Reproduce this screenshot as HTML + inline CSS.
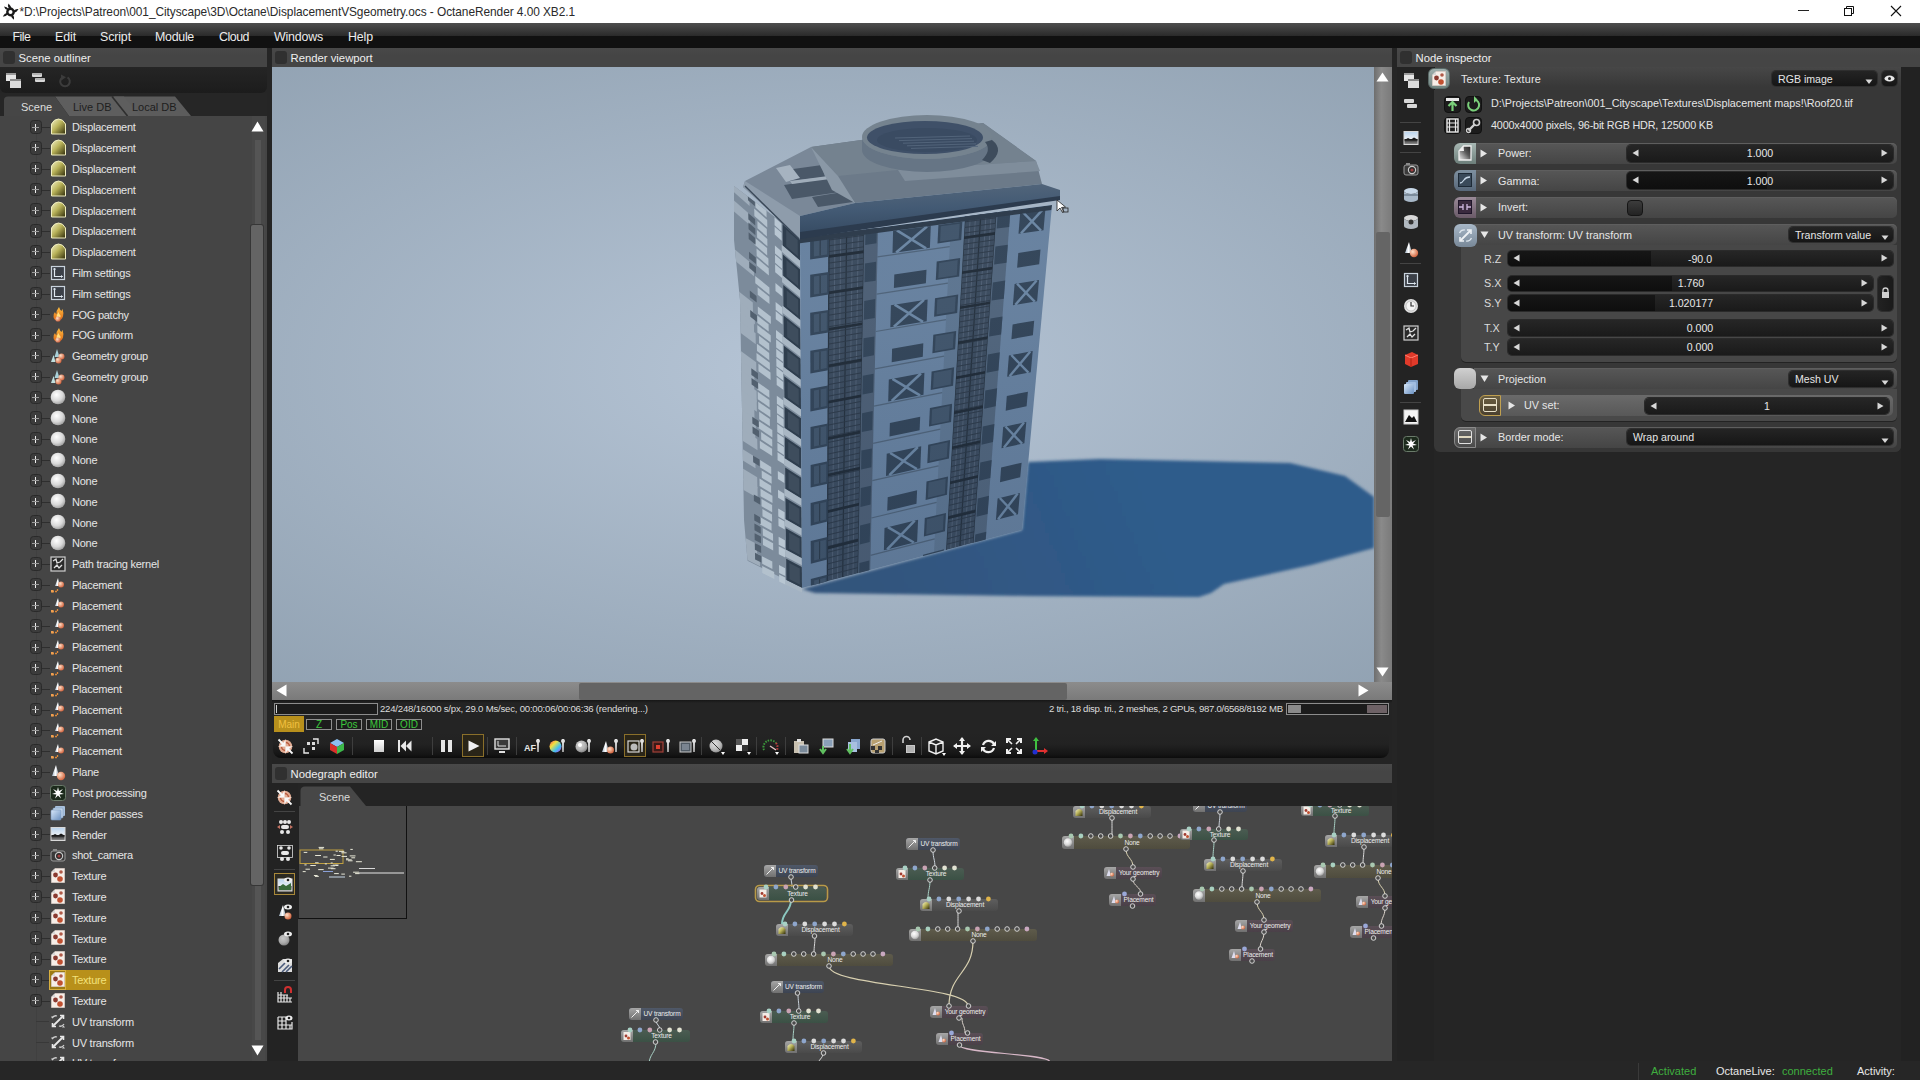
<!DOCTYPE html><html><head><meta charset="utf-8"><style>
html,body{margin:0;padding:0;width:1920px;height:1080px;overflow:hidden;background:#252525}
.a{position:absolute}
.t{font-family:"Liberation Sans",sans-serif;white-space:pre}
svg{overflow:visible}
</style></head><body>
<svg width="0" height="0" style="position:absolute"><defs>
<linearGradient id="gDisp" x1="0" y1="0" x2="1" y2="1"><stop offset="0" stop-color="#f4f2c8"/><stop offset="0.45" stop-color="#b9b35a"/><stop offset="1" stop-color="#2e2a08"/></linearGradient>
<radialGradient id="gSph" cx="0.4" cy="0.35" r="0.7"><stop offset="0" stop-color="#ffffff"/><stop offset="0.6" stop-color="#d8d8d8"/><stop offset="1" stop-color="#9a9a9a"/></radialGradient>
<radialGradient id="gOr" cx="0.35" cy="0.35" r="0.7"><stop offset="0" stop-color="#ffe0c8"/><stop offset="1" stop-color="#d0603a"/></radialGradient>
<linearGradient id="gCone" x1="0" y1="0" x2="1" y2="0"><stop offset="0" stop-color="#9fb3c6"/><stop offset="0.5" stop-color="#ffffff"/><stop offset="1" stop-color="#8a9aaa"/></linearGradient>
<linearGradient id="gFlame" x1="0" y1="0" x2="0" y2="1"><stop offset="0" stop-color="#ffc040"/><stop offset="1" stop-color="#e06818"/></linearGradient>
<linearGradient id="gBlue" x1="0" y1="0" x2="1" y2="1"><stop offset="0" stop-color="#d8e8fa"/><stop offset="1" stop-color="#6a90c0"/></linearGradient>
<linearGradient id="gImg" x1="0" y1="0" x2="0" y2="1"><stop offset="0" stop-color="#b9d4ee"/><stop offset="0.55" stop-color="#e8eef4"/><stop offset="0.6" stop-color="#202020"/><stop offset="1" stop-color="#9a9a9a"/></linearGradient>
</defs></svg>
<div class="a" style="left:0;top:0;width:1920px;height:23px;background:#fff"></div>
<svg class="a" style="left:2px;top:3px" width="17" height="17" viewBox="0 0 17 17">
<circle cx="8.5" cy="9" r="3.2" fill="none" stroke="#1a1a1a" stroke-width="2.4"/>
<g fill="#1a1a1a"><path d="M7 5.5Q5 3 6.5 0.5Q8.5 2.5 9.8 5.6Z"/><path d="M11.8 7.6Q14 5.5 16.5 6.2Q15 9 12 9.6Z"/><path d="M11 12Q13 14.5 12 16.8Q9.5 15 8.6 12.3Z"/><path d="M5.6 11.6Q3.5 14 0.8 13.5Q2.2 10.6 5.2 9.8Z"/><path d="M5.4 7Q2.8 6.2 2 3.5Q5 3.5 6.6 6Z"/></g></svg>
<div class="a t" style="left:19.50px;top:7.00px;font-size:11.9px;line-height:11.9px;color:#2a2a2a;letter-spacing:-0.062px;">*D:\Projects\Patreon\001_Cityscape\3D\Octane\DisplacementVSgeometry.ocs - OctaneRender 4.00 XB2.1</div>
<div class="a" style="left:1798px;top:10px;width:11px;height:1px;background:#222"></div>
<svg class="a" style="left:1843px;top:5px" width="12" height="12" viewBox="0 0 12 12"><rect x="1.5" y="3.5" width="7" height="7" fill="none" stroke="#111"/><path d="M3.5 3.5V1.5h7v7h-2" fill="none" stroke="#111"/></svg>
<svg class="a" style="left:1890px;top:5px" width="12" height="12" viewBox="0 0 12 12"><path d="M1 1L11 11M11 1L1 11" stroke="#111" stroke-width="1.1"/></svg>
<div class="a" style="left:0;top:23px;width:1920px;height:13px;background:linear-gradient(#4e4e4e,#2a2a2a)"></div>
<div class="a" style="left:0;top:36px;width:1920px;height:12px;background:#111"></div>
<div class="a t" style="left:12.50px;top:31.00px;font-size:12.4px;line-height:12.4px;color:#ececec;letter-spacing:-0.495px;">File</div>
<div class="a t" style="left:55.00px;top:31.00px;font-size:12.4px;line-height:12.4px;color:#ececec;letter-spacing:-0.092px;">Edit</div>
<div class="a t" style="left:100.00px;top:31.00px;font-size:12.4px;line-height:12.4px;color:#ececec;letter-spacing:-0.116px;">Script</div>
<div class="a t" style="left:155.00px;top:31.00px;font-size:12.4px;line-height:12.4px;color:#ececec;letter-spacing:-0.278px;">Module</div>
<div class="a t" style="left:219.00px;top:31.00px;font-size:12.4px;line-height:12.4px;color:#ececec;letter-spacing:-0.480px;">Cloud</div>
<div class="a t" style="left:274.00px;top:31.00px;font-size:12.4px;line-height:12.4px;color:#ececec;letter-spacing:-0.186px;">Windows</div>
<div class="a t" style="left:348.00px;top:31.00px;font-size:12.4px;line-height:12.4px;color:#ececec;letter-spacing:-0.126px;">Help</div>
<div class="a" style="left:0;top:48px;width:1920px;height:1013px;background:#252525"></div>
<div class="a" style="left:0;top:1061px;width:1920px;height:19px;background:#262626"></div>
<div class="a" style="left:1638px;top:1063px;width:1px;height:17px;background:#3a3a3a"></div>
<div class="a t" style="left:1651px;top:1064px;font-size:11px;color:#3fae3f;line-height:14px">Activated</div>
<div class="a t" style="left:1716px;top:1064px;font-size:11px;color:#e8e8e8;line-height:14px">OctaneLive:</div>
<div class="a t" style="left:1782px;top:1064px;font-size:11px;color:#3fae3f;line-height:14px">connected</div>
<div class="a t" style="left:1857px;top:1064px;font-size:11px;color:#e8e8e8;line-height:14px">Activity:</div>
<div class="a" style="left:0px;top:48px;width:267px;height:19px;background:linear-gradient(#494949,#454545 40%,#454545)"></div>
<div class="a" style="left:3px;top:51px;width:12px;height:13px;background:#303030;border-radius:3px"></div>
<div class="a t" style="left:18.50px;top:53.00px;font-size:11.3px;line-height:11.3px;color:#efefef;">Scene outliner</div>
<div class="a" style="left:0;top:67px;width:267px;height:26px;background:linear-gradient(#252525,#1c1c1c);border-radius:0 0 6px 6px"></div>
<svg class="a" style="left:5px;top:72px" width="17" height="17" viewBox="0 0 17 17"><rect x="1" y="1" width="10" height="8" fill="#e6e6e6"/><rect x="1" y="1" width="10" height="2" fill="#9a9a9a"/><rect x="5" y="7" width="11" height="9" fill="#dcdcdc"/><rect x="5" y="7" width="11" height="2" fill="#8a8a8a"/></svg>
<svg class="a" style="left:31px;top:72px" width="16" height="12" viewBox="0 0 16 12"><rect x="1" y="1" width="10" height="4" rx="1" fill="#d8d8d8"/><rect x="1.5" y="1.5" width="9" height="1" fill="#888"/><rect x="4" y="6" width="10" height="4" rx="1" fill="#d8d8d8"/><rect x="4.5" y="6.5" width="9" height="1" fill="#888"/></svg>
<svg class="a" style="left:58px;top:73px" width="14" height="16" viewBox="0 0 14 16"><path d="M4.2 4.6A4.8 4.8 0 1 0 9.5 4.4" fill="none" stroke="#3c3c3c" stroke-width="2"/><path d="M3 1.5L8 4.2L3.2 7.5Z" fill="#3c3c3c"/></svg>
<div class="a" style="left:0;top:93px;width:267px;height:23px;background:#262626"></div>
<svg class="a" style="left:0px;top:96px" width="200" height="20" viewBox="0 0 200 20"><path d="M114 0.5H175L191 20H127Z" fill="#5c5c5c"/><path d="M55 0.5H124L140 20H69Z" fill="#5e5e5e"/><path d="M4 20V4Q4 0.5 8 0.5H55L69 20Z" fill="#464646"/><path d="M112 0.5L127.5 20" stroke="#2e2e2e" stroke-width="1.6"/></svg>
<div class="a t" style="left:21px;top:100px;font-size:11px;color:#dedede;line-height:14px">Scene</div>
<div class="a t" style="left:73px;top:100px;font-size:11px;color:#1e1e1e;line-height:14px">Live DB</div>
<div class="a t" style="left:132px;top:100px;font-size:11px;color:#1e1e1e;line-height:14px">Local DB</div>
<div class="a" style="left:0;top:116px;width:267px;height:945px;background:#454545;overflow:hidden" id="outl">
<div class="a" style="left:36px;top:11px;width:1px;height:935px;background:#404040"></div>
<div class="a" style="left:29.5px;top:4.2px;width:12.5px;height:13.5px;box-sizing:border-box;border:1.4px solid #2a2a2a;background:#3c3c3c;border-radius:3.5px"></div>
<div class="a" style="left:35px;top:7.6px;width:1.2px;height:7px;background:#eeeeee"></div>
<div class="a" style="left:32px;top:10.6px;width:7px;height:1.1px;background:#9a9a9a"></div>
<div class="a" style="left:42px;top:11.2px;width:8px;height:1px;background:#2e2e2e"></div>
<svg class="a" style="left:50px;top:2px" width="17" height="17" viewBox="0 0 17 17"><path d="M1.5 16V6Q4 1 8.5 1Q13 1 15.5 6V16Z" fill="url(#gDisp)" stroke="#f0eec0" stroke-width="1"/></svg>
<div class="a t" style="left:72px;top:4px;font-size:11px;letter-spacing:-0.25px;color:#e6e6e6;line-height:14px">Displacement</div>
<div class="a" style="left:29.5px;top:25.0px;width:12.5px;height:13.5px;box-sizing:border-box;border:1.4px solid #2a2a2a;background:#3c3c3c;border-radius:3.5px"></div>
<div class="a" style="left:35px;top:28.4px;width:1.2px;height:7px;background:#eeeeee"></div>
<div class="a" style="left:32px;top:31.4px;width:7px;height:1.1px;background:#9a9a9a"></div>
<div class="a" style="left:42px;top:32.0px;width:8px;height:1px;background:#2e2e2e"></div>
<svg class="a" style="left:50px;top:23px" width="17" height="17" viewBox="0 0 17 17"><path d="M1.5 16V6Q4 1 8.5 1Q13 1 15.5 6V16Z" fill="url(#gDisp)" stroke="#f0eec0" stroke-width="1"/></svg>
<div class="a t" style="left:72px;top:25px;font-size:11px;letter-spacing:-0.25px;color:#e6e6e6;line-height:14px">Displacement</div>
<div class="a" style="left:29.5px;top:45.8px;width:12.5px;height:13.5px;box-sizing:border-box;border:1.4px solid #2a2a2a;background:#3c3c3c;border-radius:3.5px"></div>
<div class="a" style="left:35px;top:49.2px;width:1.2px;height:7px;background:#eeeeee"></div>
<div class="a" style="left:32px;top:52.2px;width:7px;height:1.1px;background:#9a9a9a"></div>
<div class="a" style="left:42px;top:52.8px;width:8px;height:1px;background:#2e2e2e"></div>
<svg class="a" style="left:50px;top:44px" width="17" height="17" viewBox="0 0 17 17"><path d="M1.5 16V6Q4 1 8.5 1Q13 1 15.5 6V16Z" fill="url(#gDisp)" stroke="#f0eec0" stroke-width="1"/></svg>
<div class="a t" style="left:72px;top:46px;font-size:11px;letter-spacing:-0.25px;color:#e6e6e6;line-height:14px">Displacement</div>
<div class="a" style="left:29.5px;top:66.6px;width:12.5px;height:13.5px;box-sizing:border-box;border:1.4px solid #2a2a2a;background:#3c3c3c;border-radius:3.5px"></div>
<div class="a" style="left:35px;top:70.0px;width:1.2px;height:7px;background:#eeeeee"></div>
<div class="a" style="left:32px;top:73.0px;width:7px;height:1.1px;background:#9a9a9a"></div>
<div class="a" style="left:42px;top:73.6px;width:8px;height:1px;background:#2e2e2e"></div>
<svg class="a" style="left:50px;top:64px" width="17" height="17" viewBox="0 0 17 17"><path d="M1.5 16V6Q4 1 8.5 1Q13 1 15.5 6V16Z" fill="url(#gDisp)" stroke="#f0eec0" stroke-width="1"/></svg>
<div class="a t" style="left:72px;top:67px;font-size:11px;letter-spacing:-0.25px;color:#e6e6e6;line-height:14px">Displacement</div>
<div class="a" style="left:29.5px;top:87.4px;width:12.5px;height:13.5px;box-sizing:border-box;border:1.4px solid #2a2a2a;background:#3c3c3c;border-radius:3.5px"></div>
<div class="a" style="left:35px;top:90.8px;width:1.2px;height:7px;background:#eeeeee"></div>
<div class="a" style="left:32px;top:93.8px;width:7px;height:1.1px;background:#9a9a9a"></div>
<div class="a" style="left:42px;top:94.4px;width:8px;height:1px;background:#2e2e2e"></div>
<svg class="a" style="left:50px;top:85px" width="17" height="17" viewBox="0 0 17 17"><path d="M1.5 16V6Q4 1 8.5 1Q13 1 15.5 6V16Z" fill="url(#gDisp)" stroke="#f0eec0" stroke-width="1"/></svg>
<div class="a t" style="left:72px;top:88px;font-size:11px;letter-spacing:-0.25px;color:#e6e6e6;line-height:14px">Displacement</div>
<div class="a" style="left:29.5px;top:108.2px;width:12.5px;height:13.5px;box-sizing:border-box;border:1.4px solid #2a2a2a;background:#3c3c3c;border-radius:3.5px"></div>
<div class="a" style="left:35px;top:111.6px;width:1.2px;height:7px;background:#eeeeee"></div>
<div class="a" style="left:32px;top:114.6px;width:7px;height:1.1px;background:#9a9a9a"></div>
<div class="a" style="left:42px;top:115.2px;width:8px;height:1px;background:#2e2e2e"></div>
<svg class="a" style="left:50px;top:106px" width="17" height="17" viewBox="0 0 17 17"><path d="M1.5 16V6Q4 1 8.5 1Q13 1 15.5 6V16Z" fill="url(#gDisp)" stroke="#f0eec0" stroke-width="1"/></svg>
<div class="a t" style="left:72px;top:108px;font-size:11px;letter-spacing:-0.25px;color:#e6e6e6;line-height:14px">Displacement</div>
<div class="a" style="left:29.5px;top:129.0px;width:12.5px;height:13.5px;box-sizing:border-box;border:1.4px solid #2a2a2a;background:#3c3c3c;border-radius:3.5px"></div>
<div class="a" style="left:35px;top:132.4px;width:1.2px;height:7px;background:#eeeeee"></div>
<div class="a" style="left:32px;top:135.4px;width:7px;height:1.1px;background:#9a9a9a"></div>
<div class="a" style="left:42px;top:136.0px;width:8px;height:1px;background:#2e2e2e"></div>
<svg class="a" style="left:50px;top:127px" width="17" height="17" viewBox="0 0 17 17"><path d="M1.5 16V6Q4 1 8.5 1Q13 1 15.5 6V16Z" fill="url(#gDisp)" stroke="#f0eec0" stroke-width="1"/></svg>
<div class="a t" style="left:72px;top:129px;font-size:11px;letter-spacing:-0.25px;color:#e6e6e6;line-height:14px">Displacement</div>
<div class="a" style="left:29.5px;top:149.8px;width:12.5px;height:13.5px;box-sizing:border-box;border:1.4px solid #2a2a2a;background:#3c3c3c;border-radius:3.5px"></div>
<div class="a" style="left:35px;top:153.2px;width:1.2px;height:7px;background:#eeeeee"></div>
<div class="a" style="left:32px;top:156.2px;width:7px;height:1.1px;background:#9a9a9a"></div>
<div class="a" style="left:42px;top:156.8px;width:8px;height:1px;background:#2e2e2e"></div>
<svg class="a" style="left:50px;top:149px" width="16" height="16" viewBox="0 0 16 16"><rect x="1.5" y="1.5" width="13" height="13" fill="#3b4048" stroke="#c8d2dc" stroke-width="1.2"/><path d="M4.5 3.5V11.5H12.5" fill="none" stroke="#dfe8f0" stroke-width="1.2"/><path d="M3.5 4.5L4.5 3L5.5 4.5M11 10.5L12.5 11.5L11 12.5" fill="none" stroke="#dfe8f0"/></svg>
<div class="a t" style="left:72px;top:150px;font-size:11px;letter-spacing:-0.25px;color:#e6e6e6;line-height:14px">Film settings</div>
<div class="a" style="left:29.5px;top:170.6px;width:12.5px;height:13.5px;box-sizing:border-box;border:1.4px solid #2a2a2a;background:#3c3c3c;border-radius:3.5px"></div>
<div class="a" style="left:35px;top:174.0px;width:1.2px;height:7px;background:#eeeeee"></div>
<div class="a" style="left:32px;top:177.0px;width:7px;height:1.1px;background:#9a9a9a"></div>
<div class="a" style="left:42px;top:177.6px;width:8px;height:1px;background:#2e2e2e"></div>
<svg class="a" style="left:50px;top:169px" width="16" height="16" viewBox="0 0 16 16"><rect x="1.5" y="1.5" width="13" height="13" fill="#3b4048" stroke="#c8d2dc" stroke-width="1.2"/><path d="M4.5 3.5V11.5H12.5" fill="none" stroke="#dfe8f0" stroke-width="1.2"/><path d="M3.5 4.5L4.5 3L5.5 4.5M11 10.5L12.5 11.5L11 12.5" fill="none" stroke="#dfe8f0"/></svg>
<div class="a t" style="left:72px;top:171px;font-size:11px;letter-spacing:-0.25px;color:#e6e6e6;line-height:14px">Film settings</div>
<div class="a" style="left:29.5px;top:191.4px;width:12.5px;height:13.5px;box-sizing:border-box;border:1.4px solid #2a2a2a;background:#3c3c3c;border-radius:3.5px"></div>
<div class="a" style="left:35px;top:194.8px;width:1.2px;height:7px;background:#eeeeee"></div>
<div class="a" style="left:32px;top:197.8px;width:7px;height:1.1px;background:#9a9a9a"></div>
<div class="a" style="left:42px;top:198.4px;width:8px;height:1px;background:#2e2e2e"></div>
<svg class="a" style="left:50px;top:190px" width="16" height="17" viewBox="0 0 16 17"><path d="M9 1Q10 4 11.5 5Q12 3.5 12.5 3Q14 7 13 10.5Q11.5 14.5 8 14.5Q4 14.5 3.5 11Q3 8 5 6Q5.5 8 6.5 8Q6 4.5 9 1Z" fill="url(#gFlame)"/><path d="M8.5 6Q9.5 9 10.5 9.5Q11 11 9.5 12.5Q7 13 6.5 11Q6.5 9 8.5 6Z" fill="#ffe080"/><circle cx="8" cy="13" r="2.6" fill="url(#gOr)"/></svg>
<div class="a t" style="left:72px;top:192px;font-size:11px;letter-spacing:-0.25px;color:#e6e6e6;line-height:14px">FOG patchy</div>
<div class="a" style="left:29.5px;top:212.2px;width:12.5px;height:13.5px;box-sizing:border-box;border:1.4px solid #2a2a2a;background:#3c3c3c;border-radius:3.5px"></div>
<div class="a" style="left:35px;top:215.6px;width:1.2px;height:7px;background:#eeeeee"></div>
<div class="a" style="left:32px;top:218.6px;width:7px;height:1.1px;background:#9a9a9a"></div>
<div class="a" style="left:42px;top:219.2px;width:8px;height:1px;background:#2e2e2e"></div>
<svg class="a" style="left:50px;top:211px" width="16" height="17" viewBox="0 0 16 17"><path d="M9 1Q10 4 11.5 5Q12 3.5 12.5 3Q14 7 13 10.5Q11.5 14.5 8 14.5Q4 14.5 3.5 11Q3 8 5 6Q5.5 8 6.5 8Q6 4.5 9 1Z" fill="url(#gFlame)"/><path d="M8.5 6Q9.5 9 10.5 9.5Q11 11 9.5 12.5Q7 13 6.5 11Q6.5 9 8.5 6Z" fill="#ffe080"/><circle cx="8" cy="13" r="2.6" fill="url(#gOr)"/></svg>
<div class="a t" style="left:72px;top:212px;font-size:11px;letter-spacing:-0.25px;color:#e6e6e6;line-height:14px">FOG uniform</div>
<div class="a" style="left:29.5px;top:233.0px;width:12.5px;height:13.5px;box-sizing:border-box;border:1.4px solid #2a2a2a;background:#3c3c3c;border-radius:3.5px"></div>
<div class="a" style="left:35px;top:236.4px;width:1.2px;height:7px;background:#eeeeee"></div>
<div class="a" style="left:32px;top:239.4px;width:7px;height:1.1px;background:#9a9a9a"></div>
<div class="a" style="left:42px;top:240.0px;width:8px;height:1px;background:#2e2e2e"></div>
<svg class="a" style="left:50px;top:232px" width="16" height="16" viewBox="0 0 16 16"><path d="M7 1L4.5 9H9.5Z" fill="#a8d0d8"/><path d="M3.5 7L1 14H5.5Z" fill="#c0e0e0"/><circle cx="11.5" cy="8.5" r="3" fill="url(#gOr)"/><circle cx="8.5" cy="12.5" r="3" fill="url(#gOr)"/></svg>
<div class="a t" style="left:72px;top:233px;font-size:11px;letter-spacing:-0.25px;color:#e6e6e6;line-height:14px">Geometry group</div>
<div class="a" style="left:29.5px;top:253.8px;width:12.5px;height:13.5px;box-sizing:border-box;border:1.4px solid #2a2a2a;background:#3c3c3c;border-radius:3.5px"></div>
<div class="a" style="left:35px;top:257.2px;width:1.2px;height:7px;background:#eeeeee"></div>
<div class="a" style="left:32px;top:260.2px;width:7px;height:1.1px;background:#9a9a9a"></div>
<div class="a" style="left:42px;top:260.8px;width:8px;height:1px;background:#2e2e2e"></div>
<svg class="a" style="left:50px;top:253px" width="16" height="16" viewBox="0 0 16 16"><path d="M7 1L4.5 9H9.5Z" fill="#a8d0d8"/><path d="M3.5 7L1 14H5.5Z" fill="#c0e0e0"/><circle cx="11.5" cy="8.5" r="3" fill="url(#gOr)"/><circle cx="8.5" cy="12.5" r="3" fill="url(#gOr)"/></svg>
<div class="a t" style="left:72px;top:254px;font-size:11px;letter-spacing:-0.25px;color:#e6e6e6;line-height:14px">Geometry group</div>
<div class="a" style="left:29.5px;top:274.6px;width:12.5px;height:13.5px;box-sizing:border-box;border:1.4px solid #2a2a2a;background:#3c3c3c;border-radius:3.5px"></div>
<div class="a" style="left:35px;top:278.0px;width:1.2px;height:7px;background:#eeeeee"></div>
<div class="a" style="left:32px;top:281.0px;width:7px;height:1.1px;background:#9a9a9a"></div>
<div class="a" style="left:42px;top:281.6px;width:8px;height:1px;background:#2e2e2e"></div>
<svg class="a" style="left:50px;top:273px" width="16" height="16" viewBox="0 0 16 16"><circle cx="8" cy="8" r="7.3" fill="url(#gSph)"/></svg>
<div class="a t" style="left:72px;top:275px;font-size:11px;letter-spacing:-0.25px;color:#e6e6e6;line-height:14px">None</div>
<div class="a" style="left:29.5px;top:295.4px;width:12.5px;height:13.5px;box-sizing:border-box;border:1.4px solid #2a2a2a;background:#3c3c3c;border-radius:3.5px"></div>
<div class="a" style="left:35px;top:298.8px;width:1.2px;height:7px;background:#eeeeee"></div>
<div class="a" style="left:32px;top:301.8px;width:7px;height:1.1px;background:#9a9a9a"></div>
<div class="a" style="left:42px;top:302.4px;width:8px;height:1px;background:#2e2e2e"></div>
<svg class="a" style="left:50px;top:294px" width="16" height="16" viewBox="0 0 16 16"><circle cx="8" cy="8" r="7.3" fill="url(#gSph)"/></svg>
<div class="a t" style="left:72px;top:296px;font-size:11px;letter-spacing:-0.25px;color:#e6e6e6;line-height:14px">None</div>
<div class="a" style="left:29.5px;top:316.2px;width:12.5px;height:13.5px;box-sizing:border-box;border:1.4px solid #2a2a2a;background:#3c3c3c;border-radius:3.5px"></div>
<div class="a" style="left:35px;top:319.6px;width:1.2px;height:7px;background:#eeeeee"></div>
<div class="a" style="left:32px;top:322.6px;width:7px;height:1.1px;background:#9a9a9a"></div>
<div class="a" style="left:42px;top:323.2px;width:8px;height:1px;background:#2e2e2e"></div>
<svg class="a" style="left:50px;top:315px" width="16" height="16" viewBox="0 0 16 16"><circle cx="8" cy="8" r="7.3" fill="url(#gSph)"/></svg>
<div class="a t" style="left:72px;top:316px;font-size:11px;letter-spacing:-0.25px;color:#e6e6e6;line-height:14px">None</div>
<div class="a" style="left:29.5px;top:337.0px;width:12.5px;height:13.5px;box-sizing:border-box;border:1.4px solid #2a2a2a;background:#3c3c3c;border-radius:3.5px"></div>
<div class="a" style="left:35px;top:340.4px;width:1.2px;height:7px;background:#eeeeee"></div>
<div class="a" style="left:32px;top:343.4px;width:7px;height:1.1px;background:#9a9a9a"></div>
<div class="a" style="left:42px;top:344.0px;width:8px;height:1px;background:#2e2e2e"></div>
<svg class="a" style="left:50px;top:336px" width="16" height="16" viewBox="0 0 16 16"><circle cx="8" cy="8" r="7.3" fill="url(#gSph)"/></svg>
<div class="a t" style="left:72px;top:337px;font-size:11px;letter-spacing:-0.25px;color:#e6e6e6;line-height:14px">None</div>
<div class="a" style="left:29.5px;top:357.8px;width:12.5px;height:13.5px;box-sizing:border-box;border:1.4px solid #2a2a2a;background:#3c3c3c;border-radius:3.5px"></div>
<div class="a" style="left:35px;top:361.2px;width:1.2px;height:7px;background:#eeeeee"></div>
<div class="a" style="left:32px;top:364.2px;width:7px;height:1.1px;background:#9a9a9a"></div>
<div class="a" style="left:42px;top:364.8px;width:8px;height:1px;background:#2e2e2e"></div>
<svg class="a" style="left:50px;top:357px" width="16" height="16" viewBox="0 0 16 16"><circle cx="8" cy="8" r="7.3" fill="url(#gSph)"/></svg>
<div class="a t" style="left:72px;top:358px;font-size:11px;letter-spacing:-0.25px;color:#e6e6e6;line-height:14px">None</div>
<div class="a" style="left:29.5px;top:378.6px;width:12.5px;height:13.5px;box-sizing:border-box;border:1.4px solid #2a2a2a;background:#3c3c3c;border-radius:3.5px"></div>
<div class="a" style="left:35px;top:382.0px;width:1.2px;height:7px;background:#eeeeee"></div>
<div class="a" style="left:32px;top:385.0px;width:7px;height:1.1px;background:#9a9a9a"></div>
<div class="a" style="left:42px;top:385.6px;width:8px;height:1px;background:#2e2e2e"></div>
<svg class="a" style="left:50px;top:377px" width="16" height="16" viewBox="0 0 16 16"><circle cx="8" cy="8" r="7.3" fill="url(#gSph)"/></svg>
<div class="a t" style="left:72px;top:379px;font-size:11px;letter-spacing:-0.25px;color:#e6e6e6;line-height:14px">None</div>
<div class="a" style="left:29.5px;top:399.4px;width:12.5px;height:13.5px;box-sizing:border-box;border:1.4px solid #2a2a2a;background:#3c3c3c;border-radius:3.5px"></div>
<div class="a" style="left:35px;top:402.8px;width:1.2px;height:7px;background:#eeeeee"></div>
<div class="a" style="left:32px;top:405.8px;width:7px;height:1.1px;background:#9a9a9a"></div>
<div class="a" style="left:42px;top:406.4px;width:8px;height:1px;background:#2e2e2e"></div>
<svg class="a" style="left:50px;top:398px" width="16" height="16" viewBox="0 0 16 16"><circle cx="8" cy="8" r="7.3" fill="url(#gSph)"/></svg>
<div class="a t" style="left:72px;top:400px;font-size:11px;letter-spacing:-0.25px;color:#e6e6e6;line-height:14px">None</div>
<div class="a" style="left:29.5px;top:420.2px;width:12.5px;height:13.5px;box-sizing:border-box;border:1.4px solid #2a2a2a;background:#3c3c3c;border-radius:3.5px"></div>
<div class="a" style="left:35px;top:423.6px;width:1.2px;height:7px;background:#eeeeee"></div>
<div class="a" style="left:32px;top:426.6px;width:7px;height:1.1px;background:#9a9a9a"></div>
<div class="a" style="left:42px;top:427.2px;width:8px;height:1px;background:#2e2e2e"></div>
<svg class="a" style="left:50px;top:419px" width="16" height="16" viewBox="0 0 16 16"><circle cx="8" cy="8" r="7.3" fill="url(#gSph)"/></svg>
<div class="a t" style="left:72px;top:420px;font-size:11px;letter-spacing:-0.25px;color:#e6e6e6;line-height:14px">None</div>
<div class="a" style="left:29.5px;top:441.0px;width:12.5px;height:13.5px;box-sizing:border-box;border:1.4px solid #2a2a2a;background:#3c3c3c;border-radius:3.5px"></div>
<div class="a" style="left:35px;top:444.4px;width:1.2px;height:7px;background:#eeeeee"></div>
<div class="a" style="left:32px;top:447.4px;width:7px;height:1.1px;background:#9a9a9a"></div>
<div class="a" style="left:42px;top:448.0px;width:8px;height:1px;background:#2e2e2e"></div>
<svg class="a" style="left:50px;top:440px" width="16" height="16" viewBox="0 0 16 16"><rect x="1" y="1" width="14" height="14" fill="#2a2a2a" stroke="#d0d0d0" stroke-width="1.2"/><path d="M3 5L6 3L7 7L10 6L13 3M4 12L7 9L9 12L12 9" fill="none" stroke="#e0e0e0" stroke-width="1.3"/></svg>
<div class="a t" style="left:72px;top:441px;font-size:11px;letter-spacing:-0.25px;color:#e6e6e6;line-height:14px">Path tracing kernel</div>
<div class="a" style="left:29.5px;top:461.8px;width:12.5px;height:13.5px;box-sizing:border-box;border:1.4px solid #2a2a2a;background:#3c3c3c;border-radius:3.5px"></div>
<div class="a" style="left:35px;top:465.2px;width:1.2px;height:7px;background:#eeeeee"></div>
<div class="a" style="left:32px;top:468.2px;width:7px;height:1.1px;background:#9a9a9a"></div>
<div class="a" style="left:42px;top:468.8px;width:8px;height:1px;background:#2e2e2e"></div>
<svg class="a" style="left:50px;top:461px" width="16" height="16" viewBox="0 0 16 16"><path d="M8 1L5 9H10Z" fill="url(#gCone)"/><circle cx="11" cy="7.5" r="3" fill="url(#gOr)"/><path d="M2 14.5H7.5V11.5" fill="none" stroke="#e08a3a" stroke-width="1.3" stroke-dasharray="2 1"/><rect x="1" y="13" width="2.5" height="2.5" fill="#f0a050"/></svg>
<div class="a t" style="left:72px;top:462px;font-size:11px;letter-spacing:-0.25px;color:#e6e6e6;line-height:14px">Placement</div>
<div class="a" style="left:29.5px;top:482.6px;width:12.5px;height:13.5px;box-sizing:border-box;border:1.4px solid #2a2a2a;background:#3c3c3c;border-radius:3.5px"></div>
<div class="a" style="left:35px;top:486.0px;width:1.2px;height:7px;background:#eeeeee"></div>
<div class="a" style="left:32px;top:489.0px;width:7px;height:1.1px;background:#9a9a9a"></div>
<div class="a" style="left:42px;top:489.6px;width:8px;height:1px;background:#2e2e2e"></div>
<svg class="a" style="left:50px;top:481px" width="16" height="16" viewBox="0 0 16 16"><path d="M8 1L5 9H10Z" fill="url(#gCone)"/><circle cx="11" cy="7.5" r="3" fill="url(#gOr)"/><path d="M2 14.5H7.5V11.5" fill="none" stroke="#e08a3a" stroke-width="1.3" stroke-dasharray="2 1"/><rect x="1" y="13" width="2.5" height="2.5" fill="#f0a050"/></svg>
<div class="a t" style="left:72px;top:483px;font-size:11px;letter-spacing:-0.25px;color:#e6e6e6;line-height:14px">Placement</div>
<div class="a" style="left:29.5px;top:503.4px;width:12.5px;height:13.5px;box-sizing:border-box;border:1.4px solid #2a2a2a;background:#3c3c3c;border-radius:3.5px"></div>
<div class="a" style="left:35px;top:506.8px;width:1.2px;height:7px;background:#eeeeee"></div>
<div class="a" style="left:32px;top:509.8px;width:7px;height:1.1px;background:#9a9a9a"></div>
<div class="a" style="left:42px;top:510.4px;width:8px;height:1px;background:#2e2e2e"></div>
<svg class="a" style="left:50px;top:502px" width="16" height="16" viewBox="0 0 16 16"><path d="M8 1L5 9H10Z" fill="url(#gCone)"/><circle cx="11" cy="7.5" r="3" fill="url(#gOr)"/><path d="M2 14.5H7.5V11.5" fill="none" stroke="#e08a3a" stroke-width="1.3" stroke-dasharray="2 1"/><rect x="1" y="13" width="2.5" height="2.5" fill="#f0a050"/></svg>
<div class="a t" style="left:72px;top:504px;font-size:11px;letter-spacing:-0.25px;color:#e6e6e6;line-height:14px">Placement</div>
<div class="a" style="left:29.5px;top:524.2px;width:12.5px;height:13.5px;box-sizing:border-box;border:1.4px solid #2a2a2a;background:#3c3c3c;border-radius:3.5px"></div>
<div class="a" style="left:35px;top:527.6px;width:1.2px;height:7px;background:#eeeeee"></div>
<div class="a" style="left:32px;top:530.6px;width:7px;height:1.1px;background:#9a9a9a"></div>
<div class="a" style="left:42px;top:531.2px;width:8px;height:1px;background:#2e2e2e"></div>
<svg class="a" style="left:50px;top:523px" width="16" height="16" viewBox="0 0 16 16"><path d="M8 1L5 9H10Z" fill="url(#gCone)"/><circle cx="11" cy="7.5" r="3" fill="url(#gOr)"/><path d="M2 14.5H7.5V11.5" fill="none" stroke="#e08a3a" stroke-width="1.3" stroke-dasharray="2 1"/><rect x="1" y="13" width="2.5" height="2.5" fill="#f0a050"/></svg>
<div class="a t" style="left:72px;top:524px;font-size:11px;letter-spacing:-0.25px;color:#e6e6e6;line-height:14px">Placement</div>
<div class="a" style="left:29.5px;top:545.0px;width:12.5px;height:13.5px;box-sizing:border-box;border:1.4px solid #2a2a2a;background:#3c3c3c;border-radius:3.5px"></div>
<div class="a" style="left:35px;top:548.4px;width:1.2px;height:7px;background:#eeeeee"></div>
<div class="a" style="left:32px;top:551.4px;width:7px;height:1.1px;background:#9a9a9a"></div>
<div class="a" style="left:42px;top:552.0px;width:8px;height:1px;background:#2e2e2e"></div>
<svg class="a" style="left:50px;top:544px" width="16" height="16" viewBox="0 0 16 16"><path d="M8 1L5 9H10Z" fill="url(#gCone)"/><circle cx="11" cy="7.5" r="3" fill="url(#gOr)"/><path d="M2 14.5H7.5V11.5" fill="none" stroke="#e08a3a" stroke-width="1.3" stroke-dasharray="2 1"/><rect x="1" y="13" width="2.5" height="2.5" fill="#f0a050"/></svg>
<div class="a t" style="left:72px;top:545px;font-size:11px;letter-spacing:-0.25px;color:#e6e6e6;line-height:14px">Placement</div>
<div class="a" style="left:29.5px;top:565.8px;width:12.5px;height:13.5px;box-sizing:border-box;border:1.4px solid #2a2a2a;background:#3c3c3c;border-radius:3.5px"></div>
<div class="a" style="left:35px;top:569.2px;width:1.2px;height:7px;background:#eeeeee"></div>
<div class="a" style="left:32px;top:572.2px;width:7px;height:1.1px;background:#9a9a9a"></div>
<div class="a" style="left:42px;top:572.8px;width:8px;height:1px;background:#2e2e2e"></div>
<svg class="a" style="left:50px;top:565px" width="16" height="16" viewBox="0 0 16 16"><path d="M8 1L5 9H10Z" fill="url(#gCone)"/><circle cx="11" cy="7.5" r="3" fill="url(#gOr)"/><path d="M2 14.5H7.5V11.5" fill="none" stroke="#e08a3a" stroke-width="1.3" stroke-dasharray="2 1"/><rect x="1" y="13" width="2.5" height="2.5" fill="#f0a050"/></svg>
<div class="a t" style="left:72px;top:566px;font-size:11px;letter-spacing:-0.25px;color:#e6e6e6;line-height:14px">Placement</div>
<div class="a" style="left:29.5px;top:586.6px;width:12.5px;height:13.5px;box-sizing:border-box;border:1.4px solid #2a2a2a;background:#3c3c3c;border-radius:3.5px"></div>
<div class="a" style="left:35px;top:590.0px;width:1.2px;height:7px;background:#eeeeee"></div>
<div class="a" style="left:32px;top:593.0px;width:7px;height:1.1px;background:#9a9a9a"></div>
<div class="a" style="left:42px;top:593.6px;width:8px;height:1px;background:#2e2e2e"></div>
<svg class="a" style="left:50px;top:585px" width="16" height="16" viewBox="0 0 16 16"><path d="M8 1L5 9H10Z" fill="url(#gCone)"/><circle cx="11" cy="7.5" r="3" fill="url(#gOr)"/><path d="M2 14.5H7.5V11.5" fill="none" stroke="#e08a3a" stroke-width="1.3" stroke-dasharray="2 1"/><rect x="1" y="13" width="2.5" height="2.5" fill="#f0a050"/></svg>
<div class="a t" style="left:72px;top:587px;font-size:11px;letter-spacing:-0.25px;color:#e6e6e6;line-height:14px">Placement</div>
<div class="a" style="left:29.5px;top:607.4px;width:12.5px;height:13.5px;box-sizing:border-box;border:1.4px solid #2a2a2a;background:#3c3c3c;border-radius:3.5px"></div>
<div class="a" style="left:35px;top:610.8px;width:1.2px;height:7px;background:#eeeeee"></div>
<div class="a" style="left:32px;top:613.8px;width:7px;height:1.1px;background:#9a9a9a"></div>
<div class="a" style="left:42px;top:614.4px;width:8px;height:1px;background:#2e2e2e"></div>
<svg class="a" style="left:50px;top:606px" width="16" height="16" viewBox="0 0 16 16"><path d="M8 1L5 9H10Z" fill="url(#gCone)"/><circle cx="11" cy="7.5" r="3" fill="url(#gOr)"/><path d="M2 14.5H7.5V11.5" fill="none" stroke="#e08a3a" stroke-width="1.3" stroke-dasharray="2 1"/><rect x="1" y="13" width="2.5" height="2.5" fill="#f0a050"/></svg>
<div class="a t" style="left:72px;top:608px;font-size:11px;letter-spacing:-0.25px;color:#e6e6e6;line-height:14px">Placement</div>
<div class="a" style="left:29.5px;top:628.2px;width:12.5px;height:13.5px;box-sizing:border-box;border:1.4px solid #2a2a2a;background:#3c3c3c;border-radius:3.5px"></div>
<div class="a" style="left:35px;top:631.6px;width:1.2px;height:7px;background:#eeeeee"></div>
<div class="a" style="left:32px;top:634.6px;width:7px;height:1.1px;background:#9a9a9a"></div>
<div class="a" style="left:42px;top:635.2px;width:8px;height:1px;background:#2e2e2e"></div>
<svg class="a" style="left:50px;top:627px" width="16" height="16" viewBox="0 0 16 16"><path d="M8 1L5 9H10Z" fill="url(#gCone)"/><circle cx="11" cy="7.5" r="3" fill="url(#gOr)"/><path d="M2 14.5H7.5V11.5" fill="none" stroke="#e08a3a" stroke-width="1.3" stroke-dasharray="2 1"/><rect x="1" y="13" width="2.5" height="2.5" fill="#f0a050"/></svg>
<div class="a t" style="left:72px;top:628px;font-size:11px;letter-spacing:-0.25px;color:#e6e6e6;line-height:14px">Placement</div>
<div class="a" style="left:29.5px;top:649.0px;width:12.5px;height:13.5px;box-sizing:border-box;border:1.4px solid #2a2a2a;background:#3c3c3c;border-radius:3.5px"></div>
<div class="a" style="left:35px;top:652.4px;width:1.2px;height:7px;background:#eeeeee"></div>
<div class="a" style="left:32px;top:655.4px;width:7px;height:1.1px;background:#9a9a9a"></div>
<div class="a" style="left:42px;top:656.0px;width:8px;height:1px;background:#2e2e2e"></div>
<svg class="a" style="left:50px;top:648px" width="16" height="17" viewBox="0 0 16 17"><path d="M6 1L2 12H9Z" fill="url(#gCone)"/><circle cx="11" cy="12" r="4.2" fill="url(#gOr)"/></svg>
<div class="a t" style="left:72px;top:649px;font-size:11px;letter-spacing:-0.25px;color:#e6e6e6;line-height:14px">Plane</div>
<div class="a" style="left:29.5px;top:669.8px;width:12.5px;height:13.5px;box-sizing:border-box;border:1.4px solid #2a2a2a;background:#3c3c3c;border-radius:3.5px"></div>
<div class="a" style="left:35px;top:673.2px;width:1.2px;height:7px;background:#eeeeee"></div>
<div class="a" style="left:32px;top:676.2px;width:7px;height:1.1px;background:#9a9a9a"></div>
<div class="a" style="left:42px;top:676.8px;width:8px;height:1px;background:#2e2e2e"></div>
<svg class="a" style="left:50px;top:669px" width="16" height="16" viewBox="0 0 16 16"><rect x="0.5" y="0.5" width="15" height="15" rx="3" fill="#1c2a1c" stroke="#6a7a6a"/><path d="M8 2L9 6L13 4L10 7.5L14 9L9.5 9.5L11 13.5L8 10.5L5 13.5L6.5 9.5L2 9L6 7.5L3 4L7 6Z" fill="#ffffff"/></svg>
<div class="a t" style="left:72px;top:670px;font-size:11px;letter-spacing:-0.25px;color:#e6e6e6;line-height:14px">Post processing</div>
<div class="a" style="left:29.5px;top:690.6px;width:12.5px;height:13.5px;box-sizing:border-box;border:1.4px solid #2a2a2a;background:#3c3c3c;border-radius:3.5px"></div>
<div class="a" style="left:35px;top:694.0px;width:1.2px;height:7px;background:#eeeeee"></div>
<div class="a" style="left:32px;top:697.0px;width:7px;height:1.1px;background:#9a9a9a"></div>
<div class="a" style="left:42px;top:697.6px;width:8px;height:1px;background:#2e2e2e"></div>
<svg class="a" style="left:50px;top:689px" width="16" height="16" viewBox="0 0 16 16"><rect x="5" y="1" width="10" height="10" rx="1" fill="#a8c0dc"/><rect x="3" y="3" width="10" height="10" rx="1" fill="#c0d4ea" stroke="#7e9cc0" stroke-width="0.6"/><rect x="1" y="5" width="10" height="10" rx="1" fill="url(#gBlue)" stroke="#7e9cc0" stroke-width="0.6"/></svg>
<div class="a t" style="left:72px;top:691px;font-size:11px;letter-spacing:-0.25px;color:#e6e6e6;line-height:14px">Render passes</div>
<div class="a" style="left:29.5px;top:711.4px;width:12.5px;height:13.5px;box-sizing:border-box;border:1.4px solid #2a2a2a;background:#3c3c3c;border-radius:3.5px"></div>
<div class="a" style="left:35px;top:714.8px;width:1.2px;height:7px;background:#eeeeee"></div>
<div class="a" style="left:32px;top:717.8px;width:7px;height:1.1px;background:#9a9a9a"></div>
<div class="a" style="left:42px;top:718.4px;width:8px;height:1px;background:#2e2e2e"></div>
<svg class="a" style="left:50px;top:710px" width="16" height="16" viewBox="0 0 16 16"><rect x="1" y="1.5" width="14" height="13" fill="url(#gImg)" stroke="#d8d8d8" stroke-width="1"/><path d="M1.5 10L5 8L8 9.5L11 7.5L14.5 9.5V10.5H1.5Z" fill="#1a1a1a"/></svg>
<div class="a t" style="left:72px;top:712px;font-size:11px;letter-spacing:-0.25px;color:#e6e6e6;line-height:14px">Render</div>
<div class="a" style="left:29.5px;top:732.2px;width:12.5px;height:13.5px;box-sizing:border-box;border:1.4px solid #2a2a2a;background:#3c3c3c;border-radius:3.5px"></div>
<div class="a" style="left:35px;top:735.6px;width:1.2px;height:7px;background:#eeeeee"></div>
<div class="a" style="left:32px;top:738.6px;width:7px;height:1.1px;background:#9a9a9a"></div>
<div class="a" style="left:42px;top:739.2px;width:8px;height:1px;background:#2e2e2e"></div>
<svg class="a" style="left:50px;top:731px" width="16" height="16" viewBox="0 0 16 16"><rect x="1" y="4" width="14" height="10" rx="2" fill="#3a3a3a" stroke="#9a9a9a"/><circle cx="9" cy="9" r="3.6" fill="#2a2a2a" stroke="#c9c9c9" stroke-width="1.2"/><circle cx="9" cy="9" r="1.6" fill="#a04040"/><rect x="3" y="2" width="4" height="2" fill="#8a8a8a"/></svg>
<div class="a t" style="left:72px;top:732px;font-size:11px;letter-spacing:-0.25px;color:#e6e6e6;line-height:14px">shot_camera</div>
<div class="a" style="left:29.5px;top:753.0px;width:12.5px;height:13.5px;box-sizing:border-box;border:1.4px solid #2a2a2a;background:#3c3c3c;border-radius:3.5px"></div>
<div class="a" style="left:35px;top:756.4px;width:1.2px;height:7px;background:#eeeeee"></div>
<div class="a" style="left:32px;top:759.4px;width:7px;height:1.1px;background:#9a9a9a"></div>
<div class="a" style="left:42px;top:760.0px;width:8px;height:1px;background:#2e2e2e"></div>
<svg class="a" style="left:50px;top:751px" width="16" height="17" viewBox="0 0 16 17"><path d="M1.5 5L5 1.5H14.5V15.5H1.5Z" fill="#f6eee8" stroke="#d8ccc4" stroke-width="0.8"/><circle cx="5.5" cy="8" r="2.4" fill="#8a3a30"/><circle cx="11" cy="5" r="1.8" fill="#b05a48"/><circle cx="10" cy="12" r="2.8" fill="#c05030"/><path d="M1.5 5L5 1.5V5Z" fill="#d8d8d8"/></svg>
<div class="a t" style="left:72px;top:753px;font-size:11px;letter-spacing:-0.25px;color:#e6e6e6;line-height:14px">Texture</div>
<div class="a" style="left:29.5px;top:773.8px;width:12.5px;height:13.5px;box-sizing:border-box;border:1.4px solid #2a2a2a;background:#3c3c3c;border-radius:3.5px"></div>
<div class="a" style="left:35px;top:777.2px;width:1.2px;height:7px;background:#eeeeee"></div>
<div class="a" style="left:32px;top:780.2px;width:7px;height:1.1px;background:#9a9a9a"></div>
<div class="a" style="left:42px;top:780.8px;width:8px;height:1px;background:#2e2e2e"></div>
<svg class="a" style="left:50px;top:772px" width="16" height="17" viewBox="0 0 16 17"><path d="M1.5 5L5 1.5H14.5V15.5H1.5Z" fill="#f6eee8" stroke="#d8ccc4" stroke-width="0.8"/><circle cx="5.5" cy="8" r="2.4" fill="#8a3a30"/><circle cx="11" cy="5" r="1.8" fill="#b05a48"/><circle cx="10" cy="12" r="2.8" fill="#c05030"/><path d="M1.5 5L5 1.5V5Z" fill="#d8d8d8"/></svg>
<div class="a t" style="left:72px;top:774px;font-size:11px;letter-spacing:-0.25px;color:#e6e6e6;line-height:14px">Texture</div>
<div class="a" style="left:29.5px;top:794.6px;width:12.5px;height:13.5px;box-sizing:border-box;border:1.4px solid #2a2a2a;background:#3c3c3c;border-radius:3.5px"></div>
<div class="a" style="left:35px;top:798.0px;width:1.2px;height:7px;background:#eeeeee"></div>
<div class="a" style="left:32px;top:801.0px;width:7px;height:1.1px;background:#9a9a9a"></div>
<div class="a" style="left:42px;top:801.6px;width:8px;height:1px;background:#2e2e2e"></div>
<svg class="a" style="left:50px;top:792px" width="16" height="17" viewBox="0 0 16 17"><path d="M1.5 5L5 1.5H14.5V15.5H1.5Z" fill="#f6eee8" stroke="#d8ccc4" stroke-width="0.8"/><circle cx="5.5" cy="8" r="2.4" fill="#8a3a30"/><circle cx="11" cy="5" r="1.8" fill="#b05a48"/><circle cx="10" cy="12" r="2.8" fill="#c05030"/><path d="M1.5 5L5 1.5V5Z" fill="#d8d8d8"/></svg>
<div class="a t" style="left:72px;top:795px;font-size:11px;letter-spacing:-0.25px;color:#e6e6e6;line-height:14px">Texture</div>
<div class="a" style="left:29.5px;top:815.4px;width:12.5px;height:13.5px;box-sizing:border-box;border:1.4px solid #2a2a2a;background:#3c3c3c;border-radius:3.5px"></div>
<div class="a" style="left:35px;top:818.8px;width:1.2px;height:7px;background:#eeeeee"></div>
<div class="a" style="left:32px;top:821.8px;width:7px;height:1.1px;background:#9a9a9a"></div>
<div class="a" style="left:42px;top:822.4px;width:8px;height:1px;background:#2e2e2e"></div>
<svg class="a" style="left:50px;top:813px" width="16" height="17" viewBox="0 0 16 17"><path d="M1.5 5L5 1.5H14.5V15.5H1.5Z" fill="#f6eee8" stroke="#d8ccc4" stroke-width="0.8"/><circle cx="5.5" cy="8" r="2.4" fill="#8a3a30"/><circle cx="11" cy="5" r="1.8" fill="#b05a48"/><circle cx="10" cy="12" r="2.8" fill="#c05030"/><path d="M1.5 5L5 1.5V5Z" fill="#d8d8d8"/></svg>
<div class="a t" style="left:72px;top:816px;font-size:11px;letter-spacing:-0.25px;color:#e6e6e6;line-height:14px">Texture</div>
<div class="a" style="left:29.5px;top:836.2px;width:12.5px;height:13.5px;box-sizing:border-box;border:1.4px solid #2a2a2a;background:#3c3c3c;border-radius:3.5px"></div>
<div class="a" style="left:35px;top:839.6px;width:1.2px;height:7px;background:#eeeeee"></div>
<div class="a" style="left:32px;top:842.6px;width:7px;height:1.1px;background:#9a9a9a"></div>
<div class="a" style="left:42px;top:843.2px;width:8px;height:1px;background:#2e2e2e"></div>
<svg class="a" style="left:50px;top:834px" width="16" height="17" viewBox="0 0 16 17"><path d="M1.5 5L5 1.5H14.5V15.5H1.5Z" fill="#f6eee8" stroke="#d8ccc4" stroke-width="0.8"/><circle cx="5.5" cy="8" r="2.4" fill="#8a3a30"/><circle cx="11" cy="5" r="1.8" fill="#b05a48"/><circle cx="10" cy="12" r="2.8" fill="#c05030"/><path d="M1.5 5L5 1.5V5Z" fill="#d8d8d8"/></svg>
<div class="a t" style="left:72px;top:836px;font-size:11px;letter-spacing:-0.25px;color:#e6e6e6;line-height:14px">Texture</div>
<div class="a" style="left:29.5px;top:857.0px;width:12.5px;height:13.5px;box-sizing:border-box;border:1.4px solid #2a2a2a;background:#3c3c3c;border-radius:3.5px"></div>
<div class="a" style="left:35px;top:860.4px;width:1.2px;height:7px;background:#eeeeee"></div>
<div class="a" style="left:32px;top:863.4px;width:7px;height:1.1px;background:#9a9a9a"></div>
<div class="a" style="left:42px;top:864.0px;width:8px;height:1px;background:#2e2e2e"></div>
<div class="a" style="left:49px;top:853.8px;width:61px;height:20px;background:#b8901a"></div>
<div class="a" style="left:49px;top:853.8px;width:17px;height:20px;background:#9c7a14;border:1px solid #d8b040;box-sizing:border-box"></div>
<svg class="a" style="left:50px;top:855px" width="16" height="17" viewBox="0 0 16 17"><path d="M1.5 5L5 1.5H14.5V15.5H1.5Z" fill="#f6eee8" stroke="#d8ccc4" stroke-width="0.8"/><circle cx="5.5" cy="8" r="2.4" fill="#8a3a30"/><circle cx="11" cy="5" r="1.8" fill="#b05a48"/><circle cx="10" cy="12" r="2.8" fill="#c05030"/><path d="M1.5 5L5 1.5V5Z" fill="#d8d8d8"/></svg>
<div class="a t" style="left:72px;top:857px;font-size:11px;letter-spacing:-0.25px;color:#f3e27a;line-height:14px">Texture</div>
<div class="a" style="left:29.5px;top:877.8px;width:12.5px;height:13.5px;box-sizing:border-box;border:1.4px solid #2a2a2a;background:#3c3c3c;border-radius:3.5px"></div>
<div class="a" style="left:35px;top:881.2px;width:1.2px;height:7px;background:#eeeeee"></div>
<div class="a" style="left:32px;top:884.2px;width:7px;height:1.1px;background:#9a9a9a"></div>
<div class="a" style="left:42px;top:884.8px;width:8px;height:1px;background:#2e2e2e"></div>
<svg class="a" style="left:50px;top:876px" width="16" height="17" viewBox="0 0 16 17"><path d="M1.5 5L5 1.5H14.5V15.5H1.5Z" fill="#f6eee8" stroke="#d8ccc4" stroke-width="0.8"/><circle cx="5.5" cy="8" r="2.4" fill="#8a3a30"/><circle cx="11" cy="5" r="1.8" fill="#b05a48"/><circle cx="10" cy="12" r="2.8" fill="#c05030"/><path d="M1.5 5L5 1.5V5Z" fill="#d8d8d8"/></svg>
<div class="a t" style="left:72px;top:878px;font-size:11px;letter-spacing:-0.25px;color:#e6e6e6;line-height:14px">Texture</div>
<div class="a" style="left:36px;top:905.4px;width:13px;height:1px;background:#383838"></div>
<svg class="a" style="left:50px;top:897px" width="16" height="16" viewBox="0 0 16 16"><path d="M3 13L13 3" stroke="#e8e8e8" stroke-width="1.8"/><path d="M10 2.5H13.5V6M6 13.5H2.5V10" fill="none" stroke="#e8e8e8" stroke-width="1.6"/><path d="M2 5Q4 2 7 3M14 11Q12 14 9 13" fill="none" stroke="#d0d0d0" stroke-width="1.3"/><path d="M1 3.5L2.5 5.5L4 3.5M12 14.5L13.5 12.5L15 14.5" fill="#d0d0d0"/></svg>
<div class="a t" style="left:72px;top:899px;font-size:11px;letter-spacing:-0.25px;color:#e6e6e6;line-height:14px">UV transform</div>
<div class="a" style="left:36px;top:926.2px;width:13px;height:1px;background:#383838"></div>
<svg class="a" style="left:50px;top:918px" width="16" height="16" viewBox="0 0 16 16"><path d="M3 13L13 3" stroke="#e8e8e8" stroke-width="1.8"/><path d="M10 2.5H13.5V6M6 13.5H2.5V10" fill="none" stroke="#e8e8e8" stroke-width="1.6"/><path d="M2 5Q4 2 7 3M14 11Q12 14 9 13" fill="none" stroke="#d0d0d0" stroke-width="1.3"/><path d="M1 3.5L2.5 5.5L4 3.5M12 14.5L13.5 12.5L15 14.5" fill="#d0d0d0"/></svg>
<div class="a t" style="left:72px;top:920px;font-size:11px;letter-spacing:-0.25px;color:#e6e6e6;line-height:14px">UV transform</div>
<div class="a" style="left:36px;top:947.0px;width:13px;height:1px;background:#383838"></div>
<svg class="a" style="left:50px;top:939px" width="16" height="16" viewBox="0 0 16 16"><path d="M3 13L13 3" stroke="#e8e8e8" stroke-width="1.8"/><path d="M10 2.5H13.5V6M6 13.5H2.5V10" fill="none" stroke="#e8e8e8" stroke-width="1.6"/><path d="M2 5Q4 2 7 3M14 11Q12 14 9 13" fill="none" stroke="#d0d0d0" stroke-width="1.3"/><path d="M1 3.5L2.5 5.5L4 3.5M12 14.5L13.5 12.5L15 14.5" fill="#d0d0d0"/></svg>
<div class="a t" style="left:72px;top:940px;font-size:11px;letter-spacing:-0.25px;color:#e6e6e6;line-height:14px">UV transform</div>
</div>
<div class="a" style="left:252px;top:116px;width:13px;height:945px;background:#484848"></div>
<div class="a" style="left:255px;top:140px;width:6px;height:900px;background:#555"></div>
<div class="a" style="left:251px;top:225px;width:12px;height:660px;background:#646464;border-radius:2px;box-shadow:0 0 0 1px #363636"></div>
<svg class="a" style="left:251px;top:121px" width="13" height="11" viewBox="0 0 13 11"><path d="M6.5 0.5L12.5 10.5H0.5Z" fill="#fff"/></svg>
<svg class="a" style="left:251px;top:1045px" width="13" height="11" viewBox="0 0 13 11"><path d="M0.5 0.5H12.5L6.5 10.5Z" fill="#fff"/></svg>
<div class="a" style="left:272px;top:48px;width:1120px;height:19px;background:linear-gradient(#494949,#454545 40%,#454545)"></div>
<div class="a" style="left:275px;top:51px;width:12px;height:13px;background:#303030;border-radius:3px"></div>
<div class="a t" style="left:290.50px;top:53.00px;font-size:11.3px;line-height:11.3px;color:#efefef;">Render viewport</div>
<svg class="a" style="left:0;top:0" width="1920" height="1080" viewBox="0 0 1920 1080">
<defs>
<radialGradient id="skyG" gradientUnits="userSpaceOnUse" cx="820" cy="369" r="1134" gradientTransform="translate(820 369) scale(1 0.4727) translate(-820 -369)">
<stop offset="0" stop-color="#b6c5d6"/><stop offset="1" stop-color="#8798a8"/></radialGradient>
<linearGradient id="shadowG" gradientUnits="userSpaceOnUse" x1="820" y1="600" x2="1150" y2="470"><stop offset="0" stop-color="#33537a"/><stop offset="0.55" stop-color="#305884"/><stop offset="1" stop-color="#2d5b8b"/></linearGradient>
<linearGradient id="bandG" x1="0" y1="0" x2="0.15" y2="1"><stop offset="0" stop-color="#56687c"/><stop offset="0.5" stop-color="#435a74"/><stop offset="1" stop-color="#34485f"/></linearGradient>
<linearGradient id="faceShade" x1="0" y1="0" x2="0.1" y2="1"><stop offset="0" stop-color="#ffffff" stop-opacity="0.0"/><stop offset="0.5" stop-color="#10284a" stop-opacity="0.04"/><stop offset="1" stop-color="#10284a" stop-opacity="0.12"/></linearGradient>
<filter id="blur1" x="-5%" y="-5%" width="110%" height="110%"><feGaussianBlur stdDeviation="1.5"/></filter>
<clipPath id="vpClip"><rect x="272" y="67" width="1102" height="615"/></clipPath>
</defs>
<g clip-path="url(#vpClip)">
<rect x="272" y="67" width="1102" height="615" fill="url(#skyG)"/>
<polygon points="1022,530 1028,462 1100,459 1290,463 1345,476 1374,497 1374,548 1311,565 1224,584 1211,593 1199,597 1030,596 815,593 802,589" fill="url(#shadowG)" filter="url(#blur1)"/>
<clipPath id="clipL"><polygon points="734,186 800,236 803,593 780,582 748,566 744,520 740,300 734,240"/></clipPath><g clip-path="url(#clipL)">
<polygon points="730.4,175.6 800.0,238.0 802.0,588.0 739.6,556.8" fill="#7c8b9b" />
<polygon points="754.0,189.5 768.1,202.2 768.2,209.5 754.1,196.9" fill="#b3c1cd" />
<polygon points="774.4,207.9 781.4,214.2 781.4,222.1 774.5,215.8" fill="#b8c6d2" />
<polygon points="747.7,183.7 754.6,190.0 754.7,196.7 747.8,190.5" fill="#52606f" />
<polygon points="755.4,200.2 766.5,210.1 766.6,217.4 755.5,207.6" fill="#b3c1cd" />
<polygon points="774.5,217.3 781.5,223.5 781.5,231.4 774.6,225.2" fill="#b8c6d2" />
<polygon points="730.5,177.9 749.4,194.9 749.6,206.0 730.7,189.3" fill="#9fadbb" />
<polygon points="747.8,193.4 754.8,199.7 754.9,206.3 748.0,200.2" fill="#52606f" />
<polygon points="754.2,208.6 767.2,220.1 767.3,227.4 754.4,216.1" fill="#b3c1cd" />
<polygon points="774.6,226.7 781.6,232.8 781.7,240.7 774.7,234.6" fill="#b8c6d2" />
<polygon points="757.4,220.9 766.8,229.1 766.9,236.4 757.5,228.2" fill="#b3c1cd" />
<polygon points="730.9,197.7 750.0,214.4 750.3,225.6 731.2,209.1" fill="#9fadbb" />
<polygon points="748.2,212.9 755.1,218.9 755.3,225.6 748.4,219.6" fill="#52606f" />
<polygon points="757.0,230.0 767.3,239.0 767.4,246.3 757.1,237.4" fill="#b3c1cd" />
<polygon points="774.9,245.5 781.8,251.5 781.9,259.3 775.0,253.4" fill="#b8c6d2" />
<polygon points="748.4,222.6 755.3,228.5 755.4,235.2 748.6,229.3" fill="#52606f" />
<polygon points="754.6,237.4 767.1,248.1 767.2,255.4 754.7,244.8" fill="#b3c1cd" />
<polygon points="775.0,254.9 781.9,260.8 782.0,268.7 775.1,262.8" fill="#b8c6d2" />
<polygon points="748.6,232.3 755.5,238.2 755.6,244.8 748.7,239.0" fill="#52606f" />
<polygon points="756.5,248.5 768.4,258.6 768.5,265.9 756.7,255.9" fill="#b3c1cd" />
<polygon points="775.1,264.3 782.0,270.1 782.1,278.0 775.2,272.2" fill="#b8c6d2" />
<polygon points="756.7,258.1 768.7,268.2 768.9,275.5 756.8,265.5" fill="#b3c1cd" />
<polygon points="749.0,251.7 755.8,257.4 756.0,264.1 749.1,258.4" fill="#52606f" />
<polygon points="775.4,283.1 782.2,288.7 782.3,296.6 775.5,291.0" fill="#b8c6d2" />
<polygon points="732.1,247.3 753.8,265.2 754.0,276.3 732.4,258.7" fill="#9fadbb" />
<polygon points="749.2,261.4 756.0,267.1 756.1,273.7 749.3,268.1" fill="#52606f" />
<polygon points="755.2,275.9 769.4,287.5 769.5,294.8 755.3,283.3" fill="#b3c1cd" />
<polygon points="757.6,287.3 769.4,296.8 769.5,304.1 757.7,294.7" fill="#b3c1cd" />
<polygon points="775.6,301.9 782.4,307.4 782.5,315.2 775.7,309.8" fill="#b8c6d2" />
<polygon points="775.7,311.3 782.5,316.7 782.6,324.6 775.8,319.2" fill="#b8c6d2" />
<polygon points="749.8,290.5 756.5,295.9 756.7,302.6 749.9,297.2" fill="#52606f" />
<polygon points="757.8,306.4 770.8,316.6 770.9,323.9 757.9,313.8" fill="#b3c1cd" />
<polygon points="733.1,286.9 752.8,302.5 753.0,313.7 733.4,298.3" fill="#9fadbb" />
<polygon points="757.3,315.5 768.6,324.3 768.7,331.6 757.4,322.9" fill="#b3c1cd" />
<polygon points="776.0,330.1 782.7,335.3 782.8,343.2 776.1,338.0" fill="#b8c6d2" />
<polygon points="733.3,296.8 754.7,313.5 754.9,324.6 733.6,308.3" fill="#9fadbb" />
<polygon points="750.2,309.9 756.9,315.2 757.0,321.9 750.3,316.7" fill="#52606f" />
<polygon points="757.3,325.0 770.7,335.3 770.8,342.6 757.4,332.4" fill="#b3c1cd" />
<polygon points="776.1,339.5 782.8,344.6 782.9,352.5 776.2,347.4" fill="#b8c6d2" />
<polygon points="733.6,306.7 753.9,322.4 754.1,333.6 733.8,318.2" fill="#9fadbb" />
<polygon points="759.0,335.8 769.2,343.5 769.3,350.8 759.1,343.2" fill="#b3c1cd" />
<polygon points="776.2,348.9 782.9,353.9 783.0,361.8 776.3,356.8" fill="#b8c6d2" />
<polygon points="733.8,316.6 755.6,333.2 755.8,344.3 734.1,328.1" fill="#9fadbb" />
<polygon points="756.9,343.7 769.2,352.9 769.3,360.2 757.0,351.1" fill="#b3c1cd" />
<polygon points="776.3,358.3 783.0,363.3 783.1,371.1 776.4,366.2" fill="#b8c6d2" />
<polygon points="756.5,352.9 769.8,362.8 769.9,370.1 756.6,360.3" fill="#b3c1cd" />
<polygon points="776.4,367.6 783.1,372.6 783.2,380.5 776.5,375.6" fill="#b8c6d2" />
<polygon points="758.4,363.8 770.5,372.6 770.6,379.9 758.5,371.2" fill="#b3c1cd" />
<polygon points="776.6,377.0 783.2,381.9 783.3,389.8 776.7,385.0" fill="#b8c6d2" />
<polygon points="734.5,346.4 756.2,362.2 756.4,373.3 734.8,357.8" fill="#9fadbb" />
<polygon points="734.8,356.3 754.2,370.3 754.4,381.4 735.0,367.7" fill="#9fadbb" />
<polygon points="751.3,368.2 757.9,373.0 758.0,379.6 751.4,374.9" fill="#52606f" />
<polygon points="757.2,381.9 769.3,390.5 769.4,397.8 757.3,389.4" fill="#b3c1cd" />
<polygon points="776.8,395.8 783.4,400.5 783.5,408.4 776.9,403.8" fill="#b8c6d2" />
<polygon points="735.0,366.2 754.1,379.7 754.3,390.9 735.3,377.6" fill="#9fadbb" />
<polygon points="751.5,377.9 758.1,382.6 758.2,389.2 751.6,384.6" fill="#52606f" />
<polygon points="757.7,391.8 769.5,400.1 769.6,407.4 757.8,399.2" fill="#b3c1cd" />
<polygon points="776.9,405.2 783.5,409.8 783.6,417.7 777.0,413.2" fill="#b8c6d2" />
<polygon points="735.2,376.1 756.6,391.1 756.8,402.2 735.5,387.5" fill="#9fadbb" />
<polygon points="758.2,401.7 770.3,410.0 770.4,417.3 758.3,409.1" fill="#b3c1cd" />
<polygon points="777.0,414.6 783.6,419.2 783.7,427.0 777.1,422.6" fill="#b8c6d2" />
<polygon points="735.5,386.0 756.7,400.6 756.9,411.8 735.8,397.5" fill="#9fadbb" />
<polygon points="759.1,411.8 769.8,419.0 769.9,426.3 759.2,419.2" fill="#b3c1cd" />
<polygon points="777.2,424.0 783.7,428.5 783.8,436.4 777.3,432.0" fill="#b8c6d2" />
<polygon points="735.7,395.9 754.3,408.5 754.5,419.7 736.0,407.4" fill="#9fadbb" />
<polygon points="757.8,420.4 772.3,430.1 772.4,437.4 757.9,427.8" fill="#b3c1cd" />
<polygon points="777.3,433.4 783.8,437.8 783.9,445.7 777.4,441.4" fill="#b8c6d2" />
<polygon points="736.0,405.8 755.7,419.0 755.9,430.2 736.2,417.3" fill="#9fadbb" />
<polygon points="752.3,416.7 758.8,421.1 758.9,427.8 752.4,423.5" fill="#52606f" />
<polygon points="761.1,432.1 772.2,439.4 772.3,446.7 761.2,439.5" fill="#b3c1cd" />
<polygon points="777.4,442.8 783.9,447.1 784.0,455.0 777.5,450.8" fill="#b8c6d2" />
<polygon points="736.2,415.8 755.1,428.2 755.4,439.4 736.5,427.2" fill="#9fadbb" />
<polygon points="752.5,426.4 759.0,430.7 759.1,437.4 752.6,433.2" fill="#52606f" />
<polygon points="759.8,440.8 772.1,448.7 772.2,456.0 759.9,448.2" fill="#b3c1cd" />
<polygon points="777.5,452.2 784.0,456.4 784.1,464.3 777.6,460.2" fill="#b8c6d2" />
<polygon points="736.4,425.7 757.2,439.1 757.5,450.3 736.7,437.1" fill="#9fadbb" />
<polygon points="760.1,460.0 771.2,466.9 771.3,474.2 760.2,467.4" fill="#b3c1cd" />
<polygon points="777.8,471.0 784.2,475.1 784.3,482.9 777.9,479.0" fill="#b8c6d2" />
<polygon points="736.9,445.5 755.3,457.0 755.5,468.2 737.2,456.9" fill="#9fadbb" />
<polygon points="753.0,455.6 759.5,459.6 759.6,466.3 753.2,462.3" fill="#52606f" />
<polygon points="761.7,470.5 771.6,476.5 771.7,483.8 761.8,477.8" fill="#b3c1cd" />
<polygon points="759.5,478.6 771.1,485.7 771.2,493.0 759.6,486.0" fill="#b3c1cd" />
<polygon points="778.0,489.8 784.4,493.7 784.5,501.6 778.1,497.8" fill="#b8c6d2" />
<polygon points="737.4,465.3 757.2,477.2 757.4,488.4 737.7,476.7" fill="#9fadbb" />
<polygon points="760.5,488.8 772.4,495.8 772.5,503.1 760.6,496.2" fill="#b3c1cd" />
<polygon points="737.6,475.2 757.5,487.0 757.7,498.1 737.9,486.7" fill="#9fadbb" />
<polygon points="761.5,498.9 772.1,505.0 772.2,512.3 761.6,506.3" fill="#b3c1cd" />
<polygon points="778.2,508.6 784.6,512.3 784.7,520.2 778.3,516.6" fill="#b8c6d2" />
<polygon points="753.8,494.4 760.2,498.1 760.3,504.8 753.9,501.1" fill="#52606f" />
<polygon points="762.4,508.9 772.0,514.4 772.1,521.7 762.5,516.3" fill="#b3c1cd" />
<polygon points="778.4,518.0 784.7,521.6 784.8,529.5 778.5,526.0" fill="#b8c6d2" />
<polygon points="759.9,517.0 771.5,523.5 771.6,530.8 760.0,524.4" fill="#b3c1cd" />
<polygon points="754.2,513.8 760.5,517.4 760.7,524.0 754.3,520.5" fill="#52606f" />
<polygon points="762.7,528.1 773.0,533.7 773.1,541.0 762.9,535.5" fill="#b3c1cd" />
<polygon points="778.6,536.8 784.9,540.3 785.0,548.1 778.7,544.8" fill="#b8c6d2" />
<polygon points="754.4,523.5 760.7,527.0 760.8,533.7 754.5,530.2" fill="#52606f" />
<polygon points="762.9,537.7 773.1,543.2 773.2,550.5 763.0,545.1" fill="#b3c1cd" />
<polygon points="778.7,546.2 785.0,549.6 785.1,557.5 778.8,554.2" fill="#b8c6d2" />
<polygon points="754.6,533.2 760.9,536.6 761.0,543.3 754.7,540.0" fill="#52606f" />
<polygon points="739.1,534.7 756.9,544.0 757.1,555.2 739.3,546.1" fill="#9fadbb" />
<polygon points="754.8,542.9 761.1,546.2 761.2,552.9 754.9,549.7" fill="#52606f" />
<polygon points="762.0,556.3 772.3,561.6 772.4,568.9 762.2,563.7" fill="#b3c1cd" />
<polygon points="779.0,565.0 785.2,568.2 785.3,576.1 779.1,572.9" fill="#b8c6d2" />
<polygon points="739.3,544.6 759.8,555.1 760.0,566.3 739.6,556.0" fill="#9fadbb" />
<polygon points="755.0,552.7 761.2,555.9 761.3,562.5 755.1,559.4" fill="#52606f" />
<polygon points="762.2,565.9 774.2,571.9 774.3,579.2 762.3,573.3" fill="#b3c1cd" />
<polygon points="779.1,574.4 785.3,577.5 785.4,585.4 779.2,582.3" fill="#b8c6d2" />
<polygon points="782.6,224.2 800.0,239.8 800.1,260.8 782.8,245.7" fill="#2f3e4e" />
<polygon points="786.1,229.8 797.7,240.1 797.8,256.3 786.3,246.2" fill="#3e4d5d" />
<polygon points="781.7,244.7 800.1,260.8 800.2,267.8 781.8,251.8" fill="#a9b7c4" />
<polygon points="782.9,254.6 800.2,269.5 800.3,290.5 783.2,276.1" fill="#2f3e4e" />
<polygon points="786.4,260.1 797.9,270.0 798.0,286.1 786.6,276.5" fill="#3e4d5d" />
<polygon points="782.0,275.1 800.3,290.5 800.3,297.5 782.1,282.3" fill="#a9b7c4" />
<polygon points="783.3,285.0 800.4,299.2 800.5,320.2 783.5,306.5" fill="#2f3e4e" />
<polygon points="786.7,290.4 798.1,299.8 798.2,316.0 786.9,306.7" fill="#3e4d5d" />
<polygon points="782.4,305.6 800.5,320.2 800.5,327.2 782.4,312.7" fill="#a9b7c4" />
<polygon points="783.6,315.4 800.5,329.0 800.6,350.0 783.8,336.9" fill="#2f3e4e" />
<polygon points="787.0,320.6 798.3,329.6 798.4,345.8 787.2,337.0" fill="#3e4d5d" />
<polygon points="782.7,336.0 800.6,350.0 800.7,357.0 782.8,343.2" fill="#a9b7c4" />
<polygon points="783.9,345.8 800.7,358.8 800.8,379.8 784.1,367.3" fill="#2f3e4e" />
<polygon points="787.3,350.9 798.5,359.5 798.6,375.6 787.4,367.3" fill="#3e4d5d" />
<polygon points="783.0,366.5 800.8,379.8 800.9,386.8 783.1,373.6" fill="#a9b7c4" />
<polygon points="784.2,376.3 800.9,388.5 801.0,409.5 784.5,397.7" fill="#2f3e4e" />
<polygon points="787.6,381.2 798.7,389.3 798.8,405.5 787.7,397.6" fill="#3e4d5d" />
<polygon points="783.4,396.9 801.0,409.5 801.0,416.5 783.4,404.1" fill="#a9b7c4" />
<polygon points="784.6,406.7 801.0,418.2 801.1,439.2 784.8,428.1" fill="#2f3e4e" />
<polygon points="787.9,411.5 798.8,419.2 799.0,435.3 788.0,427.9" fill="#3e4d5d" />
<polygon points="783.7,427.4 801.1,439.2 801.2,446.2 783.8,434.6" fill="#a9b7c4" />
<polygon points="784.9,437.1 801.2,448.0 801.3,469.0 785.1,458.5" fill="#2f3e4e" />
<polygon points="788.2,441.8 799.0,449.0 799.1,465.1 788.3,458.1" fill="#3e4d5d" />
<polygon points="784.0,457.9 801.3,469.0 801.4,476.0 784.1,465.0" fill="#a9b7c4" />
<polygon points="785.2,467.5 801.4,477.8 801.5,498.8 785.4,489.0" fill="#2f3e4e" />
<polygon points="788.5,472.0 799.2,478.8 799.3,495.0 788.6,488.4" fill="#3e4d5d" />
<polygon points="784.4,488.3 801.5,498.8 801.5,505.8 784.4,495.5" fill="#a9b7c4" />
<polygon points="785.5,497.9 801.5,507.5 801.7,528.5 785.8,519.4" fill="#2f3e4e" />
<polygon points="788.8,502.3 799.4,508.7 799.5,524.8 788.9,518.7" fill="#3e4d5d" />
<polygon points="784.7,518.8 801.7,528.5 801.7,535.5 784.8,525.9" fill="#a9b7c4" />
<polygon points="785.8,528.3 801.7,537.2 801.8,558.2 786.1,549.8" fill="#2f3e4e" />
<polygon points="789.0,532.6 799.6,538.5 799.7,554.7 789.2,549.0" fill="#3e4d5d" />
<polygon points="785.0,549.2 801.8,558.2 801.9,565.2 785.1,556.4" fill="#a9b7c4" />
<polygon points="786.2,558.7 801.9,567.0 802.0,588.0 786.4,580.2" fill="#2f3e4e" />
<polygon points="789.3,562.9 799.8,568.4 799.9,584.5 789.5,579.3" fill="#3e4d5d" />
<polygon points="785.4,579.7 802.0,588.0 802.0,595.0 785.4,586.8" fill="#a9b7c4" />
</g>
<polygon points="800.0,238.0 1052.0,205.0 1022.0,530.0 802.0,588.0" fill="#6882a0" />
<clipPath id="clipF"><polygon points="800,238 1052,205 1022,530 802,588"/></clipPath><g clip-path="url(#clipF)">
<polygon points="829.0,234.2 864.3,229.6 858.1,573.2 827.3,581.3" fill="#3c4c5f" />
<line x1="829.0" y1="234.2" x2="827.3" y2="581.3" stroke="#26323f" stroke-width="1.2"/>
<line x1="834.9" y1="233.4" x2="832.4" y2="580.0" stroke="#536377" stroke-width="0.9"/>
<line x1="840.7" y1="232.7" x2="837.6" y2="578.6" stroke="#536377" stroke-width="0.9"/>
<line x1="846.6" y1="231.9" x2="842.7" y2="577.3" stroke="#26323f" stroke-width="1.2"/>
<line x1="852.5" y1="231.1" x2="847.8" y2="575.9" stroke="#536377" stroke-width="0.9"/>
<line x1="858.4" y1="230.4" x2="853.0" y2="574.6" stroke="#536377" stroke-width="0.9"/>
<line x1="864.3" y1="229.6" x2="858.1" y2="573.2" stroke="#26323f" stroke-width="1.2"/>
<line x1="829.0" y1="234.2" x2="864.3" y2="229.6" stroke="#2c3947" stroke-width="0.9"/>
<line x1="829.0" y1="240.0" x2="864.2" y2="235.3" stroke="#2c3947" stroke-width="0.9"/>
<line x1="828.9" y1="245.8" x2="864.1" y2="241.0" stroke="#2c3947" stroke-width="0.9"/>
<line x1="828.9" y1="251.6" x2="864.0" y2="246.8" stroke="#2c3947" stroke-width="0.9"/>
<line x1="828.9" y1="257.3" x2="863.8" y2="252.5" stroke="#2c3947" stroke-width="0.9"/>
<line x1="828.8" y1="263.1" x2="863.7" y2="258.2" stroke="#2c3947" stroke-width="0.9"/>
<line x1="828.8" y1="268.9" x2="863.6" y2="263.9" stroke="#2c3947" stroke-width="0.9"/>
<line x1="828.8" y1="274.7" x2="863.5" y2="269.7" stroke="#2c3947" stroke-width="0.9"/>
<line x1="828.8" y1="280.5" x2="863.4" y2="275.4" stroke="#2c3947" stroke-width="0.9"/>
<line x1="828.7" y1="286.3" x2="863.3" y2="281.1" stroke="#2c3947" stroke-width="0.9"/>
<line x1="828.7" y1="292.1" x2="863.2" y2="286.9" stroke="#2c3947" stroke-width="0.9"/>
<line x1="828.7" y1="297.8" x2="863.1" y2="292.6" stroke="#2c3947" stroke-width="0.9"/>
<line x1="828.6" y1="303.6" x2="863.0" y2="298.3" stroke="#2c3947" stroke-width="0.9"/>
<line x1="828.6" y1="309.4" x2="862.9" y2="304.0" stroke="#2c3947" stroke-width="0.9"/>
<line x1="828.6" y1="315.2" x2="862.8" y2="309.8" stroke="#2c3947" stroke-width="0.9"/>
<line x1="828.6" y1="321.0" x2="862.7" y2="315.5" stroke="#2c3947" stroke-width="0.9"/>
<line x1="828.5" y1="326.8" x2="862.6" y2="321.2" stroke="#2c3947" stroke-width="0.9"/>
<line x1="828.5" y1="332.6" x2="862.5" y2="326.9" stroke="#2c3947" stroke-width="0.9"/>
<line x1="828.5" y1="338.3" x2="862.4" y2="332.7" stroke="#2c3947" stroke-width="0.9"/>
<line x1="828.4" y1="344.1" x2="862.3" y2="338.4" stroke="#2c3947" stroke-width="0.9"/>
<line x1="828.4" y1="349.9" x2="862.2" y2="344.1" stroke="#2c3947" stroke-width="0.9"/>
<line x1="828.4" y1="355.7" x2="862.1" y2="349.9" stroke="#2c3947" stroke-width="0.9"/>
<line x1="828.4" y1="361.5" x2="862.0" y2="355.6" stroke="#2c3947" stroke-width="0.9"/>
<line x1="828.3" y1="367.3" x2="861.9" y2="361.3" stroke="#2c3947" stroke-width="0.9"/>
<line x1="828.3" y1="373.1" x2="861.8" y2="367.0" stroke="#2c3947" stroke-width="0.9"/>
<line x1="828.3" y1="378.8" x2="861.7" y2="372.8" stroke="#2c3947" stroke-width="0.9"/>
<line x1="828.3" y1="384.6" x2="861.6" y2="378.5" stroke="#2c3947" stroke-width="0.9"/>
<line x1="828.2" y1="390.4" x2="861.5" y2="384.2" stroke="#2c3947" stroke-width="0.9"/>
<line x1="828.2" y1="396.2" x2="861.4" y2="389.9" stroke="#2c3947" stroke-width="0.9"/>
<line x1="828.2" y1="402.0" x2="861.3" y2="395.7" stroke="#2c3947" stroke-width="0.9"/>
<line x1="828.1" y1="407.8" x2="861.2" y2="401.4" stroke="#2c3947" stroke-width="0.9"/>
<line x1="828.1" y1="413.6" x2="861.1" y2="407.1" stroke="#2c3947" stroke-width="0.9"/>
<line x1="828.1" y1="419.3" x2="861.0" y2="412.9" stroke="#2c3947" stroke-width="0.9"/>
<line x1="828.1" y1="425.1" x2="860.9" y2="418.6" stroke="#2c3947" stroke-width="0.9"/>
<line x1="828.0" y1="430.9" x2="860.8" y2="424.3" stroke="#2c3947" stroke-width="0.9"/>
<line x1="828.0" y1="436.7" x2="860.7" y2="430.0" stroke="#2c3947" stroke-width="0.9"/>
<line x1="828.0" y1="442.5" x2="860.6" y2="435.8" stroke="#2c3947" stroke-width="0.9"/>
<line x1="827.9" y1="448.3" x2="860.5" y2="441.5" stroke="#2c3947" stroke-width="0.9"/>
<line x1="827.9" y1="454.1" x2="860.4" y2="447.2" stroke="#2c3947" stroke-width="0.9"/>
<line x1="827.9" y1="459.8" x2="860.3" y2="452.9" stroke="#2c3947" stroke-width="0.9"/>
<line x1="827.9" y1="465.6" x2="860.2" y2="458.7" stroke="#2c3947" stroke-width="0.9"/>
<line x1="827.8" y1="471.4" x2="860.1" y2="464.4" stroke="#2c3947" stroke-width="0.9"/>
<line x1="827.8" y1="477.2" x2="859.9" y2="470.1" stroke="#2c3947" stroke-width="0.9"/>
<line x1="827.8" y1="483.0" x2="859.8" y2="475.8" stroke="#2c3947" stroke-width="0.9"/>
<line x1="827.7" y1="488.8" x2="859.7" y2="481.6" stroke="#2c3947" stroke-width="0.9"/>
<line x1="827.7" y1="494.5" x2="859.6" y2="487.3" stroke="#2c3947" stroke-width="0.9"/>
<line x1="827.7" y1="500.3" x2="859.5" y2="493.0" stroke="#2c3947" stroke-width="0.9"/>
<line x1="827.7" y1="506.1" x2="859.4" y2="498.8" stroke="#2c3947" stroke-width="0.9"/>
<line x1="827.6" y1="511.9" x2="859.3" y2="504.5" stroke="#2c3947" stroke-width="0.9"/>
<line x1="827.6" y1="517.7" x2="859.2" y2="510.2" stroke="#2c3947" stroke-width="0.9"/>
<line x1="827.6" y1="523.5" x2="859.1" y2="515.9" stroke="#2c3947" stroke-width="0.9"/>
<line x1="827.6" y1="529.3" x2="859.0" y2="521.7" stroke="#2c3947" stroke-width="0.9"/>
<line x1="827.5" y1="535.0" x2="858.9" y2="527.4" stroke="#2c3947" stroke-width="0.9"/>
<line x1="827.5" y1="540.8" x2="858.8" y2="533.1" stroke="#2c3947" stroke-width="0.9"/>
<line x1="827.5" y1="546.6" x2="858.7" y2="538.8" stroke="#2c3947" stroke-width="0.9"/>
<line x1="827.4" y1="552.4" x2="858.6" y2="544.6" stroke="#2c3947" stroke-width="0.9"/>
<line x1="827.4" y1="558.2" x2="858.5" y2="550.3" stroke="#2c3947" stroke-width="0.9"/>
<line x1="827.4" y1="564.0" x2="858.4" y2="556.0" stroke="#2c3947" stroke-width="0.9"/>
<line x1="827.4" y1="569.8" x2="858.3" y2="561.8" stroke="#2c3947" stroke-width="0.9"/>
<line x1="827.3" y1="575.5" x2="858.2" y2="567.5" stroke="#2c3947" stroke-width="0.9"/>
<polygon points="828.9,255.0 863.9,250.2 863.8,253.0 828.9,257.8" fill="#222d39" />
<polygon points="828.7,291.5 863.2,286.3 863.2,289.0 828.7,294.3" fill="#222d39" />
<polygon points="828.5,327.9 862.6,322.4 862.5,325.1 828.5,330.7" fill="#222d39" />
<polygon points="828.4,364.4 862.0,358.4 861.9,361.2 828.3,367.2" fill="#222d39" />
<polygon points="828.2,400.8 861.3,394.5 861.3,397.3 828.2,403.6" fill="#222d39" />
<polygon points="828.0,437.3 860.7,430.6 860.6,433.4 828.0,440.1" fill="#222d39" />
<polygon points="827.8,473.7 860.0,466.7 860.0,469.4 827.8,476.5" fill="#222d39" />
<polygon points="827.6,510.2 859.4,502.8 859.3,505.5 827.6,512.9" fill="#222d39" />
<polygon points="827.5,546.6 858.7,538.8 858.7,541.6 827.5,549.4" fill="#222d39" />
<polygon points="965.1,216.4 996.6,212.3 973.6,542.8 946.1,550.0" fill="#3c4c5f" />
<line x1="965.1" y1="216.4" x2="946.1" y2="550.0" stroke="#26323f" stroke-width="1.2"/>
<line x1="970.3" y1="215.7" x2="950.7" y2="548.8" stroke="#536377" stroke-width="0.9"/>
<line x1="975.6" y1="215.0" x2="955.3" y2="547.6" stroke="#536377" stroke-width="0.9"/>
<line x1="980.8" y1="214.3" x2="959.9" y2="546.4" stroke="#26323f" stroke-width="1.2"/>
<line x1="986.1" y1="213.6" x2="964.4" y2="545.2" stroke="#536377" stroke-width="0.9"/>
<line x1="991.3" y1="212.9" x2="969.0" y2="544.0" stroke="#536377" stroke-width="0.9"/>
<line x1="996.6" y1="212.3" x2="973.6" y2="542.8" stroke="#26323f" stroke-width="1.2"/>
<line x1="965.1" y1="216.4" x2="996.6" y2="212.3" stroke="#2c3947" stroke-width="0.9"/>
<line x1="964.7" y1="221.9" x2="996.2" y2="217.8" stroke="#2c3947" stroke-width="0.9"/>
<line x1="964.4" y1="227.5" x2="995.8" y2="223.3" stroke="#2c3947" stroke-width="0.9"/>
<line x1="964.1" y1="233.1" x2="995.4" y2="228.8" stroke="#2c3947" stroke-width="0.9"/>
<line x1="963.8" y1="238.6" x2="995.0" y2="234.3" stroke="#2c3947" stroke-width="0.9"/>
<line x1="963.5" y1="244.2" x2="994.6" y2="239.8" stroke="#2c3947" stroke-width="0.9"/>
<line x1="963.2" y1="249.7" x2="994.3" y2="245.3" stroke="#2c3947" stroke-width="0.9"/>
<line x1="962.8" y1="255.3" x2="993.9" y2="250.8" stroke="#2c3947" stroke-width="0.9"/>
<line x1="962.5" y1="260.9" x2="993.5" y2="256.3" stroke="#2c3947" stroke-width="0.9"/>
<line x1="962.2" y1="266.4" x2="993.1" y2="261.8" stroke="#2c3947" stroke-width="0.9"/>
<line x1="961.9" y1="272.0" x2="992.7" y2="267.3" stroke="#2c3947" stroke-width="0.9"/>
<line x1="961.6" y1="277.5" x2="992.4" y2="272.9" stroke="#2c3947" stroke-width="0.9"/>
<line x1="961.3" y1="283.1" x2="992.0" y2="278.4" stroke="#2c3947" stroke-width="0.9"/>
<line x1="961.0" y1="288.7" x2="991.6" y2="283.9" stroke="#2c3947" stroke-width="0.9"/>
<line x1="960.6" y1="294.2" x2="991.2" y2="289.4" stroke="#2c3947" stroke-width="0.9"/>
<line x1="960.3" y1="299.8" x2="990.8" y2="294.9" stroke="#2c3947" stroke-width="0.9"/>
<line x1="960.0" y1="305.4" x2="990.4" y2="300.4" stroke="#2c3947" stroke-width="0.9"/>
<line x1="959.7" y1="310.9" x2="990.1" y2="305.9" stroke="#2c3947" stroke-width="0.9"/>
<line x1="959.4" y1="316.5" x2="989.7" y2="311.4" stroke="#2c3947" stroke-width="0.9"/>
<line x1="959.1" y1="322.0" x2="989.3" y2="316.9" stroke="#2c3947" stroke-width="0.9"/>
<line x1="958.7" y1="327.6" x2="988.9" y2="322.4" stroke="#2c3947" stroke-width="0.9"/>
<line x1="958.4" y1="333.2" x2="988.5" y2="327.9" stroke="#2c3947" stroke-width="0.9"/>
<line x1="958.1" y1="338.7" x2="988.1" y2="333.4" stroke="#2c3947" stroke-width="0.9"/>
<line x1="957.8" y1="344.3" x2="987.8" y2="339.0" stroke="#2c3947" stroke-width="0.9"/>
<line x1="957.5" y1="349.8" x2="987.4" y2="344.5" stroke="#2c3947" stroke-width="0.9"/>
<line x1="957.2" y1="355.4" x2="987.0" y2="350.0" stroke="#2c3947" stroke-width="0.9"/>
<line x1="956.8" y1="361.0" x2="986.6" y2="355.5" stroke="#2c3947" stroke-width="0.9"/>
<line x1="956.5" y1="366.5" x2="986.2" y2="361.0" stroke="#2c3947" stroke-width="0.9"/>
<line x1="956.2" y1="372.1" x2="985.8" y2="366.5" stroke="#2c3947" stroke-width="0.9"/>
<line x1="955.9" y1="377.6" x2="985.5" y2="372.0" stroke="#2c3947" stroke-width="0.9"/>
<line x1="955.6" y1="383.2" x2="985.1" y2="377.5" stroke="#2c3947" stroke-width="0.9"/>
<line x1="955.3" y1="388.8" x2="984.7" y2="383.0" stroke="#2c3947" stroke-width="0.9"/>
<line x1="954.9" y1="394.3" x2="984.3" y2="388.5" stroke="#2c3947" stroke-width="0.9"/>
<line x1="954.6" y1="399.9" x2="983.9" y2="394.0" stroke="#2c3947" stroke-width="0.9"/>
<line x1="954.3" y1="405.4" x2="983.5" y2="399.5" stroke="#2c3947" stroke-width="0.9"/>
<line x1="954.0" y1="411.0" x2="983.2" y2="405.1" stroke="#2c3947" stroke-width="0.9"/>
<line x1="953.7" y1="416.6" x2="982.8" y2="410.6" stroke="#2c3947" stroke-width="0.9"/>
<line x1="953.4" y1="422.1" x2="982.4" y2="416.1" stroke="#2c3947" stroke-width="0.9"/>
<line x1="953.1" y1="427.7" x2="982.0" y2="421.6" stroke="#2c3947" stroke-width="0.9"/>
<line x1="952.7" y1="433.2" x2="981.6" y2="427.1" stroke="#2c3947" stroke-width="0.9"/>
<line x1="952.4" y1="438.8" x2="981.3" y2="432.6" stroke="#2c3947" stroke-width="0.9"/>
<line x1="952.1" y1="444.4" x2="980.9" y2="438.1" stroke="#2c3947" stroke-width="0.9"/>
<line x1="951.8" y1="449.9" x2="980.5" y2="443.6" stroke="#2c3947" stroke-width="0.9"/>
<line x1="951.5" y1="455.5" x2="980.1" y2="449.1" stroke="#2c3947" stroke-width="0.9"/>
<line x1="951.2" y1="461.0" x2="979.7" y2="454.6" stroke="#2c3947" stroke-width="0.9"/>
<line x1="950.8" y1="466.6" x2="979.3" y2="460.1" stroke="#2c3947" stroke-width="0.9"/>
<line x1="950.5" y1="472.2" x2="979.0" y2="465.6" stroke="#2c3947" stroke-width="0.9"/>
<line x1="950.2" y1="477.7" x2="978.6" y2="471.2" stroke="#2c3947" stroke-width="0.9"/>
<line x1="949.9" y1="483.3" x2="978.2" y2="476.7" stroke="#2c3947" stroke-width="0.9"/>
<line x1="949.6" y1="488.8" x2="977.8" y2="482.2" stroke="#2c3947" stroke-width="0.9"/>
<line x1="949.3" y1="494.4" x2="977.4" y2="487.7" stroke="#2c3947" stroke-width="0.9"/>
<line x1="948.9" y1="500.0" x2="977.0" y2="493.2" stroke="#2c3947" stroke-width="0.9"/>
<line x1="948.6" y1="505.5" x2="976.7" y2="498.7" stroke="#2c3947" stroke-width="0.9"/>
<line x1="948.3" y1="511.1" x2="976.3" y2="504.2" stroke="#2c3947" stroke-width="0.9"/>
<line x1="948.0" y1="516.6" x2="975.9" y2="509.7" stroke="#2c3947" stroke-width="0.9"/>
<line x1="947.7" y1="522.2" x2="975.5" y2="515.2" stroke="#2c3947" stroke-width="0.9"/>
<line x1="947.4" y1="527.8" x2="975.1" y2="520.7" stroke="#2c3947" stroke-width="0.9"/>
<line x1="947.0" y1="533.3" x2="974.7" y2="526.2" stroke="#2c3947" stroke-width="0.9"/>
<line x1="946.7" y1="538.9" x2="974.4" y2="531.7" stroke="#2c3947" stroke-width="0.9"/>
<line x1="946.4" y1="544.4" x2="974.0" y2="537.3" stroke="#2c3947" stroke-width="0.9"/>
<polygon points="963.9,236.4 995.2,232.1 995.0,234.7 963.8,239.1" fill="#222d39" />
<polygon points="961.9,271.4 992.8,266.8 992.6,269.4 961.8,274.1" fill="#222d39" />
<polygon points="959.9,306.5 990.4,301.5 990.2,304.1 959.8,309.1" fill="#222d39" />
<polygon points="957.9,341.5 987.9,336.2 987.8,338.8 957.8,344.2" fill="#222d39" />
<polygon points="956.0,376.5 985.5,370.9 985.4,373.5 955.8,379.2" fill="#222d39" />
<polygon points="954.0,411.6 983.1,405.6 982.9,408.2 953.8,414.2" fill="#222d39" />
<polygon points="952.0,446.6 980.7,440.3 980.5,442.9 951.8,449.3" fill="#222d39" />
<polygon points="950.0,481.6 978.3,475.0 978.1,477.7 949.8,484.3" fill="#222d39" />
<polygon points="948.0,516.6 975.9,509.7 975.7,512.4 947.8,519.3" fill="#222d39" />
<polygon points="864.3,229.6 878.1,227.8 870.2,570.0 858.1,573.2" fill="#4e6076" />
<polygon points="951.2,218.2 965.1,216.4 946.1,550.0 934.0,553.2" fill="#5e7691" />
<polygon points="996.6,212.3 1010.4,210.4 985.7,539.6 973.6,542.8" fill="#52667d" />
<polygon points="810.1,236.7 829.0,234.2 828.9,256.8 810.1,259.4" fill="#34465a" />
<polygon points="813.9,238.6 827.2,236.9 827.1,254.6 813.9,256.4" fill="#42566c" />
<line x1="820.2" y1="237.8" x2="820.1" y2="255.5" stroke="#26323f" stroke-width="0.8"/>
<polygon points="865.6,226.0 876.9,224.5 876.5,243.3 865.2,244.9" fill="#34465a" />
<polygon points="938.4,224.9 962.3,221.7 961.2,240.1 937.5,243.4" fill="#34465a" />
<polygon points="940.8,226.2 959.7,223.7 958.8,238.8 940.1,241.4" fill="#42566c" />
<polygon points="997.9,210.4 1010.5,208.8 1009.2,226.9 996.7,228.6" fill="#34465a" />
<polygon points="893.1,230.9 930.8,225.9 929.9,247.8 892.5,253.0" fill="#34465a" />
<line x1="896.9" y1="230.4" x2="926.1" y2="248.3" stroke="#6c87a4" stroke-width="2.6"/>
<line x1="927.0" y1="226.4" x2="896.2" y2="252.5" stroke="#6c87a4" stroke-width="2.6"/>
<polygon points="1020.2,212.4 1045.4,209.1 1043.5,230.2 1018.5,233.7" fill="#34465a" />
<line x1="1022.8" y1="212.1" x2="1041.0" y2="230.6" stroke="#6c87a4" stroke-width="2.4"/>
<line x1="1042.9" y1="209.4" x2="1021.0" y2="233.4" stroke="#6c87a4" stroke-width="2.4"/>
<line x1="877.4" y1="256.9" x2="949.7" y2="246.7" stroke="#50647a" stroke-width="1.2"/>
<polygon points="810.2,274.7 828.8,272.0 828.7,294.6 810.2,297.4" fill="#34465a" />
<polygon points="813.9,276.6 827.0,274.7 827.0,292.4 813.9,294.4" fill="#42566c" />
<line x1="820.1" y1="275.7" x2="820.1" y2="293.5" stroke="#26323f" stroke-width="0.8"/>
<polygon points="864.9,263.4 876.1,261.8 875.7,280.7 864.5,282.3" fill="#34465a" />
<polygon points="936.7,261.5 960.2,258.1 959.2,276.5 935.8,280.0" fill="#34465a" />
<polygon points="939.1,262.9 957.7,260.1 956.8,275.2 938.3,278.0" fill="#42566c" />
<polygon points="995.4,246.5 1007.8,244.7 1006.5,262.8 994.1,264.6" fill="#34465a" />
<polygon points="894.3,274.5 926.5,269.7 925.9,283.2 893.9,288.1" fill="#34465a" />
<polygon points="1018.3,252.9 1040.5,249.6 1039.2,264.3 1017.1,267.7" fill="#34465a" />
<line x1="876.6" y1="294.2" x2="947.9" y2="283.2" stroke="#50647a" stroke-width="1.2"/>
<polygon points="810.2,312.8 828.6,309.9 828.5,332.4 810.3,335.4" fill="#34465a" />
<polygon points="813.9,314.6 826.9,312.6 826.8,330.3 813.9,332.4" fill="#42566c" />
<line x1="820.0" y1="313.7" x2="820.0" y2="331.4" stroke="#26323f" stroke-width="0.8"/>
<polygon points="864.2,300.9 875.2,299.1 874.8,318.0 863.9,319.8" fill="#34465a" />
<polygon points="935.0,298.2 958.2,294.5 957.2,312.9 934.1,316.7" fill="#34465a" />
<polygon points="937.3,299.5 955.7,296.6 954.8,311.6 936.6,314.6" fill="#42566c" />
<polygon points="992.9,282.5 1005.2,280.5 1003.8,298.7 991.6,300.6" fill="#34465a" />
<polygon points="890.9,305.2 927.6,299.4 926.7,321.3 890.3,327.3" fill="#34465a" />
<line x1="894.6" y1="304.6" x2="923.0" y2="321.9" stroke="#6c87a4" stroke-width="2.6"/>
<line x1="924.0" y1="299.9" x2="893.9" y2="326.7" stroke="#6c87a4" stroke-width="2.6"/>
<polygon points="1014.6,283.9 1039.0,280.1 1037.1,301.2 1012.9,305.3" fill="#34465a" />
<line x1="1017.0" y1="283.6" x2="1034.7" y2="301.6" stroke="#6c87a4" stroke-width="2.4"/>
<line x1="1036.6" y1="280.5" x2="1015.3" y2="304.9" stroke="#6c87a4" stroke-width="2.4"/>
<line x1="875.7" y1="331.5" x2="946.0" y2="319.7" stroke="#50647a" stroke-width="1.2"/>
<polygon points="810.3,350.8 828.4,347.7 828.3,370.3 810.4,373.5" fill="#34465a" />
<polygon points="813.9,352.6 826.7,350.4 826.7,368.1 814.0,370.4" fill="#42566c" />
<line x1="820.0" y1="351.6" x2="819.9" y2="369.3" stroke="#26323f" stroke-width="0.8"/>
<polygon points="863.5,338.3 874.4,336.5 874.0,355.3 863.2,357.2" fill="#34465a" />
<polygon points="933.3,334.8 956.2,330.9 955.1,349.3 932.4,353.3" fill="#34465a" />
<polygon points="935.6,336.1 953.7,333.0 952.8,348.0 934.9,351.2" fill="#42566c" />
<polygon points="990.4,318.5 1002.5,316.4 1001.1,334.5 989.1,336.6" fill="#34465a" />
<polygon points="892.1,348.7 923.3,343.3 922.8,356.7 891.7,362.3" fill="#34465a" />
<polygon points="1012.6,324.4 1034.2,320.7 1032.9,335.3 1011.4,339.2" fill="#34465a" />
<line x1="874.9" y1="368.8" x2="944.1" y2="356.2" stroke="#50647a" stroke-width="1.2"/>
<polygon points="810.4,388.8 828.2,385.6 828.1,408.1 810.4,411.5" fill="#34465a" />
<polygon points="814.0,390.6 826.6,388.3 826.5,406.0 814.0,408.4" fill="#42566c" />
<line x1="819.9" y1="389.5" x2="819.9" y2="407.3" stroke="#26323f" stroke-width="0.8"/>
<polygon points="862.8,375.8 873.6,373.8 873.1,392.6 862.5,394.6" fill="#34465a" />
<polygon points="931.6,371.5 954.1,367.3 953.1,385.7 930.7,390.0" fill="#34465a" />
<polygon points="933.9,372.7 951.7,369.4 950.8,384.4 933.1,387.9" fill="#42566c" />
<polygon points="987.9,354.5 999.8,352.3 998.4,370.4 986.6,372.7" fill="#34465a" />
<polygon points="888.8,379.5 924.4,372.8 923.5,394.7 888.2,401.6" fill="#34465a" />
<line x1="892.4" y1="378.8" x2="920.0" y2="395.4" stroke="#6c87a4" stroke-width="2.6"/>
<line x1="920.9" y1="373.5" x2="891.7" y2="400.9" stroke="#6c87a4" stroke-width="2.6"/>
<polygon points="1008.9,355.5 1032.7,351.1 1030.8,372.2 1007.2,376.8" fill="#34465a" />
<line x1="1011.3" y1="355.0" x2="1028.4" y2="372.7" stroke="#6c87a4" stroke-width="2.4"/>
<line x1="1030.3" y1="351.5" x2="1009.6" y2="376.3" stroke="#6c87a4" stroke-width="2.4"/>
<line x1="874.0" y1="406.1" x2="942.2" y2="392.7" stroke="#50647a" stroke-width="1.2"/>
<polygon points="810.5,426.9 828.1,423.4 828.0,446.0 810.5,449.6" fill="#34465a" />
<polygon points="814.0,428.6 826.4,426.1 826.3,443.9 814.0,446.4" fill="#42566c" />
<line x1="819.9" y1="427.5" x2="819.8" y2="445.2" stroke="#26323f" stroke-width="0.8"/>
<polygon points="862.1,413.2 872.7,411.1 872.3,429.9 861.8,432.1" fill="#34465a" />
<polygon points="929.9,408.1 952.1,403.7 951.1,422.0 929.0,426.6" fill="#34465a" />
<polygon points="932.1,409.4 949.7,405.8 948.8,420.9 931.4,424.5" fill="#42566c" />
<polygon points="985.3,390.5 997.1,388.2 995.7,406.3 984.1,408.7" fill="#34465a" />
<polygon points="889.9,423.0 920.2,416.8 919.6,430.3 889.5,436.6" fill="#34465a" />
<polygon points="1006.8,395.9 1027.9,391.7 1026.6,406.3 1005.7,410.7" fill="#34465a" />
<line x1="873.1" y1="443.4" x2="940.4" y2="429.2" stroke="#50647a" stroke-width="1.2"/>
<polygon points="810.6,464.9 827.9,461.2 827.8,483.8 810.6,487.6" fill="#34465a" />
<polygon points="814.0,466.6 826.3,464.0 826.2,481.7 814.0,484.4" fill="#42566c" />
<line x1="819.8" y1="465.4" x2="819.8" y2="483.1" stroke="#26323f" stroke-width="0.8"/>
<polygon points="861.4,450.6 871.9,448.4 871.4,467.3 861.1,469.5" fill="#34465a" />
<polygon points="928.2,444.8 950.1,440.1 949.0,458.4 927.3,463.3" fill="#34465a" />
<polygon points="930.4,446.0 947.7,442.2 946.8,457.3 929.7,461.1" fill="#42566c" />
<polygon points="982.8,426.5 994.4,424.0 993.0,442.1 981.5,444.7" fill="#34465a" />
<polygon points="886.7,453.8 921.2,446.3 920.3,468.2 886.0,475.9" fill="#34465a" />
<line x1="890.1" y1="453.0" x2="916.9" y2="469.0" stroke="#6c87a4" stroke-width="2.6"/>
<line x1="917.8" y1="447.0" x2="889.4" y2="475.1" stroke="#6c87a4" stroke-width="2.6"/>
<polygon points="1003.2,427.0 1026.3,422.0 1024.4,443.2 1001.5,448.3" fill="#34465a" />
<line x1="1005.5" y1="426.5" x2="1022.1" y2="443.7" stroke="#6c87a4" stroke-width="2.4"/>
<line x1="1024.0" y1="422.5" x2="1003.8" y2="447.8" stroke="#6c87a4" stroke-width="2.4"/>
<line x1="872.3" y1="480.7" x2="938.5" y2="465.8" stroke="#50647a" stroke-width="1.2"/>
<polygon points="810.6,503.0 827.7,499.1 827.6,521.6 810.7,525.7" fill="#34465a" />
<polygon points="814.0,504.6 826.1,501.9 826.0,519.6 814.1,522.4" fill="#42566c" />
<line x1="819.7" y1="503.3" x2="819.7" y2="521.1" stroke="#26323f" stroke-width="0.8"/>
<polygon points="860.8,488.1 871.0,485.7 870.6,504.6 860.4,507.0" fill="#34465a" />
<polygon points="926.5,481.5 948.0,476.5 947.0,494.8 925.6,499.9" fill="#34465a" />
<polygon points="928.7,482.6 945.7,478.7 944.9,493.7 927.9,497.7" fill="#42566c" />
<polygon points="980.3,462.5 991.7,459.9 990.3,478.0 979.0,480.7" fill="#34465a" />
<polygon points="887.7,497.2 917.1,490.3 916.5,503.8 887.2,510.8" fill="#34465a" />
<polygon points="1001.1,467.4 1021.6,462.7 1020.2,477.3 1000.0,482.2" fill="#34465a" />
<line x1="871.4" y1="518.0" x2="936.6" y2="502.3" stroke="#50647a" stroke-width="1.2"/>
<polygon points="810.7,541.0 827.5,536.9 827.4,559.5 810.8,563.7" fill="#34465a" />
<polygon points="814.1,542.6 825.9,539.7 825.9,557.4 814.1,560.4" fill="#42566c" />
<line x1="819.7" y1="541.3" x2="819.6" y2="559.0" stroke="#26323f" stroke-width="0.8"/>
<polygon points="860.1,525.5 870.2,523.1 869.7,541.9 859.7,544.4" fill="#34465a" />
<polygon points="924.8,518.1 946.0,512.9 945.0,531.2 923.9,536.6" fill="#34465a" />
<polygon points="926.9,519.2 943.7,515.1 942.9,530.1 926.2,534.4" fill="#42566c" />
<polygon points="977.8,498.5 989.0,495.8 987.6,513.9 976.5,516.7" fill="#34465a" />
<polygon points="884.5,528.0 918.1,519.8 917.1,541.7 883.9,550.2" fill="#34465a" />
<line x1="887.9" y1="527.2" x2="913.8" y2="542.5" stroke="#6c87a4" stroke-width="2.6"/>
<line x1="914.7" y1="520.6" x2="887.2" y2="549.3" stroke="#6c87a4" stroke-width="2.6"/>
<polygon points="997.6,498.5 1019.9,493.0 1018.0,514.2 995.9,519.9" fill="#34465a" />
<line x1="999.8" y1="498.0" x2="1015.8" y2="514.8" stroke="#6c87a4" stroke-width="2.4"/>
<line x1="1017.7" y1="493.6" x2="998.1" y2="519.3" stroke="#6c87a4" stroke-width="2.4"/>
<line x1="870.5" y1="555.3" x2="934.7" y2="538.8" stroke="#50647a" stroke-width="1.2"/>
<polygon points="810.8,579.0 827.3,574.7 827.2,597.3 810.8,601.7" fill="#34465a" />
<polygon points="814.1,580.6 825.8,577.6 825.7,595.3 814.1,598.4" fill="#42566c" />
<line x1="819.6" y1="579.2" x2="819.6" y2="596.9" stroke="#26323f" stroke-width="0.8"/>
<polygon points="859.4,563.0 869.3,560.4 868.9,579.2 859.0,581.9" fill="#34465a" />
<polygon points="923.1,554.8 944.0,549.3 942.9,567.6 922.2,573.2" fill="#34465a" />
<polygon points="925.2,555.9 941.7,551.5 940.9,566.5 924.5,571.0" fill="#42566c" />
<polygon points="975.3,534.5 986.3,531.7 984.9,549.8 974.0,552.7" fill="#34465a" />
<polygon points="885.4,571.4 914.0,563.8 913.4,577.3 885.0,585.0" fill="#34465a" />
<polygon points="995.4,538.9 1015.2,533.7 1013.9,548.4 994.3,553.7" fill="#34465a" />
<line x1="869.7" y1="592.6" x2="932.9" y2="575.3" stroke="#50647a" stroke-width="1.2"/>
<polygon points="800.0,238.0 1052.0,205.0 1051.5,209.9 800.0,243.2" fill="#2e3c4c" />
<polygon points="800.0,238.0 1052.0,205.0 1022.0,530.0 802.0,588.0" fill="url(#faceShade)" />
</g>
<polygon points="745,181 811,147 855,203 800,216 800,238 743,187" fill="#7a8898"/>
<polygon points="745,181 800,216 800,238 743,187" fill="#8e9cab"/>
<line x1="745" y1="186" x2="799" y2="239" stroke="#3a4858" stroke-width="1.4"/>
<polygon points="786,170 822,165 825,177 790,181" fill="#4a5868"/>
<polygon points="784,185 836,177 840,192 792,199" fill="#4a5868"/>
<polygon points="812,197 849,191 853,202 818,207" fill="#4a5868"/>
<polygon points="776,168 790,165 800,178 786,182" fill="#a6b3c0"/>
<polygon points="790,181 836,175 838,178 792,184" fill="#a0adba"/>
<polygon points="811,147 983,123 1036,161 1042,184 855,203" fill="#6c7a89"/>
<polygon points="811,147 983,123 1036,161 898,170 838,176" fill="#74828f"/>
<polygon points="811,147 838,176 855,203 832,190" fill="#8a98a6"/>
<polygon points="898,170 1036,161 1040,171 905,181" fill="#7f8d9b"/>
<path d="M862,137 A65,22 0 0 0 992,137 L992,150 A65,22 0 0 1 862,150 Z" fill="#667585"/>
<ellipse cx="927" cy="137" rx="65" ry="22" fill="#75838f"/>
<ellipse cx="925" cy="137.5" rx="58" ry="16.5" fill="#3f5068"/>
<ellipse cx="927" cy="140" rx="50" ry="12" fill="#3a4b62"/>
<line x1="895" y1="138.0" x2="970" y2="136.0" stroke="#55677d" stroke-width="0.9"/>
<line x1="899" y1="140.6" x2="972" y2="138.6" stroke="#55677d" stroke-width="0.9"/>
<line x1="903" y1="143.2" x2="974" y2="141.2" stroke="#55677d" stroke-width="0.9"/>
<line x1="907" y1="145.8" x2="976" y2="143.8" stroke="#55677d" stroke-width="0.9"/>
<line x1="911" y1="148.4" x2="978" y2="146.4" stroke="#55677d" stroke-width="0.9"/>
<path d="M992,140 Q1005,150 990,163 L982,160 Q992,150 985,142Z" fill="#3e4c5c"/>
<polygon points="800,216 855,203 1042,184 1060,190 1060,199 800,238" fill="url(#bandG)"/>
<polygon points="800,232 1060,196 1060,200 800,239" fill="#2c3b4e"/>
<path d="M1057 200L1057 211L1060 208L1062.5 212.5L1064 211.5L1061.5 207.5L1065.5 207Z" fill="#ffffff" stroke="#222" stroke-width="0.8"/><rect x="1063" y="208" width="5" height="4" fill="none" stroke="#222" stroke-width="0.8"/>
</g></svg>
<div class="a" style="left:1374px;top:67px;width:18px;height:615px;background:linear-gradient(90deg,#6e6e6e,#8a8a8a 40%,#7a7a7a)"></div>
<div class="a" style="left:1376px;top:232px;width:14px;height:285px;background:#656565;border-radius:2px"></div>
<svg class="a" style="left:1376px;top:72px" width="13" height="10" viewBox="0 0 13 10"><path d="M6.5 0.5L12.5 9.5H0.5Z" fill="#fff"/></svg>
<svg class="a" style="left:1376px;top:667px" width="13" height="10" viewBox="0 0 13 10"><path d="M0.5 0.5H12.5L6.5 9.5Z" fill="#fff"/></svg>
<div class="a" style="left:272px;top:682px;width:1120px;height:18px;background:linear-gradient(#8c8c8c,#7a7a7a)"></div>
<div class="a" style="left:579px;top:683px;width:488px;height:17px;background:#646464;border-radius:2px"></div>
<svg class="a" style="left:276px;top:684px" width="11" height="13" viewBox="0 0 11 13"><path d="M0.5 6.5L10.5 0.5V12.5Z" fill="#fff"/></svg>
<svg class="a" style="left:1358px;top:684px" width="11" height="13" viewBox="0 0 11 13"><path d="M10.5 6.5L0.5 0.5V12.5Z" fill="#fff"/></svg>
<div class="a" style="left:272px;top:700px;width:1120px;height:64px;background:#242424"></div>
<div class="a" style="left:272px;top:700px;width:1120px;height:3px;background:linear-gradient(#161616,#242424)"></div>
<div class="a" style="left:274px;top:703px;width:104px;height:12px;box-sizing:border-box;border:1px solid #8c8c8c;background:#1b1b1b"></div>
<div class="a" style="left:276px;top:705px;width:1px;height:8px;background:#d0d0d0"></div>
<div class="a t" style="left:380.00px;top:704.00px;font-size:9.6px;line-height:9.6px;color:#dcdcdc;letter-spacing:-0.212px;">224/248/16000 s/px, 29.0 Ms/sec, 00:00:06/00:06:36 (rendering...)</div>
<div class="a t" style="left:1049.00px;top:704.00px;font-size:9.6px;line-height:9.6px;color:#dcdcdc;letter-spacing:-0.294px;">2 tri., 18 disp. tri., 2 meshes, 2 GPUs, 987.0/6568/8192 MB</div>
<div class="a" style="left:1286px;top:703px;width:103px;height:12px;box-sizing:border-box;border:1px solid #8c8c8c;background:#1b1b1b"></div>
<div class="a" style="left:1288px;top:705px;width:13px;height:8px;background:#8a8a8a"></div>
<div class="a" style="left:1367px;top:705px;width:20px;height:8px;background:#6e6266"></div>
<div class="a" style="left:274px;top:716px;width:30px;height:16px;background:#b8901c"></div>
<div class="a t" style="left:278.16px;top:720.00px;font-size:10px;line-height:10px;color:#f0c040;">Main</div>
<div class="a" style="left:306px;top:719px;width:26px;height:11px;box-sizing:border-box;border:1px solid #8e8e8e;background:#1c1c1c"></div>
<div class="a t" style="left:315.95px;top:720.00px;font-size:10px;line-height:10px;color:#3cc83c;">Z</div>
<div class="a" style="left:336px;top:719px;width:26px;height:11px;box-sizing:border-box;border:1px solid #8e8e8e;background:#1c1c1c"></div>
<div class="a t" style="left:340.38px;top:720.00px;font-size:10px;line-height:10px;color:#3cc83c;">Pos</div>
<div class="a" style="left:366px;top:719px;width:26px;height:11px;box-sizing:border-box;border:1px solid #8e8e8e;background:#1c1c1c"></div>
<div class="a t" style="left:369.83px;top:720.00px;font-size:10px;line-height:10px;color:#3cc83c;">MID</div>
<div class="a" style="left:396px;top:719px;width:26px;height:11px;box-sizing:border-box;border:1px solid #8e8e8e;background:#1c1c1c"></div>
<div class="a t" style="left:400.11px;top:720.00px;font-size:10px;line-height:10px;color:#3cc83c;">OID</div>
<div class="a" style="left:273px;top:733px;width:1116px;height:25px;background:linear-gradient(#242424,#222222 45%,#151515 85%,#0c0c0c);border-radius:4px 4px 8px 8px"></div>
<svg class="a" style="left:277px;top:738px" width="17" height="17" viewBox="0 0 17 17"><circle cx="8.5" cy="8.5" r="6.8" fill="#e2ac94"/><circle cx="8.5" cy="8.5" r="4" fill="none" stroke="#b85a3c" stroke-width="1.5"/><path d="M8.5 1.7V15.3M1.7 8.5H15.3" stroke="#f0dcd2" stroke-width="0.9"/><path d="M1.5 1.5L6 6" stroke="#f8f8f8" stroke-width="1.8"/><path d="M8 8V2.8L2.8 8Z" fill="#f8f8f8"/><path d="M15.5 15.5L11 11" stroke="#f8f8f8" stroke-width="1.8"/><path d="M9 9V14.2L14.2 9Z" fill="#f8f8f8"/></svg>
<svg class="a" style="left:303px;top:738px" width="16" height="16" viewBox="0 0 16 16"><path d="M1 10V15H6M15 6V1H10" fill="none" stroke="#e8e8e8" stroke-width="1.4"/><rect x="4" y="4" width="3" height="3" fill="#dcdcdc"/><rect x="9" y="4" width="3" height="3" fill="#dcdcdc"/><rect x="9" y="9" width="3" height="3" fill="#dcdcdc"/></svg>
<svg class="a" style="left:329px;top:738px" width="16" height="17" viewBox="0 0 16 17"><path d="M8 1L15 5L8 9L1 5Z" fill="#8cc0f0"/><path d="M1 5L8 9V16L1 12Z" fill="#d8302a"/><path d="M15 5L8 9V16L15 12Z" fill="#3cb84a"/></svg>
<div class="a" style="left:352px;top:737px;width:1px;height:18px;background:#3e3e3e"></div>
<div class="a" style="left:374px;top:740px;width:10px;height:12px;background:linear-gradient(#ffffff,#cfcfcf)"></div>
<svg class="a" style="left:398px;top:740px" width="14" height="12" viewBox="0 0 14 12"><rect x="0" y="0" width="2" height="12" fill="#e8e8e8"/><path d="M2.5 6L8 0.5V11.5Z" fill="#e8e8e8"/><path d="M8 6L13.5 0.5V11.5Z" fill="#e8e8e8"/></svg>
<div class="a" style="left:432px;top:737px;width:1px;height:18px;background:#3e3e3e"></div>
<div class="a" style="left:441px;top:740px;width:4px;height:12px;background:#e6e6e6"></div><div class="a" style="left:448px;top:740px;width:4px;height:12px;background:#e6e6e6"></div>
<div class="a" style="left:462px;top:734px;width:22px;height:23px;box-sizing:border-box;border:1px solid #8a6f2a;background:#2a2518"></div>
<svg class="a" style="left:468px;top:740px" width="12" height="12" viewBox="0 0 12 12"><path d="M0.5 0.5L11.5 6L0.5 11.5Z" fill="#f0f0f0"/></svg>
<div class="a" style="left:487px;top:737px;width:1px;height:18px;background:#3e3e3e"></div>
<svg class="a" style="left:494px;top:738px" width="16" height="16" viewBox="0 0 16 16"><rect x="1" y="1" width="14" height="10" fill="#3a3a3a" stroke="#e0e0e0" stroke-width="1.4"/><path d="M4 3V8H12" fill="none" stroke="#e0e0e0"/><rect x="5" y="13" width="6" height="2" fill="#e0e0e0"/></svg>
<div class="a" style="left:516px;top:737px;width:1px;height:18px;background:#3e3e3e"></div>
<div class="a t" style="left:524.00px;top:744.00px;font-size:9px;line-height:9px;color:#e8e8e8;font-weight:bold;">AF</div>
<div class="a" style="left:537px;top:739px;width:2px;height:13px;background:linear-gradient(#f0f0f0,#9a9a9a)"></div><div class="a" style="left:536px;top:739px;width:4px;height:4px;border-radius:2px;background:#e0e0e0"></div>
<svg class="a" style="left:549px;top:740px" width="13" height="13" viewBox="0 0 13 13"><defs><linearGradient id="cw" x1="0" y1="0" x2="1" y2="1"><stop offset="0" stop-color="#ff5050"/><stop offset="0.33" stop-color="#f0e040"/><stop offset="0.66" stop-color="#40c0f0"/><stop offset="1" stop-color="#c040f0"/></linearGradient></defs><circle cx="6.5" cy="6.5" r="6" fill="url(#cw)"/></svg>
<div class="a" style="left:562px;top:739px;width:2px;height:13px;background:linear-gradient(#f0f0f0,#9a9a9a)"></div><div class="a" style="left:561px;top:739px;width:4px;height:4px;border-radius:2px;background:#e0e0e0"></div>
<svg class="a" style="left:575px;top:740px" width="13" height="13" viewBox="0 0 13 13"><circle cx="6.5" cy="6.5" r="6" fill="url(#gSph)" opacity="0.8"/><circle cx="5" cy="5" r="2" fill="#fff"/></svg>
<div class="a" style="left:588px;top:739px;width:2px;height:13px;background:linear-gradient(#f0f0f0,#9a9a9a)"></div><div class="a" style="left:587px;top:739px;width:4px;height:4px;border-radius:2px;background:#e0e0e0"></div>
<svg class="a" style="left:601px;top:740px" width="14" height="14" viewBox="0 0 14 14"><path d="M5 1L1 12H8Z" fill="url(#gCone)"/><circle cx="9.5" cy="10" r="3.5" fill="url(#gOr)"/></svg>
<div class="a" style="left:615px;top:739px;width:2px;height:13px;background:linear-gradient(#f0f0f0,#9a9a9a)"></div><div class="a" style="left:614px;top:739px;width:4px;height:4px;border-radius:2px;background:#e0e0e0"></div>
<div class="a" style="left:624px;top:734px;width:22px;height:23px;box-sizing:border-box;border:1px solid #8a6f2a;background:#2a2518"></div>
<svg class="a" style="left:627px;top:740px" width="14" height="13" viewBox="0 0 14 13"><rect x="1" y="1" width="11" height="11" fill="none" stroke="#d8d8d8" stroke-width="1.2"/><circle cx="7" cy="7" r="3.5" fill="#bbb"/></svg>
<div class="a" style="left:641px;top:739px;width:2px;height:13px;background:linear-gradient(#f0f0f0,#9a9a9a)"></div><div class="a" style="left:640px;top:739px;width:4px;height:4px;border-radius:2px;background:#e0e0e0"></div>
<svg class="a" style="left:652px;top:741px" width="12" height="12" viewBox="0 0 12 12"><rect x="1" y="1" width="10" height="10" fill="#3a1a18" stroke="#a04038" stroke-width="1.2"/><rect x="4" y="4" width="4" height="4" fill="#e04030"/></svg>
<div class="a" style="left:667px;top:739px;width:2px;height:13px;background:linear-gradient(#f0f0f0,#9a9a9a)"></div><div class="a" style="left:666px;top:739px;width:4px;height:4px;border-radius:2px;background:#e0e0e0"></div>
<svg class="a" style="left:679px;top:741px" width="13" height="12" viewBox="0 0 13 12"><rect x="1" y="1" width="11" height="10" fill="#505a64" stroke="#c8c8c8" stroke-width="1"/><rect x="3" y="3" width="7" height="6" fill="#7a8490"/></svg>
<div class="a" style="left:693px;top:739px;width:2px;height:13px;background:linear-gradient(#f0f0f0,#9a9a9a)"></div><div class="a" style="left:692px;top:739px;width:4px;height:4px;border-radius:2px;background:#e0e0e0"></div>
<div class="a" style="left:701px;top:737px;width:1px;height:18px;background:#3e3e3e"></div>
<svg class="a" style="left:708px;top:738px" width="18" height="18" viewBox="0 0 18 18"><circle cx="8" cy="8" r="6.5" fill="url(#gSph)" opacity="0.85"/><path d="M3 3L12 12" stroke="#333" stroke-width="1"/><path d="M13 14H17L15 17Z" fill="#fff"/></svg>
<svg class="a" style="left:735px;top:738px" width="18" height="18" viewBox="0 0 18 18"><rect x="1" y="1" width="6" height="6" fill="#555"/><rect x="7" y="1" width="6" height="6" fill="#eee"/><rect x="1" y="7" width="6" height="6" fill="#eee"/><rect x="7" y="7" width="6" height="6" fill="#333"/><path d="M12 14H16L14 17Z" fill="#fff"/></svg>
<div class="a" style="left:756px;top:737px;width:1px;height:18px;background:#3e3e3e"></div>
<svg class="a" style="left:762px;top:738px" width="18" height="18" viewBox="0 0 18 18"><path d="M2 12A7 7 0 0 1 14 5" fill="none" stroke="#3c9a3c" stroke-width="2" stroke-dasharray="1.5 1.2"/><path d="M14 5A7 7 0 0 1 15 12" fill="none" stroke="#c04040" stroke-width="2" stroke-dasharray="1.5 1.2"/><path d="M8 8L14 12" stroke="#e0c0c0" stroke-width="1.5"/><path d="M13 14H17L15 17Z" fill="#fff"/></svg>
<div class="a" style="left:785px;top:737px;width:1px;height:18px;background:#3e3e3e"></div>
<svg class="a" style="left:793px;top:738px" width="16" height="16" viewBox="0 0 16 16"><rect x="1" y="3" width="10" height="12" fill="#c8c0b0"/><rect x="4" y="1" width="4" height="3" fill="#e0e0e0"/><rect x="6" y="7" width="9" height="8" fill="#7a8a9a" stroke="#ddd"/></svg>
<svg class="a" style="left:818px;top:738px" width="16" height="16" viewBox="0 0 16 16"><rect x="5" y="1" width="10" height="8" fill="#8aa0b8" stroke="#ddd"/><path d="M5 8V14M2 11L5 15L8 11" fill="none" stroke="#60c060" stroke-width="2"/></svg>
<svg class="a" style="left:845px;top:738px" width="16" height="16" viewBox="0 0 16 16"><rect x="6" y="1" width="9" height="10" fill="#8aa8d0"/><rect x="3" y="4" width="9" height="10" fill="#a8c0e0"/><path d="M5 6V14M2 11L5 15L8 11" fill="none" stroke="#60c060" stroke-width="2"/></svg>
<svg class="a" style="left:870px;top:738px" width="16" height="16" viewBox="0 0 16 16"><rect x="1" y="1" width="14" height="14" rx="2" fill="#b8a070" stroke="#ccc"/><rect x="1" y="8" width="4" height="4" fill="#333"/><rect x="8" y="8" width="4" height="4" fill="#333"/><rect x="5" y="12" width="4" height="3" fill="#333"/><path d="M3 7L12 3" stroke="#eee"/></svg>
<div class="a" style="left:892px;top:737px;width:1px;height:18px;background:#3e3e3e"></div>
<svg class="a" style="left:900px;top:736px" width="16" height="18" viewBox="0 0 16 18"><path d="M3 7V4A3.5 3.5 0 0 1 10 4" fill="none" stroke="#d0d0d0" stroke-width="1.6"/><rect x="6" y="9" width="9" height="8" fill="#c8c8c8"/><path d="M7 11H14M7 13H14M7 15H14" stroke="#888" stroke-width="0.7"/></svg>
<div class="a" style="left:921px;top:737px;width:1px;height:18px;background:#3e3e3e"></div>
<svg class="a" style="left:927px;top:737px" width="20" height="20" viewBox="0 0 20 20"><path d="M2 5L9 2L16 5V14L9 17L2 14Z M2 5L9 8L16 5 M9 8V17" fill="none" stroke="#f0f0f0" stroke-width="1.4"/><path d="M15 16H19L17 19Z" fill="#fff"/></svg>
<svg class="a" style="left:953px;top:737px" width="18" height="18" viewBox="0 0 18 18"><path d="M9 1V17M1 9H17" stroke="#f0f0f0" stroke-width="2.2"/><path d="M9 0L6 4H12Z M9 18L6 14H12Z M0 9L4 6V12Z M18 9L14 6V12Z" fill="#f0f0f0"/></svg>
<svg class="a" style="left:980px;top:738px" width="17" height="17" viewBox="0 0 17 17"><path d="M3 7A6 6 0 0 1 14 6M14 10A6 6 0 0 1 3 11" fill="none" stroke="#f0f0f0" stroke-width="2.2"/><path d="M16 3V8H11Z M1 14V9H6Z" fill="#f0f0f0"/></svg>
<svg class="a" style="left:1006px;top:738px" width="16" height="16" viewBox="0 0 16 16"><path d="M1 5V1H5M11 1H15V5M15 11V15H11M5 15H1V11" fill="none" stroke="#f0f0f0" stroke-width="2"/><path d="M2 2L6 6M14 2L10 6M14 14L10 10M2 14L6 10" stroke="#f0f0f0" stroke-width="1.6"/></svg>
<svg class="a" style="left:1031px;top:737px" width="18" height="18" viewBox="0 0 18 18"><path d="M5 14V2" stroke="#40c040" stroke-width="2"/><path d="M5 0L2 4H8Z" fill="#40c040"/><path d="M5 14H15" stroke="#e03030" stroke-width="2"/><path d="M17 14L13 11V17Z" fill="#e03030"/><circle cx="4" cy="15" r="2.5" fill="#2030d0"/></svg>
<div class="a" style="left:1397px;top:48px;width:523px;height:19px;background:linear-gradient(#494949,#454545 40%,#454545)"></div>
<div class="a" style="left:1400px;top:51px;width:12px;height:13px;background:#303030;border-radius:3px"></div>
<div class="a t" style="left:1415.50px;top:53.00px;font-size:11.3px;line-height:11.3px;color:#efefef;">Node inspector</div>
<div class="a" style="left:1397px;top:67px;width:523px;height:994px;background:#252525"></div>
<div class="a" style="left:1397px;top:67px;width:37px;height:994px;background:#232323"></div>
<div class="a" style="left:1434px;top:67px;width:467px;height:385px;background:linear-gradient(#474747,#383838 20px,#373737);border-radius:0 0 6px 6px;box-shadow:inset 1px 0 0 #1c1c1c"></div>
<div class="a" style="left:1901px;top:67px;width:19px;height:994px;background:#222"></div>
<svg class="a" style="left:1403px;top:72px" width="16" height="16" viewBox="0 0 16 16"><rect x="1" y="1" width="10" height="8" fill="#e6e6e6"/><rect x="1" y="1" width="10" height="2" fill="#9a9a9a"/><rect x="5" y="7" width="11" height="9" fill="#dcdcdc"/><rect x="5" y="7" width="11" height="2" fill="#8a8a8a"/></svg>
<svg class="a" style="left:1403px;top:98px" width="16" height="11" viewBox="0 0 16 11"><rect x="1" y="1" width="10" height="4" rx="1" fill="#d8d8d8"/><rect x="4" y="6" width="10" height="4" rx="1" fill="#d8d8d8"/></svg>
<div class="a" style="left:1400px;top:122px;width:21px;height:1px;background:#444"></div>
<div class="a" style="left:1400px;top:152px;width:21px;height:1px;background:#444"></div>
<div class="a" style="left:1400px;top:263px;width:21px;height:1px;background:#444"></div>
<div class="a" style="left:1400px;top:402px;width:21px;height:1px;background:#444"></div>
<svg class="a" style="left:1403px;top:130px" width="16" height="16" viewBox="0 0 16 16"><rect x="1" y="1.5" width="14" height="13" fill="url(#gImg)" stroke="#d8d8d8" stroke-width="1"/><path d="M1.5 10L5 8L8 9.5L11 7.5L14.5 9.5V10.5H1.5Z" fill="#1a1a1a"/></svg>
<svg class="a" style="left:1403px;top:161px" width="16" height="16" viewBox="0 0 16 16"><rect x="1" y="4" width="14" height="10" rx="2" fill="#3a3a3a" stroke="#9a9a9a"/><circle cx="9" cy="9" r="3.6" fill="#2a2a2a" stroke="#c9c9c9" stroke-width="1.2"/><circle cx="9" cy="9" r="1.6" fill="#a04040"/><rect x="3" y="2" width="4" height="2" fill="#8a8a8a"/></svg>
<svg class="a" style="left:1403px;top:187px" width="16" height="16" viewBox="0 0 16 16"><ellipse cx="8" cy="4" rx="7" ry="3" fill="#c8d8e8"/><path d="M1 4V12A7 3 0 0 0 15 12V4A7 3 0 0 1 1 4Z" fill="#a8b8c8"/><path d="M1 8H15" stroke="#506070"/></svg>
<svg class="a" style="left:1403px;top:214px" width="16" height="16" viewBox="0 0 16 16"><ellipse cx="8" cy="4" rx="7" ry="3" fill="#d8d8d8"/><path d="M1 4V12A7 3 0 0 0 15 12V4A7 3 0 0 1 1 4Z" fill="#b0b8c0"/><circle cx="8" cy="8" r="2.5" fill="#333"/></svg>
<svg class="a" style="left:1403px;top:241px" width="16" height="16" viewBox="0 0 16 16"><path d="M6 1L2 12H9Z" fill="url(#gCone)"/><circle cx="11" cy="12" r="4.2" fill="url(#gOr)"/></svg>
<svg class="a" style="left:1403px;top:272px" width="16" height="16" viewBox="0 0 16 16"><rect x="1.5" y="1.5" width="13" height="13" fill="#3b4048" stroke="#c8d2dc" stroke-width="1.2"/><path d="M4.5 3.5V11.5H12.5" fill="none" stroke="#dfe8f0" stroke-width="1.2"/><path d="M3.5 4.5L4.5 3L5.5 4.5M11 10.5L12.5 11.5L11 12.5" fill="none" stroke="#dfe8f0"/></svg>
<svg class="a" style="left:1403px;top:298px" width="16" height="16" viewBox="0 0 16 16"><circle cx="8" cy="8" r="7" fill="#e0e0e0"/><circle cx="8" cy="8" r="5" fill="#f4f4f4" stroke="#999" stroke-width="0.5"/><path d="M8 4V8H11" stroke="#333" stroke-width="1.2" fill="none"/></svg>
<svg class="a" style="left:1403px;top:325px" width="16" height="16" viewBox="0 0 16 16"><rect x="1" y="1" width="14" height="14" fill="#2a2a2a" stroke="#d0d0d0" stroke-width="1.2"/><path d="M3 5L6 3L7 7L10 6L13 3M4 12L7 9L9 12L12 9" fill="none" stroke="#e0e0e0" stroke-width="1.3"/></svg>
<svg class="a" style="left:1403px;top:351px" width="16" height="17" viewBox="0 0 16 17"><path d="M2 4L9 1L15 4V13L8 16L2 13Z" fill="#e03a2a"/><path d="M2 4L8 7L15 4" fill="none" stroke="#ff8070"/><path d="M8 7V16" stroke="#b02010"/></svg>
<svg class="a" style="left:1403px;top:379px" width="16" height="16" viewBox="0 0 16 16"><rect x="5" y="1" width="10" height="10" rx="1" fill="#80a0c8"/><rect x="3" y="3" width="10" height="10" rx="1" fill="#a0bce0"/><rect x="1" y="5" width="10" height="10" rx="1" fill="url(#gBlue)"/></svg>
<svg class="a" style="left:1403px;top:409px" width="16" height="16" viewBox="0 0 16 16"><rect x="1" y="1" width="14" height="14" fill="#f4f4f4" stroke="#ccc"/><path d="M2 13L6 6L9 9L11 7L14 13Z" fill="#111"/></svg>
<svg class="a" style="left:1403px;top:436px" width="16" height="16" viewBox="0 0 16 16"><rect x="0.5" y="0.5" width="15" height="15" rx="3" fill="#1c2a1c" stroke="#6a7a6a"/><path d="M8 2L9 6L13 4L10 7.5L14 9L9.5 9.5L11 13.5L8 10.5L5 13.5L6.5 9.5L2 9L6 7.5L3 4L7 6Z" fill="#ffffff"/></svg>
<div class="a" style="left:1428px;top:68px;width:22px;height:21px;box-sizing:border-box;background:linear-gradient(#9fb0ae,#708480);border-radius:6px;border:1px solid #5a6a68"></div>
<svg class="a" style="left:1431px;top:70px" width="16" height="17" viewBox="0 0 16 17"><path d="M1.5 5L5 1.5H14.5V15.5H1.5Z" fill="#f6eee8" stroke="#d8ccc4" stroke-width="0.8"/><circle cx="5.5" cy="8" r="2.4" fill="#8a3a30"/><circle cx="11" cy="5" r="1.8" fill="#b05a48"/><circle cx="10" cy="12" r="2.8" fill="#c05030"/><path d="M1.5 5L5 1.5V5Z" fill="#d8d8d8"/></svg>
<div class="a t" style="left:1461.00px;top:74.00px;font-size:10.8px;line-height:10.8px;color:#e8e8e8;letter-spacing:0.210px;">Texture: Texture</div>
<div class="a" style="left:1772px;top:71px;width:105px;height:15px;background:linear-gradient(#242424,#161616);border-radius:4px;box-shadow:0 0 0 1px #2e2e2e"></div>
<div class="a t" style="left:1778.00px;top:74.00px;font-size:10.6px;line-height:10.6px;color:#e6e6e6;">RGB image</div>
<svg class="a" style="left:1865px;top:79px" width="8" height="6" viewBox="0 0 8 6"><path d="M0.5 0.5H7.5L4 5Z" fill="#d8d8d8"/></svg>
<div class="a" style="left:1882px;top:71px;width:15px;height:15px;background:linear-gradient(#242424,#161616);border-radius:4px;box-shadow:0 0 0 1px #2e2e2e"></div>
<svg class="a" style="left:1884px;top:75px" width="11" height="7" viewBox="0 0 11 7"><ellipse cx="5.5" cy="3.5" rx="5" ry="3" fill="#e8e8e8"/><circle cx="5.5" cy="3.5" r="1.5" fill="#222"/></svg>
<div class="a" style="left:1434px;top:90px;width:467px;height:362px;background:#373737;border-radius:0 0 6px 6px"></div>
<div class="a" style="left:1444px;top:96px;width:17px;height:17px;box-sizing:border-box;background:#1c1c1c;border:1px solid #111;border-radius:4px"></div>
<svg class="a" style="left:1444px;top:96px" width="17" height="17" viewBox="0 0 17 17"><rect x="2" y="2" width="13" height="3" fill="#e8e8e8"/><path d="M8.5 15V7M4.5 10L8.5 6L12.5 10" fill="none" stroke="#7ad07a" stroke-width="2.2"/></svg>
<div class="a" style="left:1465px;top:96px;width:17px;height:17px;box-sizing:border-box;background:#1c1c1c;border:1px solid #111;border-radius:4px"></div>
<svg class="a" style="left:1465px;top:96px" width="17" height="17" viewBox="0 0 17 17"><path d="M4 6A5.5 5.5 0 1 0 9 3.5" fill="none" stroke="#7ad07a" stroke-width="2"/><path d="M9 0L12.5 3.5L9 7Z" fill="#7ad07a"/></svg>
<div class="a" style="left:1444px;top:117px;width:17px;height:17px;box-sizing:border-box;background:#1c1c1c;border:1px solid #111;border-radius:4px"></div>
<svg class="a" style="left:1444px;top:117px" width="17" height="17" viewBox="0 0 17 17"><rect x="3" y="2" width="11" height="13" fill="none" stroke="#e8e8e8" stroke-width="1.4"/><path d="M5.5 2V15M11.5 2V15M3 6H14M3 10H14" stroke="#e8e8e8" stroke-width="1.2"/></svg>
<div class="a" style="left:1465px;top:117px;width:17px;height:17px;box-sizing:border-box;background:#1c1c1c;border:1px solid #111;border-radius:4px"></div>
<svg class="a" style="left:1465px;top:117px" width="17" height="17" viewBox="0 0 17 17"><path d="M3.5 13.5L10 7" stroke="#d0d0d0" stroke-width="2.4"/><circle cx="11.5" cy="5.5" r="3" fill="none" stroke="#d0d0d0" stroke-width="1.6"/><circle cx="3.5" cy="13.5" r="2" fill="none" stroke="#d0d0d0" stroke-width="1.4"/></svg>
<div class="a t" style="left:1491.00px;top:98.00px;font-size:10.8px;line-height:10.8px;color:#e6e6e6;letter-spacing:0.000px;">D:\Projects\Patreon\001_Cityscape\Textures\Displacement maps!\Roof20.tif</div>
<div class="a t" style="left:1491.00px;top:120.00px;font-size:10.8px;line-height:10.8px;color:#e6e6e6;letter-spacing:-0.171px;">4000x4000 pixels, 96-bit RGB HDR, 125000 KB</div>
<div class="a" style="left:1474px;top:143px;width:423px;height:21px;background:linear-gradient(#575757,#454545);border-radius:0 5px 5px 0;box-shadow:inset 0 1px 0 #5e5e5e"></div>
<div class="a" style="left:1454px;top:143px;width:22px;height:21px;box-sizing:border-box;background:linear-gradient(#a8b8b4,#6c7e7a);border-radius:6px 0 0 6px"></div>
<svg class="a" style="left:1480px;top:149px" width="8" height="9" viewBox="0 0 8 9"><path d="M0.5 0.5L7 4.5L0.5 8.5Z" fill="#e6e6e6"/></svg>
<div class="a t" style="left:1498.00px;top:148.00px;font-size:10.8px;line-height:10.8px;color:#e6e6e6;">Power:</div>
<div class="a" style="left:1474px;top:170px;width:423px;height:21px;background:linear-gradient(#575757,#454545);border-radius:0 5px 5px 0;box-shadow:inset 0 1px 0 #5e5e5e"></div>
<div class="a" style="left:1454px;top:170px;width:22px;height:21px;box-sizing:border-box;background:linear-gradient(#7e90a0,#58687a);border-radius:6px 0 0 6px"></div>
<svg class="a" style="left:1480px;top:176px" width="8" height="9" viewBox="0 0 8 9"><path d="M0.5 0.5L7 4.5L0.5 8.5Z" fill="#e6e6e6"/></svg>
<div class="a t" style="left:1498.00px;top:176.00px;font-size:10.8px;line-height:10.8px;color:#e6e6e6;">Gamma:</div>
<div class="a" style="left:1474px;top:197px;width:423px;height:21px;background:linear-gradient(#575757,#454545);border-radius:0 5px 5px 0;box-shadow:inset 0 1px 0 #5e5e5e"></div>
<div class="a" style="left:1454px;top:197px;width:22px;height:21px;box-sizing:border-box;background:linear-gradient(#9a8a98,#6a5a68);border-radius:6px 0 0 6px"></div>
<svg class="a" style="left:1480px;top:203px" width="8" height="9" viewBox="0 0 8 9"><path d="M0.5 0.5L7 4.5L0.5 8.5Z" fill="#e6e6e6"/></svg>
<div class="a t" style="left:1498.00px;top:202.00px;font-size:10.8px;line-height:10.8px;color:#e6e6e6;">Invert:</div>
<svg class="a" style="left:1457px;top:145px" width="16" height="17" viewBox="0 0 16 17"><defs><linearGradient id="pwG" x1="1" y1="0" x2="0" y2="1"><stop offset="0" stop-color="#1e1e1e"/><stop offset="0.45" stop-color="#5a5a5a"/><stop offset="1" stop-color="#f4f4f4"/></linearGradient></defs><path d="M2 15V6L6.5 1H14V15Z" fill="url(#pwG)" stroke="#eeeeee" stroke-width="1.3"/><path d="M2 6L6.5 1L7 6Z" fill="#f0f0f0"/></svg>
<svg class="a" style="left:1457px;top:172px" width="16" height="17" viewBox="0 0 16 17"><rect x="1.5" y="1.5" width="13" height="13" fill="#3a4a5a" stroke="#1e2a36"/><path d="M3 11Q5 11 7 8Q9 5 13 5" fill="none" stroke="#c8d8e8" stroke-width="1.3"/></svg>
<svg class="a" style="left:1457px;top:199px" width="16" height="17" viewBox="0 0 16 17"><rect x="1.5" y="1.5" width="13" height="13" fill="#3a2a3e" stroke="#20162a"/><path d="M2 8H6M10 8H14M6 5V11M10 5V11" stroke="#d0b8e0" stroke-width="1.3"/></svg>
<div class="a" style="left:1627px;top:145px;width:266px;height:17px;background:linear-gradient(#262626,#1a1a1a);border-radius:4px;box-shadow:0 0 0 1px #2a2a2a"></div>
<svg class="a" style="left:1632px;top:149px" width="7" height="8" viewBox="0 0 7 8"><path d="M6.5 0.5V7.5L0.5 4Z" fill="#d8d8d8"/></svg>
<svg class="a" style="left:1881px;top:149px" width="7" height="8" viewBox="0 0 7 8"><path d="M0.5 0.5V7.5L6.5 4Z" fill="#d8d8d8"/></svg>
<div class="a t" style="left:1746.74px;top:148.00px;font-size:10.6px;line-height:10.6px;color:#e8e8e8;">1.000</div>
<div class="a" style="left:1627px;top:172px;width:266px;height:17px;background:linear-gradient(#262626,#1a1a1a);border-radius:4px;box-shadow:0 0 0 1px #2a2a2a"></div>
<div class="a" style="left:1627px;top:172px;width:140px;height:17px;background:linear-gradient(#161616,#0e0e0e);border-radius:4px 0 0 4px"></div>
<svg class="a" style="left:1632px;top:176px" width="7" height="8" viewBox="0 0 7 8"><path d="M6.5 0.5V7.5L0.5 4Z" fill="#d8d8d8"/></svg>
<svg class="a" style="left:1881px;top:176px" width="7" height="8" viewBox="0 0 7 8"><path d="M0.5 0.5V7.5L6.5 4Z" fill="#d8d8d8"/></svg>
<div class="a t" style="left:1746.74px;top:176.00px;font-size:10.6px;line-height:10.6px;color:#e8e8e8;">1.000</div>
<div class="a" style="left:1627px;top:200px;width:16px;height:16px;box-sizing:border-box;background:linear-gradient(#3c3c3c,#232323);border:1px solid #151515;border-radius:4px"></div>
<div class="a" style="left:1461px;top:245px;width:436px;height:117px;background:#474747;border-radius:0 0 5px 5px;box-shadow:0 1px 0 #232323"></div>
<div class="a" style="left:1474px;top:224px;width:423px;height:21px;background:linear-gradient(#575757,#454545);border-radius:0 5px 5px 0;box-shadow:inset 0 1px 0 #5e5e5e"></div>
<div class="a" style="left:1454px;top:224px;width:23px;height:23px;box-sizing:border-box;background:linear-gradient(#a8b8c8,#788898);border-radius:6px"></div>
<svg class="a" style="left:1457px;top:227px" width="17" height="17" viewBox="0 0 17 17"><path d="M3.5 13.5L13.5 3.5" stroke="#eef2f6" stroke-width="1.8"/><path d="M10 3H14V7M7 14H3V10" fill="none" stroke="#eef2f6" stroke-width="1.6"/><path d="M2.5 6Q4 2.5 8 3M14.5 11Q13 14.5 9 14" fill="none" stroke="#dde6ee" stroke-width="1.2"/></svg>
<svg class="a" style="left:1480px;top:231px" width="9" height="8" viewBox="0 0 9 8"><path d="M0.5 0.5H8.5L4.5 7Z" fill="#e6e6e6"/></svg>
<div class="a t" style="left:1498.00px;top:230.00px;font-size:10.8px;line-height:10.8px;color:#e6e6e6;letter-spacing:0.030px;">UV transform: UV transform</div>
<div class="a" style="left:1789px;top:227px;width:104px;height:15px;background:linear-gradient(#242424,#161616);border-radius:4px;box-shadow:0 0 0 1px #2e2e2e"></div>
<div class="a t" style="left:1795.00px;top:230.00px;font-size:10.6px;line-height:10.6px;color:#e6e6e6;">Transform value</div>
<svg class="a" style="left:1881px;top:235px" width="8" height="6" viewBox="0 0 8 6"><path d="M0.5 0.5H7.5L4 5Z" fill="#d8d8d8"/></svg>
<div class="a t" style="left:1484.00px;top:254.00px;font-size:10.8px;line-height:10.8px;color:#dcdcdc;">R.Z</div>
<div class="a" style="left:1508px;top:251px;width:385px;height:15px;background:linear-gradient(#262626,#1a1a1a);border-radius:4px;box-shadow:0 0 0 1px #2a2a2a"></div>
<div class="a" style="left:1508px;top:251px;width:143px;height:15px;background:linear-gradient(#161616,#0e0e0e);border-radius:4px 0 0 4px"></div>
<svg class="a" style="left:1513px;top:254px" width="7" height="8" viewBox="0 0 7 8"><path d="M6.5 0.5V7.5L0.5 4Z" fill="#d8d8d8"/></svg>
<svg class="a" style="left:1881px;top:254px" width="7" height="8" viewBox="0 0 7 8"><path d="M0.5 0.5V7.5L6.5 4Z" fill="#d8d8d8"/></svg>
<div class="a t" style="left:1687.92px;top:254.00px;font-size:10.6px;line-height:10.6px;color:#e8e8e8;">-90.0</div>
<div class="a t" style="left:1484.00px;top:278.00px;font-size:10.8px;line-height:10.8px;color:#dcdcdc;">S.X</div>
<div class="a" style="left:1508px;top:276px;width:365px;height:15px;background:linear-gradient(#262626,#1a1a1a);border-radius:4px;box-shadow:0 0 0 1px #2a2a2a"></div>
<div class="a" style="left:1508px;top:276px;width:164px;height:15px;background:linear-gradient(#161616,#0e0e0e);border-radius:4px 0 0 4px"></div>
<svg class="a" style="left:1513px;top:279px" width="7" height="8" viewBox="0 0 7 8"><path d="M6.5 0.5V7.5L0.5 4Z" fill="#d8d8d8"/></svg>
<svg class="a" style="left:1861px;top:279px" width="7" height="8" viewBox="0 0 7 8"><path d="M0.5 0.5V7.5L6.5 4Z" fill="#d8d8d8"/></svg>
<div class="a t" style="left:1677.74px;top:278.00px;font-size:10.6px;line-height:10.6px;color:#e8e8e8;">1.760</div>
<div class="a t" style="left:1484.00px;top:298.00px;font-size:10.8px;line-height:10.8px;color:#dcdcdc;">S.Y</div>
<div class="a" style="left:1508px;top:295px;width:365px;height:16px;background:linear-gradient(#262626,#1a1a1a);border-radius:4px;box-shadow:0 0 0 1px #2a2a2a"></div>
<div class="a" style="left:1508px;top:295px;width:147px;height:16px;background:linear-gradient(#161616,#0e0e0e);border-radius:4px 0 0 4px"></div>
<svg class="a" style="left:1513px;top:299px" width="7" height="8" viewBox="0 0 7 8"><path d="M6.5 0.5V7.5L0.5 4Z" fill="#d8d8d8"/></svg>
<svg class="a" style="left:1861px;top:299px" width="7" height="8" viewBox="0 0 7 8"><path d="M0.5 0.5V7.5L6.5 4Z" fill="#d8d8d8"/></svg>
<div class="a t" style="left:1668.89px;top:298.00px;font-size:10.6px;line-height:10.6px;color:#e8e8e8;">1.020177</div>
<div class="a t" style="left:1484.00px;top:323.00px;font-size:10.8px;line-height:10.8px;color:#dcdcdc;">T.X</div>
<div class="a" style="left:1508px;top:320px;width:385px;height:16px;background:linear-gradient(#262626,#1a1a1a);border-radius:4px;box-shadow:0 0 0 1px #2a2a2a"></div>
<svg class="a" style="left:1513px;top:324px" width="7" height="8" viewBox="0 0 7 8"><path d="M6.5 0.5V7.5L0.5 4Z" fill="#d8d8d8"/></svg>
<svg class="a" style="left:1881px;top:324px" width="7" height="8" viewBox="0 0 7 8"><path d="M0.5 0.5V7.5L6.5 4Z" fill="#d8d8d8"/></svg>
<div class="a t" style="left:1686.74px;top:323.00px;font-size:10.6px;line-height:10.6px;color:#e8e8e8;">0.000</div>
<div class="a t" style="left:1484.00px;top:342.00px;font-size:10.8px;line-height:10.8px;color:#dcdcdc;">T.Y</div>
<div class="a" style="left:1508px;top:339px;width:385px;height:16px;background:linear-gradient(#262626,#1a1a1a);border-radius:4px;box-shadow:0 0 0 1px #2a2a2a"></div>
<svg class="a" style="left:1513px;top:343px" width="7" height="8" viewBox="0 0 7 8"><path d="M6.5 0.5V7.5L0.5 4Z" fill="#d8d8d8"/></svg>
<svg class="a" style="left:1881px;top:343px" width="7" height="8" viewBox="0 0 7 8"><path d="M0.5 0.5V7.5L6.5 4Z" fill="#d8d8d8"/></svg>
<div class="a t" style="left:1686.74px;top:342.00px;font-size:10.6px;line-height:10.6px;color:#e8e8e8;">0.000</div>
<div class="a" style="left:1878px;top:276px;width:15px;height:35px;background:linear-gradient(90deg,#222,#1a1a1a);border-radius:4px;box-shadow:0 0 0 1px #2e2e2e"></div>
<svg class="a" style="left:1881px;top:287px" width="9" height="11" viewBox="0 0 9 11"><path d="M2 5V3.5A2.5 2.5 0 0 1 7 3.5V5" fill="none" stroke="#cfcfcf" stroke-width="1.3"/><rect x="1" y="5" width="7" height="6" fill="#cfcfcf"/></svg>
<div class="a" style="left:1461px;top:389px;width:436px;height:32px;background:#494949;border-radius:0 0 5px 5px;box-shadow:0 1px 0 #232323"></div>
<div class="a" style="left:1474px;top:368px;width:423px;height:21px;background:linear-gradient(#575757,#454545);border-radius:0 5px 5px 0;box-shadow:inset 0 1px 0 #5e5e5e"></div>
<div class="a" style="left:1454px;top:368px;width:22px;height:21px;background:linear-gradient(#d0d0d0,#a8a8a8);border-radius:6px"></div>
<svg class="a" style="left:1480px;top:375px" width="9" height="8" viewBox="0 0 9 8"><path d="M0.5 0.5H8.5L4.5 7Z" fill="#e6e6e6"/></svg>
<div class="a t" style="left:1498.00px;top:374.00px;font-size:10.8px;line-height:10.8px;color:#e6e6e6;">Projection</div>
<div class="a" style="left:1789px;top:371px;width:104px;height:16px;background:linear-gradient(#242424,#161616);border-radius:4px;box-shadow:0 0 0 1px #2e2e2e"></div>
<div class="a t" style="left:1795.00px;top:374.00px;font-size:10.6px;line-height:10.6px;color:#e6e6e6;">Mesh UV</div>
<svg class="a" style="left:1881px;top:380px" width="8" height="6" viewBox="0 0 8 6"><path d="M0.5 0.5H7.5L4 5Z" fill="#d8d8d8"/></svg>
<div class="a" style="left:1501px;top:395px;width:392px;height:21px;background:linear-gradient(#6a6a6a,#585858);border-radius:0 5px 5px 0"></div>
<div class="a" style="left:1479px;top:395px;width:22px;height:21px;box-sizing:border-box;background:linear-gradient(#6a5e40,#4a4030);border:1px solid #c0a050;border-radius:6px 0 0 6px"></div>
<div class="a" style="left:1483px;top:398px;width:14px;height:14px;box-sizing:border-box;border:1px solid #e8e0c8;border-radius:2px"></div><div class="a" style="left:1484px;top:404px;width:12px;height:2px;background:#e8e0c8"></div>
<svg class="a" style="left:1508px;top:401px" width="8" height="9" viewBox="0 0 8 9"><path d="M0.5 0.5L7 4.5L0.5 8.5Z" fill="#e6e6e6"/></svg>
<div class="a t" style="left:1524.00px;top:400.00px;font-size:10.8px;line-height:10.8px;color:#e6e6e6;">UV set:</div>
<div class="a" style="left:1645px;top:398px;width:244px;height:16px;background:linear-gradient(#262626,#1a1a1a);border-radius:4px;box-shadow:0 0 0 1px #2a2a2a"></div>
<svg class="a" style="left:1650px;top:402px" width="7" height="8" viewBox="0 0 7 8"><path d="M6.5 0.5V7.5L0.5 4Z" fill="#d8d8d8"/></svg>
<svg class="a" style="left:1877px;top:402px" width="7" height="8" viewBox="0 0 7 8"><path d="M0.5 0.5V7.5L6.5 4Z" fill="#d8d8d8"/></svg>
<div class="a t" style="left:1764.05px;top:401.00px;font-size:10.6px;line-height:10.6px;color:#e8e8e8;">1</div>
<div class="a" style="left:1474px;top:427px;width:423px;height:21px;background:linear-gradient(#575757,#454545);border-radius:0 5px 5px 0;box-shadow:inset 0 1px 0 #5e5e5e"></div>
<div class="a" style="left:1454px;top:427px;width:22px;height:21px;box-sizing:border-box;background:linear-gradient(#6a6a6a,#4a4a4a);border:1px solid #8a8a8a;border-radius:6px 0 0 6px"></div>
<div class="a" style="left:1458px;top:430px;width:14px;height:14px;box-sizing:border-box;border:1px solid #e0e0e0;border-radius:2px"></div><div class="a" style="left:1459px;top:436px;width:12px;height:2px;background:#e0d8c0"></div>
<svg class="a" style="left:1480px;top:433px" width="8" height="9" viewBox="0 0 8 9"><path d="M0.5 0.5L7 4.5L0.5 8.5Z" fill="#e6e6e6"/></svg>
<div class="a t" style="left:1498.00px;top:432.00px;font-size:10.8px;line-height:10.8px;color:#e6e6e6;">Border mode:</div>
<div class="a" style="left:1627px;top:429px;width:266px;height:16px;background:linear-gradient(#242424,#161616);border-radius:4px;box-shadow:0 0 0 1px #2e2e2e"></div>
<div class="a t" style="left:1633.00px;top:432.00px;font-size:10.6px;line-height:10.6px;color:#e6e6e6;">Wrap around</div>
<svg class="a" style="left:1881px;top:438px" width="8" height="6" viewBox="0 0 8 6"><path d="M0.5 0.5H7.5L4 5Z" fill="#d8d8d8"/></svg>
<div class="a" style="left:272px;top:764px;width:1120px;height:19px;background:linear-gradient(#494949,#454545 40%,#454545)"></div>
<div class="a" style="left:275px;top:767px;width:12px;height:13px;background:#303030;border-radius:3px"></div>
<div class="a t" style="left:290.50px;top:769.00px;font-size:11.3px;line-height:11.3px;color:#efefef;">Nodegraph editor</div>
<div class="a" style="left:268px;top:783px;width:1124px;height:23px;background:#242424"></div>
<svg class="a" style="left:300px;top:786px" width="70" height="20" viewBox="0 0 70 20"><path d="M0.5 20V5Q0.5 0.5 5 0.5H50L66 20Z" fill="#474747"/></svg>
<div class="a t" style="left:319.00px;top:792.00px;font-size:11px;line-height:11px;color:#dadada;">Scene</div>
<div class="a" style="left:268px;top:783px;width:30px;height:278px;background:#232323"></div>
<div class="a" style="left:298px;top:806px;width:1094px;height:255px;background:#474747"></div>
<svg class="a" style="left:276px;top:789px" width="17" height="17" viewBox="0 0 17 17"><circle cx="8.5" cy="8.5" r="6.8" fill="#e2ac94"/><circle cx="8.5" cy="8.5" r="4" fill="none" stroke="#b85a3c" stroke-width="1.5"/><path d="M8.5 1.7V15.3M1.7 8.5H15.3" stroke="#f0dcd2" stroke-width="0.9"/><path d="M1.5 1.5L6 6" stroke="#f8f8f8" stroke-width="1.8"/><path d="M8 8V2.8L2.8 8Z" fill="#f8f8f8"/><path d="M15.5 15.5L11 11" stroke="#f8f8f8" stroke-width="1.8"/><path d="M9 9V14.2L14.2 9Z" fill="#f8f8f8"/></svg>
<div class="a" style="left:274px;top:811px;width:21px;height:1px;background:#444"></div>
<div class="a" style="left:274px;top:869px;width:21px;height:1px;background:#444"></div>
<div class="a" style="left:274px;top:980px;width:21px;height:1px;background:#444"></div>
<svg class="a" style="left:277px;top:819px" width="16" height="16" viewBox="0 0 16 16"><circle cx="4" cy="3" r="2" fill="#e8e8e8"/><circle cx="8" cy="3" r="2" fill="#e8e8e8"/><circle cx="12" cy="3" r="2" fill="#e8e8e8"/><rect x="4" y="6" width="8" height="4" rx="2" fill="#e8e8e8"/><circle cx="5" cy="13" r="2" fill="#e8e8e8"/><circle cx="11" cy="13" r="2" fill="#e8e8e8"/><path d="M0 8L3 6V10ZM16 8L13 6V10Z" fill="#c07060"/></svg>
<svg class="a" style="left:277px;top:845px" width="16" height="17" viewBox="0 0 16 17"><rect x="0.5" y="0.5" width="15" height="12" fill="none" stroke="#ddd" stroke-width="0.8"/><circle cx="4" cy="3" r="1.8" fill="#e8e8e8"/><circle cx="12" cy="3" r="1.8" fill="#e8e8e8"/><rect x="4" y="6" width="8" height="4" rx="2" fill="#e8e8e8"/><circle cx="5" cy="14" r="2" fill="#e8e8e8"/><circle cx="11" cy="14" r="2" fill="#e8e8e8"/></svg>
<div class="a" style="left:274px;top:873px;width:21px;height:22px;box-sizing:border-box;border:1px solid #a8883a;background:#2c2a22"></div>
<svg class="a" style="left:277px;top:876px" width="16" height="16" viewBox="0 0 16 16"><rect x="1" y="3" width="14" height="12" fill="url(#gImg)" stroke="#ddd"/><path d="M2 11L6 8L9 10L14 7V14H2Z" fill="#3a6a3a"/><ellipse cx="11" cy="4" rx="4" ry="2.5" fill="#eee"/><circle cx="11" cy="4" r="1.3" fill="#222"/></svg>
<svg class="a" style="left:277px;top:903px" width="16" height="17" viewBox="0 0 16 17"><path d="M6 2L2 13H9Z" fill="url(#gCone)"/><circle cx="11" cy="13" r="3.5" fill="url(#gOr)"/><ellipse cx="11" cy="4" rx="4" ry="2.5" fill="#eee"/><circle cx="11" cy="4" r="1.3" fill="#222"/></svg>
<svg class="a" style="left:277px;top:930px" width="16" height="16" viewBox="0 0 16 16"><circle cx="7" cy="10" r="5.5" fill="url(#gSph)" opacity="0.75"/><ellipse cx="11" cy="4" rx="4" ry="2.5" fill="#eee"/><circle cx="11" cy="4" r="1.3" fill="#222"/></svg>
<svg class="a" style="left:277px;top:957px" width="16" height="16" viewBox="0 0 16 16"><path d="M1 15V6L6 2H15V15Z" fill="#ddd"/><path d="M2 12L8 6M5 15L12 8M9 15L15 9" stroke="#4a5a7a" stroke-width="1.6"/><ellipse cx="11" cy="4" rx="4" ry="2.5" fill="#eee"/><circle cx="11" cy="4" r="1.3" fill="#222"/></svg>
<svg class="a" style="left:277px;top:987px" width="16" height="16" viewBox="0 0 16 16"><path d="M1 5V15H15M1 8H11M1 11H15M4 5V15M7 8V15M10 8V15M13 11V15" stroke="#e8e8e8" stroke-width="1.2" fill="none"/><path d="M8 6V3A3 3 0 0 1 14 3V6" fill="none" stroke="#d03030" stroke-width="2"/></svg>
<svg class="a" style="left:277px;top:1014px" width="16" height="16" viewBox="0 0 16 16"><path d="M1 3V15H15V8M1 7H9M1 11H15M5 3V15M9 3V15M13 11V15M1 3H9" stroke="#e8e8e8" stroke-width="1.2" fill="none"/><ellipse cx="12" cy="4" rx="3.5" ry="2.5" fill="#eee"/><circle cx="12" cy="4" r="1.3" fill="#222"/></svg>
<svg class="a" style="left:0;top:0" width="1920" height="1080" viewBox="0 0 1920 1080"><defs>
<linearGradient id="nb_UVT" x1="0" y1="0" x2="0" y2="1"><stop offset="0" stop-color="#4f5868"/><stop offset="1" stop-color="#3d4452"/></linearGradient>
<linearGradient id="nb_TEX" x1="0" y1="0" x2="0" y2="1"><stop offset="0" stop-color="#4b5c52"/><stop offset="1" stop-color="#3b5145"/></linearGradient>
<linearGradient id="nb_DISP" x1="0" y1="0" x2="0" y2="1"><stop offset="0" stop-color="#5e5e5e"/><stop offset="1" stop-color="#4a4a4a"/></linearGradient>
<linearGradient id="nb_NONE" x1="0" y1="0" x2="0" y2="1"><stop offset="0" stop-color="#5e5b4b"/><stop offset="1" stop-color="#4f4c3e"/></linearGradient>
<linearGradient id="nb_GEO" x1="0" y1="0" x2="0" y2="1"><stop offset="0" stop-color="#5a4e56"/><stop offset="1" stop-color="#4a4048"/></linearGradient>
<linearGradient id="nb_PLACE" x1="0" y1="0" x2="0" y2="1"><stop offset="0" stop-color="#5a4e56"/><stop offset="1" stop-color="#4a4048"/></linearGradient>
<linearGradient id="nbIcon" x1="0" y1="0" x2="0" y2="1"><stop offset="0" stop-color="#a6a6a6"/><stop offset="1" stop-color="#707070"/></linearGradient>
<clipPath id="ngClip"><rect x="298" y="806" width="1094" height="255"/></clipPath></defs><g clip-path="url(#ngClip)">
<path d="M791 877C791 882.0 792 882.0 792 887" fill="none" stroke="#c8d0d8" stroke-width="1"/>
<path d="M791 900C791 912.0 782 912.0 782 924" fill="none" stroke="#8cc8c0" stroke-width="2"/>
<path d="M815 936C815 945.0 814 945.0 814 954" fill="none" stroke="#d8d8d8" stroke-width="1"/>
<path d="M829 966C829 986.0 968 986.0 968 1006" fill="none" stroke="#d8d0b0" stroke-width="1.2"/>
<path d="M798 993C798 1002.0 799 1002.0 799 1011" fill="none" stroke="#c8d0d8" stroke-width="1"/>
<path d="M794 1023C794 1032.0 793 1032.0 793 1041" fill="none" stroke="#a8d0c4" stroke-width="1"/>
<path d="M823 1053C823 1059.0 818 1059.0 818 1065" fill="none" stroke="#d8d8d8" stroke-width="1"/>
<path d="M656 1020C656 1025.0 660 1025.0 660 1030" fill="none" stroke="#c8d0d8" stroke-width="1"/>
<path d="M656 1042C656 1053.5 649 1053.5 649 1065" fill="none" stroke="#a8d0c4" stroke-width="1"/>
<path d="M933 850C933 859.0 935 859.0 935 868" fill="none" stroke="#c8d0d8" stroke-width="1"/>
<path d="M930 880C930 889.5 928 889.5 928 899" fill="none" stroke="#a8d0c4" stroke-width="1"/>
<path d="M958 911C958 920.0 958 920.0 958 929" fill="none" stroke="#d8d8d8" stroke-width="1"/>
<path d="M973 941C973 973.5 949 973.5 949 1006" fill="none" stroke="#d8d0b0" stroke-width="1.2"/>
<path d="M962 1018C962 1025.5 965 1025.5 965 1033" fill="none" stroke="#d8d0c8" stroke-width="1"/>
<path d="M959 1045C959 1053.5 1050 1053.5 1050 1062" fill="none" stroke="#d8b8c8" stroke-width="1.2"/>
<path d="M1112 818C1112 827.0 1112 827.0 1112 836" fill="none" stroke="#d8d8d8" stroke-width="1"/>
<path d="M1126 849C1126 858.0 1133 858.0 1133 867" fill="none" stroke="#d8d0b0" stroke-width="1"/>
<path d="M1133 879C1133 886.5 1141 886.5 1141 894" fill="none" stroke="#d8d0c8" stroke-width="1"/>
<path d="M1220 812C1220 820.5 1219 820.5 1219 829" fill="none" stroke="#c8d0d8" stroke-width="1"/>
<path d="M1214 840C1214 849.5 1213 849.5 1213 859" fill="none" stroke="#a8d0c4" stroke-width="1"/>
<path d="M1243 871C1243 880.0 1242 880.0 1242 889" fill="none" stroke="#d8d8d8" stroke-width="1"/>
<path d="M1257 902C1257 911.0 1264 911.0 1264 920" fill="none" stroke="#d8d0b0" stroke-width="1"/>
<path d="M1264 932C1264 940.5 1260 940.5 1260 949" fill="none" stroke="#d8d0c8" stroke-width="1"/>
<path d="M1335 816C1335 825.5 1334 825.5 1334 835" fill="none" stroke="#a8d0c4" stroke-width="1"/>
<path d="M1364 847C1364 856.0 1363 856.0 1363 865" fill="none" stroke="#d8d8d8" stroke-width="1"/>
<path d="M1378 878C1378 887.0 1385 887.0 1385 896" fill="none" stroke="#d8d0b0" stroke-width="1"/>
<path d="M1385 908C1385 917.0 1381 917.0 1381 926" fill="none" stroke="#d8d0c8" stroke-width="1"/>
<rect x="764" y="865" width="54" height="12" rx="3" fill="url(#nb_UVT)"/>
<path d="M767 865H776V877H767A3 3 0 0 1 764 874V868A3 3 0 0 1 767 865Z" fill="url(#nbIcon)"/>
<path d="M766.5 874.5L773.5 867.5M771.0 867.5H773.5V870.0" stroke="#eee" stroke-width="1" fill="none"/>
<text x="797.0" y="873.4" font-size="6.6" fill="#ececec" text-anchor="middle" font-family="Liberation Sans" letter-spacing="-0.15">UV transform</text>
<circle cx="791.0" cy="877" r="2.3" fill="#4a4a4a" stroke="#e0e0e0" stroke-width="0.9"/>
<rect x="755.5" y="885.5" width="72" height="16" rx="4" fill="none" stroke="#b89a48" stroke-width="1.6"/>
<rect x="757" y="887" width="69" height="13" rx="3" fill="url(#nb_TEX)"/>
<path d="M760 887H769V900H760A3 3 0 0 1 757 897V890A3 3 0 0 1 760 887Z" fill="url(#nbIcon)"/>
<rect x="759.5" y="889.5" width="7" height="8" fill="#f4ece6"/><circle cx="762.0" cy="893.5" r="1.4" fill="#a03a30"/><circle cx="764.5" cy="895.5" r="1.5" fill="#c05030"/>
<text x="797.5" y="895.9" font-size="6.6" fill="#ececec" text-anchor="middle" font-family="Liberation Sans" letter-spacing="-0.15">Texture</text>
<circle cx="766.0" cy="887" r="2.4" fill="#a8d0c4"/>
<circle cx="775.9" cy="887" r="2.4" fill="#8ea6cc"/>
<circle cx="785.8" cy="887" r="2.4" fill="#c9a3b3"/>
<circle cx="795.7" cy="887" r="2.3" fill="#4a4a4a" stroke="#e0e0e0" stroke-width="0.9"/>
<circle cx="805.6" cy="887" r="2.4" fill="#e2e2d2"/>
<circle cx="815.5" cy="887" r="2.4" fill="#e2e2d2"/>
<circle cx="791.5" cy="900" r="2.3" fill="#4a4a4a" stroke="#e0e0e0" stroke-width="0.9"/>
<rect x="776" y="924" width="77" height="12" rx="3" fill="url(#nb_DISP)"/>
<path d="M779 924H788V936H779A3 3 0 0 1 776 933V927A3 3 0 0 1 779 924Z" fill="url(#nbIcon)"/>
<path d="M778.5 934.0V929.0Q782.0 925.0 785.5 929.0V934.0Z" fill="url(#gDisp)"/>
<text x="820.5" y="932.4" font-size="6.6" fill="#ececec" text-anchor="middle" font-family="Liberation Sans" letter-spacing="-0.15">Displacement</text>
<circle cx="785.0" cy="924" r="2.4" fill="#a8d0c4"/>
<circle cx="794.9" cy="924" r="2.4" fill="#8ea6cc"/>
<circle cx="804.8" cy="924" r="2.4" fill="#dcdcdc"/>
<circle cx="814.7" cy="924" r="2.4" fill="#8ea6cc"/>
<circle cx="824.6" cy="924" r="2.4" fill="#dcdcdc"/>
<circle cx="834.5" cy="924" r="2.4" fill="#dcdcdc"/>
<circle cx="844.4" cy="924" r="2.4" fill="#e0b44a"/>
<circle cx="814.5" cy="936" r="2.3" fill="#4a4a4a" stroke="#e0e0e0" stroke-width="0.9"/>
<rect x="765" y="954" width="128" height="12" rx="3" fill="url(#nb_NONE)"/>
<path d="M768 954H777V966H768A3 3 0 0 1 765 963V957A3 3 0 0 1 768 954Z" fill="url(#nbIcon)"/>
<circle cx="771.0" cy="960.0" r="4.2" fill="url(#gSph)"/>
<text x="835.0" y="962.4" font-size="6.6" fill="#ececec" text-anchor="middle" font-family="Liberation Sans" letter-spacing="-0.15">None</text>
<circle cx="774.0" cy="954" r="2.4" fill="#a8c8b0"/>
<circle cx="783.9" cy="954" r="2.4" fill="#a8d0c0"/>
<circle cx="793.8" cy="954" r="2.3" fill="#4a4a4a" stroke="#e0e0e0" stroke-width="0.9"/>
<circle cx="803.7" cy="954" r="2.3" fill="#4a4a4a" stroke="#e0e0e0" stroke-width="0.9"/>
<circle cx="813.6" cy="954" r="2.3" fill="#4a4a4a" stroke="#e0e0e0" stroke-width="0.9"/>
<circle cx="823.5" cy="954" r="2.4" fill="#a8c8b0"/>
<circle cx="833.4" cy="954" r="2.4" fill="#c9a3b3"/>
<circle cx="843.3" cy="954" r="2.4" fill="#8ea6cc"/>
<circle cx="853.2" cy="954" r="2.3" fill="#4a4a4a" stroke="#e0e0e0" stroke-width="0.9"/>
<circle cx="863.1" cy="954" r="2.3" fill="#4a4a4a" stroke="#e0e0e0" stroke-width="0.9"/>
<circle cx="873.0" cy="954" r="2.3" fill="#4a4a4a" stroke="#e0e0e0" stroke-width="0.9"/>
<circle cx="882.9" cy="954" r="2.4" fill="#c9a8c0"/>
<circle cx="829.0" cy="966" r="2.3" fill="#4a4a4a" stroke="#e0e0e0" stroke-width="0.9"/>
<rect x="771" y="981" width="53" height="12" rx="3" fill="url(#nb_UVT)"/>
<path d="M774 981H783V993H774A3 3 0 0 1 771 990V984A3 3 0 0 1 774 981Z" fill="url(#nbIcon)"/>
<path d="M773.5 990.5L780.5 983.5M778.0 983.5H780.5V986.0" stroke="#eee" stroke-width="1" fill="none"/>
<text x="803.5" y="989.4" font-size="6.6" fill="#ececec" text-anchor="middle" font-family="Liberation Sans" letter-spacing="-0.15">UV transform</text>
<circle cx="797.5" cy="993" r="2.3" fill="#4a4a4a" stroke="#e0e0e0" stroke-width="0.9"/>
<rect x="760" y="1011" width="68" height="12" rx="3" fill="url(#nb_TEX)"/>
<path d="M763 1011H772V1023H763A3 3 0 0 1 760 1020V1014A3 3 0 0 1 763 1011Z" fill="url(#nbIcon)"/>
<rect x="762.5" y="1013.0" width="7" height="8" fill="#f4ece6"/><circle cx="765.0" cy="1017.0" r="1.4" fill="#a03a30"/><circle cx="767.5" cy="1019.0" r="1.5" fill="#c05030"/>
<text x="800.0" y="1019.4" font-size="6.6" fill="#ececec" text-anchor="middle" font-family="Liberation Sans" letter-spacing="-0.15">Texture</text>
<circle cx="769.0" cy="1011" r="2.4" fill="#a8d0c4"/>
<circle cx="778.9" cy="1011" r="2.4" fill="#8ea6cc"/>
<circle cx="788.8" cy="1011" r="2.4" fill="#c9a3b3"/>
<circle cx="798.7" cy="1011" r="2.3" fill="#4a4a4a" stroke="#e0e0e0" stroke-width="0.9"/>
<circle cx="808.6" cy="1011" r="2.4" fill="#e2e2d2"/>
<circle cx="818.5" cy="1011" r="2.4" fill="#e2e2d2"/>
<circle cx="794.0" cy="1023" r="2.3" fill="#4a4a4a" stroke="#e0e0e0" stroke-width="0.9"/>
<rect x="785" y="1041" width="77" height="12" rx="3" fill="url(#nb_DISP)"/>
<path d="M788 1041H797V1053H788A3 3 0 0 1 785 1050V1044A3 3 0 0 1 788 1041Z" fill="url(#nbIcon)"/>
<path d="M787.5 1051.0V1046.0Q791.0 1042.0 794.5 1046.0V1051.0Z" fill="url(#gDisp)"/>
<text x="829.5" y="1049.4" font-size="6.6" fill="#ececec" text-anchor="middle" font-family="Liberation Sans" letter-spacing="-0.15">Displacement</text>
<circle cx="794.0" cy="1041" r="2.4" fill="#a8d0c4"/>
<circle cx="803.9" cy="1041" r="2.4" fill="#8ea6cc"/>
<circle cx="813.8" cy="1041" r="2.4" fill="#dcdcdc"/>
<circle cx="823.7" cy="1041" r="2.4" fill="#8ea6cc"/>
<circle cx="833.6" cy="1041" r="2.4" fill="#dcdcdc"/>
<circle cx="843.5" cy="1041" r="2.4" fill="#dcdcdc"/>
<circle cx="853.4" cy="1041" r="2.4" fill="#e0b44a"/>
<circle cx="823.5" cy="1053" r="2.3" fill="#4a4a4a" stroke="#e0e0e0" stroke-width="0.9"/>
<rect x="629" y="1008" width="54" height="12" rx="3" fill="url(#nb_UVT)"/>
<path d="M632 1008H641V1020H632A3 3 0 0 1 629 1017V1011A3 3 0 0 1 632 1008Z" fill="url(#nbIcon)"/>
<path d="M631.5 1017.5L638.5 1010.5M636.0 1010.5H638.5V1013.0" stroke="#eee" stroke-width="1" fill="none"/>
<text x="662.0" y="1016.4" font-size="6.6" fill="#ececec" text-anchor="middle" font-family="Liberation Sans" letter-spacing="-0.15">UV transform</text>
<circle cx="656.0" cy="1020" r="2.3" fill="#4a4a4a" stroke="#e0e0e0" stroke-width="0.9"/>
<rect x="621" y="1030" width="69" height="12" rx="3" fill="url(#nb_TEX)"/>
<path d="M624 1030H633V1042H624A3 3 0 0 1 621 1039V1033A3 3 0 0 1 624 1030Z" fill="url(#nbIcon)"/>
<rect x="623.5" y="1032.0" width="7" height="8" fill="#f4ece6"/><circle cx="626.0" cy="1036.0" r="1.4" fill="#a03a30"/><circle cx="628.5" cy="1038.0" r="1.5" fill="#c05030"/>
<text x="661.5" y="1038.4" font-size="6.6" fill="#ececec" text-anchor="middle" font-family="Liberation Sans" letter-spacing="-0.15">Texture</text>
<circle cx="630.0" cy="1030" r="2.4" fill="#a8d0c4"/>
<circle cx="639.9" cy="1030" r="2.4" fill="#8ea6cc"/>
<circle cx="649.8" cy="1030" r="2.4" fill="#c9a3b3"/>
<circle cx="659.7" cy="1030" r="2.3" fill="#4a4a4a" stroke="#e0e0e0" stroke-width="0.9"/>
<circle cx="669.6" cy="1030" r="2.4" fill="#e2e2d2"/>
<circle cx="679.5" cy="1030" r="2.4" fill="#e2e2d2"/>
<circle cx="655.5" cy="1042" r="2.3" fill="#4a4a4a" stroke="#e0e0e0" stroke-width="0.9"/>
<rect x="906" y="838" width="54" height="12" rx="3" fill="url(#nb_UVT)"/>
<path d="M909 838H918V850H909A3 3 0 0 1 906 847V841A3 3 0 0 1 909 838Z" fill="url(#nbIcon)"/>
<path d="M908.5 847.5L915.5 840.5M913.0 840.5H915.5V843.0" stroke="#eee" stroke-width="1" fill="none"/>
<text x="939.0" y="846.4" font-size="6.6" fill="#ececec" text-anchor="middle" font-family="Liberation Sans" letter-spacing="-0.15">UV transform</text>
<circle cx="933.0" cy="850" r="2.3" fill="#4a4a4a" stroke="#e0e0e0" stroke-width="0.9"/>
<rect x="896" y="868" width="68" height="12" rx="3" fill="url(#nb_TEX)"/>
<path d="M899 868H908V880H899A3 3 0 0 1 896 877V871A3 3 0 0 1 899 868Z" fill="url(#nbIcon)"/>
<rect x="898.5" y="870.0" width="7" height="8" fill="#f4ece6"/><circle cx="901.0" cy="874.0" r="1.4" fill="#a03a30"/><circle cx="903.5" cy="876.0" r="1.5" fill="#c05030"/>
<text x="936.0" y="876.4" font-size="6.6" fill="#ececec" text-anchor="middle" font-family="Liberation Sans" letter-spacing="-0.15">Texture</text>
<circle cx="905.0" cy="868" r="2.4" fill="#a8d0c4"/>
<circle cx="914.9" cy="868" r="2.4" fill="#8ea6cc"/>
<circle cx="924.8" cy="868" r="2.4" fill="#c9a3b3"/>
<circle cx="934.7" cy="868" r="2.3" fill="#4a4a4a" stroke="#e0e0e0" stroke-width="0.9"/>
<circle cx="944.6" cy="868" r="2.4" fill="#e2e2d2"/>
<circle cx="954.5" cy="868" r="2.4" fill="#e2e2d2"/>
<circle cx="930.0" cy="880" r="2.3" fill="#4a4a4a" stroke="#e0e0e0" stroke-width="0.9"/>
<rect x="920" y="899" width="78" height="12" rx="3" fill="url(#nb_DISP)"/>
<path d="M923 899H932V911H923A3 3 0 0 1 920 908V902A3 3 0 0 1 923 899Z" fill="url(#nbIcon)"/>
<path d="M922.5 909.0V904.0Q926.0 900.0 929.5 904.0V909.0Z" fill="url(#gDisp)"/>
<text x="965.0" y="907.4" font-size="6.6" fill="#ececec" text-anchor="middle" font-family="Liberation Sans" letter-spacing="-0.15">Displacement</text>
<circle cx="929.0" cy="899" r="2.4" fill="#a8d0c4"/>
<circle cx="938.9" cy="899" r="2.4" fill="#8ea6cc"/>
<circle cx="948.8" cy="899" r="2.4" fill="#dcdcdc"/>
<circle cx="958.7" cy="899" r="2.4" fill="#8ea6cc"/>
<circle cx="968.6" cy="899" r="2.4" fill="#dcdcdc"/>
<circle cx="978.5" cy="899" r="2.4" fill="#dcdcdc"/>
<circle cx="988.4" cy="899" r="2.4" fill="#e0b44a"/>
<circle cx="959.0" cy="911" r="2.3" fill="#4a4a4a" stroke="#e0e0e0" stroke-width="0.9"/>
<rect x="909" y="929" width="128" height="12" rx="3" fill="url(#nb_NONE)"/>
<path d="M912 929H921V941H912A3 3 0 0 1 909 938V932A3 3 0 0 1 912 929Z" fill="url(#nbIcon)"/>
<circle cx="915.0" cy="935.0" r="4.2" fill="url(#gSph)"/>
<text x="979.0" y="937.4" font-size="6.6" fill="#ececec" text-anchor="middle" font-family="Liberation Sans" letter-spacing="-0.15">None</text>
<circle cx="918.0" cy="929" r="2.4" fill="#a8c8b0"/>
<circle cx="927.9" cy="929" r="2.4" fill="#a8d0c0"/>
<circle cx="937.8" cy="929" r="2.3" fill="#4a4a4a" stroke="#e0e0e0" stroke-width="0.9"/>
<circle cx="947.7" cy="929" r="2.3" fill="#4a4a4a" stroke="#e0e0e0" stroke-width="0.9"/>
<circle cx="957.6" cy="929" r="2.3" fill="#4a4a4a" stroke="#e0e0e0" stroke-width="0.9"/>
<circle cx="967.5" cy="929" r="2.4" fill="#a8c8b0"/>
<circle cx="977.4" cy="929" r="2.4" fill="#c9a3b3"/>
<circle cx="987.3" cy="929" r="2.4" fill="#8ea6cc"/>
<circle cx="997.2" cy="929" r="2.3" fill="#4a4a4a" stroke="#e0e0e0" stroke-width="0.9"/>
<circle cx="1007.1" cy="929" r="2.3" fill="#4a4a4a" stroke="#e0e0e0" stroke-width="0.9"/>
<circle cx="1017.0" cy="929" r="2.3" fill="#4a4a4a" stroke="#e0e0e0" stroke-width="0.9"/>
<circle cx="1026.9" cy="929" r="2.4" fill="#c9a8c0"/>
<circle cx="973.0" cy="941" r="2.3" fill="#4a4a4a" stroke="#e0e0e0" stroke-width="0.9"/>
<rect x="930" y="1006" width="58" height="12" rx="3" fill="url(#nb_GEO)"/>
<path d="M933 1006H942V1018H933A3 3 0 0 1 930 1015V1009A3 3 0 0 1 933 1006Z" fill="url(#nbIcon)"/>
<path d="M935.0 1008.0L932.5 1015.0H937.0Z" fill="#dde"/><circle cx="938.0" cy="1013.5" r="2" fill="url(#gOr)"/>
<text x="965.0" y="1014.4" font-size="6.6" fill="#ececec" text-anchor="middle" font-family="Liberation Sans" letter-spacing="-0.15">Your geometry</text>
<circle cx="949" cy="1006" r="2.3" fill="#4a4a4a" stroke="#e0e0e0" stroke-width="0.9"/>
<circle cx="968.5" cy="1006" r="2.3" fill="#4a4a4a" stroke="#e0e0e0" stroke-width="0.9"/>
<circle cx="959.0" cy="1018" r="2.3" fill="#4a4a4a" stroke="#e0e0e0" stroke-width="0.9"/>
<rect x="936" y="1033" width="47" height="12" rx="3" fill="url(#nb_PLACE)"/>
<path d="M939 1033H948V1045H939A3 3 0 0 1 936 1042V1036A3 3 0 0 1 939 1033Z" fill="url(#nbIcon)"/>
<path d="M941.0 1035.0L938.5 1042.0H943.0Z" fill="#dde"/><circle cx="944.0" cy="1040.5" r="2" fill="url(#gOr)"/>
<text x="965.5" y="1041.4" font-size="6.6" fill="#ececec" text-anchor="middle" font-family="Liberation Sans" letter-spacing="-0.15">Placement</text>
<circle cx="951.5" cy="1033" r="2.4" fill="#9aa8d8"/>
<circle cx="967.5" cy="1033" r="2.3" fill="#4a4a4a" stroke="#e0e0e0" stroke-width="0.9"/>
<circle cx="959.5" cy="1045" r="2.3" fill="#4a4a4a" stroke="#e0e0e0" stroke-width="0.9"/>
<rect x="1073" y="806" width="78" height="12" rx="3" fill="url(#nb_DISP)"/>
<path d="M1076 806H1085V818H1076A3 3 0 0 1 1073 815V809A3 3 0 0 1 1076 806Z" fill="url(#nbIcon)"/>
<path d="M1075.5 816.0V811.0Q1079.0 807.0 1082.5 811.0V816.0Z" fill="url(#gDisp)"/>
<text x="1118.0" y="814.4" font-size="6.6" fill="#ececec" text-anchor="middle" font-family="Liberation Sans" letter-spacing="-0.15">Displacement</text>
<circle cx="1082.0" cy="806" r="2.4" fill="#a8d0c4"/>
<circle cx="1091.9" cy="806" r="2.4" fill="#8ea6cc"/>
<circle cx="1101.8" cy="806" r="2.4" fill="#dcdcdc"/>
<circle cx="1111.7" cy="806" r="2.4" fill="#8ea6cc"/>
<circle cx="1121.6" cy="806" r="2.4" fill="#dcdcdc"/>
<circle cx="1131.5" cy="806" r="2.4" fill="#dcdcdc"/>
<circle cx="1141.4" cy="806" r="2.4" fill="#e0b44a"/>
<circle cx="1112.0" cy="818" r="2.3" fill="#4a4a4a" stroke="#e0e0e0" stroke-width="0.9"/>
<rect x="1062" y="836" width="128" height="13" rx="3" fill="url(#nb_NONE)"/>
<path d="M1065 836H1074V849H1065A3 3 0 0 1 1062 846V839A3 3 0 0 1 1065 836Z" fill="url(#nbIcon)"/>
<circle cx="1068.0" cy="842.5" r="4.2" fill="url(#gSph)"/>
<text x="1132.0" y="844.9" font-size="6.6" fill="#ececec" text-anchor="middle" font-family="Liberation Sans" letter-spacing="-0.15">None</text>
<circle cx="1071.0" cy="836" r="2.4" fill="#a8c8b0"/>
<circle cx="1080.9" cy="836" r="2.4" fill="#a8d0c0"/>
<circle cx="1090.8" cy="836" r="2.3" fill="#4a4a4a" stroke="#e0e0e0" stroke-width="0.9"/>
<circle cx="1100.7" cy="836" r="2.3" fill="#4a4a4a" stroke="#e0e0e0" stroke-width="0.9"/>
<circle cx="1110.6" cy="836" r="2.3" fill="#4a4a4a" stroke="#e0e0e0" stroke-width="0.9"/>
<circle cx="1120.5" cy="836" r="2.4" fill="#a8c8b0"/>
<circle cx="1130.4" cy="836" r="2.4" fill="#c9a3b3"/>
<circle cx="1140.3" cy="836" r="2.4" fill="#8ea6cc"/>
<circle cx="1150.2" cy="836" r="2.3" fill="#4a4a4a" stroke="#e0e0e0" stroke-width="0.9"/>
<circle cx="1160.1" cy="836" r="2.3" fill="#4a4a4a" stroke="#e0e0e0" stroke-width="0.9"/>
<circle cx="1170.0" cy="836" r="2.3" fill="#4a4a4a" stroke="#e0e0e0" stroke-width="0.9"/>
<circle cx="1179.9" cy="836" r="2.4" fill="#c9a8c0"/>
<circle cx="1126.0" cy="849" r="2.3" fill="#4a4a4a" stroke="#e0e0e0" stroke-width="0.9"/>
<rect x="1104" y="867" width="58" height="12" rx="3" fill="url(#nb_GEO)"/>
<path d="M1107 867H1116V879H1107A3 3 0 0 1 1104 876V870A3 3 0 0 1 1107 867Z" fill="url(#nbIcon)"/>
<path d="M1109.0 869.0L1106.5 876.0H1111.0Z" fill="#dde"/><circle cx="1112.0" cy="874.5" r="2" fill="url(#gOr)"/>
<text x="1139.0" y="875.4" font-size="6.6" fill="#ececec" text-anchor="middle" font-family="Liberation Sans" letter-spacing="-0.15">Your geometry</text>
<circle cx="1133" cy="867" r="2.3" fill="#4a4a4a" stroke="#e0e0e0" stroke-width="0.9"/>
<circle cx="1133.0" cy="879" r="2.3" fill="#4a4a4a" stroke="#e0e0e0" stroke-width="0.9"/>
<rect x="1109" y="894" width="47" height="12" rx="3" fill="url(#nb_PLACE)"/>
<path d="M1112 894H1121V906H1112A3 3 0 0 1 1109 903V897A3 3 0 0 1 1112 894Z" fill="url(#nbIcon)"/>
<path d="M1114.0 896.0L1111.5 903.0H1116.0Z" fill="#dde"/><circle cx="1117.0" cy="901.5" r="2" fill="url(#gOr)"/>
<text x="1138.5" y="902.4" font-size="6.6" fill="#ececec" text-anchor="middle" font-family="Liberation Sans" letter-spacing="-0.15">Placement</text>
<circle cx="1124.5" cy="894" r="2.4" fill="#9aa8d8"/>
<circle cx="1140.5" cy="894" r="2.3" fill="#4a4a4a" stroke="#e0e0e0" stroke-width="0.9"/>
<circle cx="1132.5" cy="906" r="2.3" fill="#4a4a4a" stroke="#e0e0e0" stroke-width="0.9"/>
<rect x="1193" y="800" width="54" height="12" rx="3" fill="url(#nb_UVT)"/>
<path d="M1196 800H1205V812H1196A3 3 0 0 1 1193 809V803A3 3 0 0 1 1196 800Z" fill="url(#nbIcon)"/>
<path d="M1195.5 809.5L1202.5 802.5M1200.0 802.5H1202.5V805.0" stroke="#eee" stroke-width="1" fill="none"/>
<text x="1226.0" y="808.4" font-size="6.6" fill="#ececec" text-anchor="middle" font-family="Liberation Sans" letter-spacing="-0.15">UV transform</text>
<circle cx="1220.0" cy="812" r="2.3" fill="#4a4a4a" stroke="#e0e0e0" stroke-width="0.9"/>
<rect x="1180" y="829" width="68" height="11" rx="3" fill="url(#nb_TEX)"/>
<path d="M1183 829H1192V840H1183A3 3 0 0 1 1180 837V832A3 3 0 0 1 1183 829Z" fill="url(#nbIcon)"/>
<rect x="1182.5" y="830.5" width="7" height="8" fill="#f4ece6"/><circle cx="1185.0" cy="834.5" r="1.4" fill="#a03a30"/><circle cx="1187.5" cy="836.5" r="1.5" fill="#c05030"/>
<text x="1220.0" y="836.9" font-size="6.6" fill="#ececec" text-anchor="middle" font-family="Liberation Sans" letter-spacing="-0.15">Texture</text>
<circle cx="1189.0" cy="829" r="2.4" fill="#a8d0c4"/>
<circle cx="1198.9" cy="829" r="2.4" fill="#8ea6cc"/>
<circle cx="1208.8" cy="829" r="2.4" fill="#c9a3b3"/>
<circle cx="1218.7" cy="829" r="2.3" fill="#4a4a4a" stroke="#e0e0e0" stroke-width="0.9"/>
<circle cx="1228.6" cy="829" r="2.4" fill="#e2e2d2"/>
<circle cx="1238.5" cy="829" r="2.4" fill="#e2e2d2"/>
<circle cx="1214.0" cy="840" r="2.3" fill="#4a4a4a" stroke="#e0e0e0" stroke-width="0.9"/>
<rect x="1204" y="859" width="78" height="12" rx="3" fill="url(#nb_DISP)"/>
<path d="M1207 859H1216V871H1207A3 3 0 0 1 1204 868V862A3 3 0 0 1 1207 859Z" fill="url(#nbIcon)"/>
<path d="M1206.5 869.0V864.0Q1210.0 860.0 1213.5 864.0V869.0Z" fill="url(#gDisp)"/>
<text x="1249.0" y="867.4" font-size="6.6" fill="#ececec" text-anchor="middle" font-family="Liberation Sans" letter-spacing="-0.15">Displacement</text>
<circle cx="1213.0" cy="859" r="2.4" fill="#a8d0c4"/>
<circle cx="1222.9" cy="859" r="2.4" fill="#8ea6cc"/>
<circle cx="1232.8" cy="859" r="2.4" fill="#dcdcdc"/>
<circle cx="1242.7" cy="859" r="2.4" fill="#8ea6cc"/>
<circle cx="1252.6" cy="859" r="2.4" fill="#dcdcdc"/>
<circle cx="1262.5" cy="859" r="2.4" fill="#dcdcdc"/>
<circle cx="1272.4" cy="859" r="2.4" fill="#e0b44a"/>
<circle cx="1243.0" cy="871" r="2.3" fill="#4a4a4a" stroke="#e0e0e0" stroke-width="0.9"/>
<rect x="1193" y="889" width="128" height="13" rx="3" fill="url(#nb_NONE)"/>
<path d="M1196 889H1205V902H1196A3 3 0 0 1 1193 899V892A3 3 0 0 1 1196 889Z" fill="url(#nbIcon)"/>
<circle cx="1199.0" cy="895.5" r="4.2" fill="url(#gSph)"/>
<text x="1263.0" y="897.9" font-size="6.6" fill="#ececec" text-anchor="middle" font-family="Liberation Sans" letter-spacing="-0.15">None</text>
<circle cx="1202.0" cy="889" r="2.4" fill="#a8c8b0"/>
<circle cx="1211.9" cy="889" r="2.4" fill="#a8d0c0"/>
<circle cx="1221.8" cy="889" r="2.3" fill="#4a4a4a" stroke="#e0e0e0" stroke-width="0.9"/>
<circle cx="1231.7" cy="889" r="2.3" fill="#4a4a4a" stroke="#e0e0e0" stroke-width="0.9"/>
<circle cx="1241.6" cy="889" r="2.3" fill="#4a4a4a" stroke="#e0e0e0" stroke-width="0.9"/>
<circle cx="1251.5" cy="889" r="2.4" fill="#a8c8b0"/>
<circle cx="1261.4" cy="889" r="2.4" fill="#c9a3b3"/>
<circle cx="1271.3" cy="889" r="2.4" fill="#8ea6cc"/>
<circle cx="1281.2" cy="889" r="2.3" fill="#4a4a4a" stroke="#e0e0e0" stroke-width="0.9"/>
<circle cx="1291.1" cy="889" r="2.3" fill="#4a4a4a" stroke="#e0e0e0" stroke-width="0.9"/>
<circle cx="1301.0" cy="889" r="2.3" fill="#4a4a4a" stroke="#e0e0e0" stroke-width="0.9"/>
<circle cx="1310.9" cy="889" r="2.4" fill="#c9a8c0"/>
<circle cx="1257.0" cy="902" r="2.3" fill="#4a4a4a" stroke="#e0e0e0" stroke-width="0.9"/>
<rect x="1235" y="920" width="58" height="12" rx="3" fill="url(#nb_GEO)"/>
<path d="M1238 920H1247V932H1238A3 3 0 0 1 1235 929V923A3 3 0 0 1 1238 920Z" fill="url(#nbIcon)"/>
<path d="M1240.0 922.0L1237.5 929.0H1242.0Z" fill="#dde"/><circle cx="1243.0" cy="927.5" r="2" fill="url(#gOr)"/>
<text x="1270.0" y="928.4" font-size="6.6" fill="#ececec" text-anchor="middle" font-family="Liberation Sans" letter-spacing="-0.15">Your geometry</text>
<circle cx="1264" cy="920" r="2.3" fill="#4a4a4a" stroke="#e0e0e0" stroke-width="0.9"/>
<circle cx="1264.0" cy="932" r="2.3" fill="#4a4a4a" stroke="#e0e0e0" stroke-width="0.9"/>
<rect x="1229" y="949" width="46" height="12" rx="3" fill="url(#nb_PLACE)"/>
<path d="M1232 949H1241V961H1232A3 3 0 0 1 1229 958V952A3 3 0 0 1 1232 949Z" fill="url(#nbIcon)"/>
<path d="M1234.0 951.0L1231.5 958.0H1236.0Z" fill="#dde"/><circle cx="1237.0" cy="956.5" r="2" fill="url(#gOr)"/>
<text x="1258.0" y="957.4" font-size="6.6" fill="#ececec" text-anchor="middle" font-family="Liberation Sans" letter-spacing="-0.15">Placement</text>
<circle cx="1244.5" cy="949" r="2.4" fill="#9aa8d8"/>
<circle cx="1260.5" cy="949" r="2.3" fill="#4a4a4a" stroke="#e0e0e0" stroke-width="0.9"/>
<circle cx="1252.0" cy="961" r="2.3" fill="#4a4a4a" stroke="#e0e0e0" stroke-width="0.9"/>
<rect x="1301" y="805" width="68" height="11" rx="3" fill="url(#nb_TEX)"/>
<path d="M1304 805H1313V816H1304A3 3 0 0 1 1301 813V808A3 3 0 0 1 1304 805Z" fill="url(#nbIcon)"/>
<rect x="1303.5" y="806.5" width="7" height="8" fill="#f4ece6"/><circle cx="1306.0" cy="810.5" r="1.4" fill="#a03a30"/><circle cx="1308.5" cy="812.5" r="1.5" fill="#c05030"/>
<text x="1341.0" y="812.9" font-size="6.6" fill="#ececec" text-anchor="middle" font-family="Liberation Sans" letter-spacing="-0.15">Texture</text>
<circle cx="1310.0" cy="805" r="2.4" fill="#a8d0c4"/>
<circle cx="1319.9" cy="805" r="2.4" fill="#8ea6cc"/>
<circle cx="1329.8" cy="805" r="2.4" fill="#c9a3b3"/>
<circle cx="1339.7" cy="805" r="2.3" fill="#4a4a4a" stroke="#e0e0e0" stroke-width="0.9"/>
<circle cx="1349.6" cy="805" r="2.4" fill="#e2e2d2"/>
<circle cx="1359.5" cy="805" r="2.4" fill="#e2e2d2"/>
<circle cx="1335.0" cy="816" r="2.3" fill="#4a4a4a" stroke="#e0e0e0" stroke-width="0.9"/>
<rect x="1325" y="835" width="78" height="12" rx="3" fill="url(#nb_DISP)"/>
<path d="M1328 835H1337V847H1328A3 3 0 0 1 1325 844V838A3 3 0 0 1 1328 835Z" fill="url(#nbIcon)"/>
<path d="M1327.5 845.0V840.0Q1331.0 836.0 1334.5 840.0V845.0Z" fill="url(#gDisp)"/>
<text x="1370.0" y="843.4" font-size="6.6" fill="#ececec" text-anchor="middle" font-family="Liberation Sans" letter-spacing="-0.15">Displacement</text>
<circle cx="1334.0" cy="835" r="2.4" fill="#a8d0c4"/>
<circle cx="1343.9" cy="835" r="2.4" fill="#8ea6cc"/>
<circle cx="1353.8" cy="835" r="2.4" fill="#dcdcdc"/>
<circle cx="1363.7" cy="835" r="2.4" fill="#8ea6cc"/>
<circle cx="1373.6" cy="835" r="2.4" fill="#dcdcdc"/>
<circle cx="1383.5" cy="835" r="2.4" fill="#dcdcdc"/>
<circle cx="1393.4" cy="835" r="2.4" fill="#e0b44a"/>
<circle cx="1364.0" cy="847" r="2.3" fill="#4a4a4a" stroke="#e0e0e0" stroke-width="0.9"/>
<rect x="1314" y="865" width="128" height="13" rx="3" fill="url(#nb_NONE)"/>
<path d="M1317 865H1326V878H1317A3 3 0 0 1 1314 875V868A3 3 0 0 1 1317 865Z" fill="url(#nbIcon)"/>
<circle cx="1320.0" cy="871.5" r="4.2" fill="url(#gSph)"/>
<text x="1384.0" y="873.9" font-size="6.6" fill="#ececec" text-anchor="middle" font-family="Liberation Sans" letter-spacing="-0.15">None</text>
<circle cx="1323.0" cy="865" r="2.4" fill="#a8c8b0"/>
<circle cx="1332.9" cy="865" r="2.4" fill="#a8d0c0"/>
<circle cx="1342.8" cy="865" r="2.3" fill="#4a4a4a" stroke="#e0e0e0" stroke-width="0.9"/>
<circle cx="1352.7" cy="865" r="2.3" fill="#4a4a4a" stroke="#e0e0e0" stroke-width="0.9"/>
<circle cx="1362.6" cy="865" r="2.3" fill="#4a4a4a" stroke="#e0e0e0" stroke-width="0.9"/>
<circle cx="1372.5" cy="865" r="2.4" fill="#a8c8b0"/>
<circle cx="1382.4" cy="865" r="2.4" fill="#c9a3b3"/>
<circle cx="1392.3" cy="865" r="2.4" fill="#8ea6cc"/>
<circle cx="1402.2" cy="865" r="2.3" fill="#4a4a4a" stroke="#e0e0e0" stroke-width="0.9"/>
<circle cx="1412.1" cy="865" r="2.3" fill="#4a4a4a" stroke="#e0e0e0" stroke-width="0.9"/>
<circle cx="1422.0" cy="865" r="2.3" fill="#4a4a4a" stroke="#e0e0e0" stroke-width="0.9"/>
<circle cx="1431.9" cy="865" r="2.4" fill="#c9a8c0"/>
<circle cx="1378.0" cy="878" r="2.3" fill="#4a4a4a" stroke="#e0e0e0" stroke-width="0.9"/>
<rect x="1356" y="896" width="58" height="12" rx="3" fill="url(#nb_GEO)"/>
<path d="M1359 896H1368V908H1359A3 3 0 0 1 1356 905V899A3 3 0 0 1 1359 896Z" fill="url(#nbIcon)"/>
<path d="M1361.0 898.0L1358.5 905.0H1363.0Z" fill="#dde"/><circle cx="1364.0" cy="903.5" r="2" fill="url(#gOr)"/>
<text x="1391.0" y="904.4" font-size="6.6" fill="#ececec" text-anchor="middle" font-family="Liberation Sans" letter-spacing="-0.15">Your geometry</text>
<circle cx="1385" cy="896" r="2.3" fill="#4a4a4a" stroke="#e0e0e0" stroke-width="0.9"/>
<circle cx="1385.0" cy="908" r="2.3" fill="#4a4a4a" stroke="#e0e0e0" stroke-width="0.9"/>
<rect x="1350" y="926" width="47" height="12" rx="3" fill="url(#nb_PLACE)"/>
<path d="M1353 926H1362V938H1353A3 3 0 0 1 1350 935V929A3 3 0 0 1 1353 926Z" fill="url(#nbIcon)"/>
<path d="M1355.0 928.0L1352.5 935.0H1357.0Z" fill="#dde"/><circle cx="1358.0" cy="933.5" r="2" fill="url(#gOr)"/>
<text x="1379.5" y="934.4" font-size="6.6" fill="#ececec" text-anchor="middle" font-family="Liberation Sans" letter-spacing="-0.15">Placement</text>
<circle cx="1365.5" cy="926" r="2.4" fill="#9aa8d8"/>
<circle cx="1381.5" cy="926" r="2.3" fill="#4a4a4a" stroke="#e0e0e0" stroke-width="0.9"/>
<circle cx="1373.5" cy="938" r="2.3" fill="#4a4a4a" stroke="#e0e0e0" stroke-width="0.9"/>
</g></svg>
<div class="a" style="left:298px;top:806px;width:109px;height:113px;box-sizing:border-box;background:#474747;border-right:1.5px solid #111;border-bottom:1.5px solid #111;border-left:1px solid #222"></div>
<svg class="a" style="left:0;top:0" width="1920" height="1080" viewBox="0 0 1920 1080">
<rect x="300" y="850" width="43" height="13.5" fill="none" stroke="#c0a040" stroke-width="1"/>
<rect x="315.1" y="862.3" width="3.5" height="1" fill="#e8e8d8"/>
<rect x="335.2" y="864.8" width="2.3" height="1" fill="#e8e8d8"/>
<rect x="302.7" y="871.1" width="3.0" height="1" fill="#e8e8d8"/>
<rect x="314.9" y="875.9" width="3.9" height="1" fill="#e8e8d8"/>
<rect x="348.0" y="860.3" width="4.6" height="1" fill="#e8e8d8"/>
<rect x="310.3" y="865.0" width="5.5" height="1" fill="#e8e8d8"/>
<rect x="330.8" y="868.2" width="4.7" height="1" fill="#e8e8d8"/>
<rect x="305.5" y="868.7" width="4.4" height="1" fill="#e8e8d8"/>
<rect x="318.6" y="846.9" width="5.5" height="1" fill="#e8e8d8"/>
<rect x="328.0" y="867.6" width="5.5" height="1" fill="#e8e8d8"/>
<rect x="341.3" y="873.6" width="3.6" height="1" fill="#e8e8d8"/>
<rect x="346.0" y="859.3" width="5.7" height="1" fill="#e8e8d8"/>
<rect x="350.3" y="848.9" width="2.5" height="1" fill="#e8e8d8"/>
<rect x="313.9" y="875.0" width="3.7" height="1" fill="#e8e8d8"/>
<rect x="336.5" y="855.0" width="4.0" height="1" fill="#e8e8d8"/>
<rect x="323.2" y="856.5" width="4.3" height="1" fill="#e8e8d8"/>
<rect x="334.1" y="873.1" width="4.7" height="1" fill="#e8e8d8"/>
<rect x="353.1" y="871.7" width="6.0" height="1" fill="#e8e8d8"/>
<rect x="338.9" y="850.9" width="5.4" height="1" fill="#e8e8d8"/>
<rect x="355.1" y="873.1" width="4.3" height="1" fill="#e8e8d8"/>
<rect x="341.3" y="852.3" width="5.3" height="1" fill="#e8e8d8"/>
<rect x="333.5" y="854.5" width="2.3" height="1" fill="#e8e8d8"/>
<rect x="349.0" y="875.7" width="2.4" height="1" fill="#e8e8d8"/>
<rect x="346.0" y="858.3" width="2.6" height="1" fill="#e8e8d8"/>
<rect x="318.2" y="869.1" width="5.5" height="1" fill="#e8e8d8"/>
<rect x="304.4" y="864.4" width="2.2" height="1" fill="#e8e8d8"/>
<rect x="341.5" y="855.9" width="5.5" height="1" fill="#e8e8d8"/>
<rect x="355.9" y="861.2" width="6.0" height="1" fill="#e8e8d8"/>
<rect x="319.0" y="848.3" width="4.4" height="1" fill="#e8e8d8"/>
<rect x="303.7" y="851.9" width="3.6" height="1" fill="#e8e8d8"/>
<rect x="335.6" y="850.7" width="2.2" height="1" fill="#e8e8d8"/>
<rect x="349.7" y="855.4" width="5.8" height="1" fill="#e8e8d8"/>
<rect x="351.3" y="857.3" width="3.8" height="1" fill="#e8e8d8"/>
<rect x="330.6" y="865.3" width="4.4" height="1" fill="#e8e8d8"/>
<rect x="332.8" y="864.6" width="5.8" height="1" fill="#e8e8d8"/>
<rect x="329.9" y="858.9" width="4.9" height="1" fill="#e8e8d8"/>
<rect x="315.1" y="855.0" width="5.9" height="1" fill="#e8e8d8"/>
<rect x="330.7" y="862.5" width="2.0" height="1" fill="#e8e8d8"/>
<rect x="324.8" y="863.4" width="2.1" height="1" fill="#e8e8d8"/>
<rect x="335.9" y="865.0" width="2.2" height="1" fill="#e8e8d8"/>
<rect x="359" y="872.5" width="45" height="1" fill="#e8e8e8"/><rect x="359" y="868" width="16" height="1" fill="#d8d8d8"/><rect x="323" y="871" width="10" height="1" fill="#8aa0d8"/><rect x="329" y="876.5" width="16" height="1" fill="#c8d8e8"/>
</svg>
</body></html>
